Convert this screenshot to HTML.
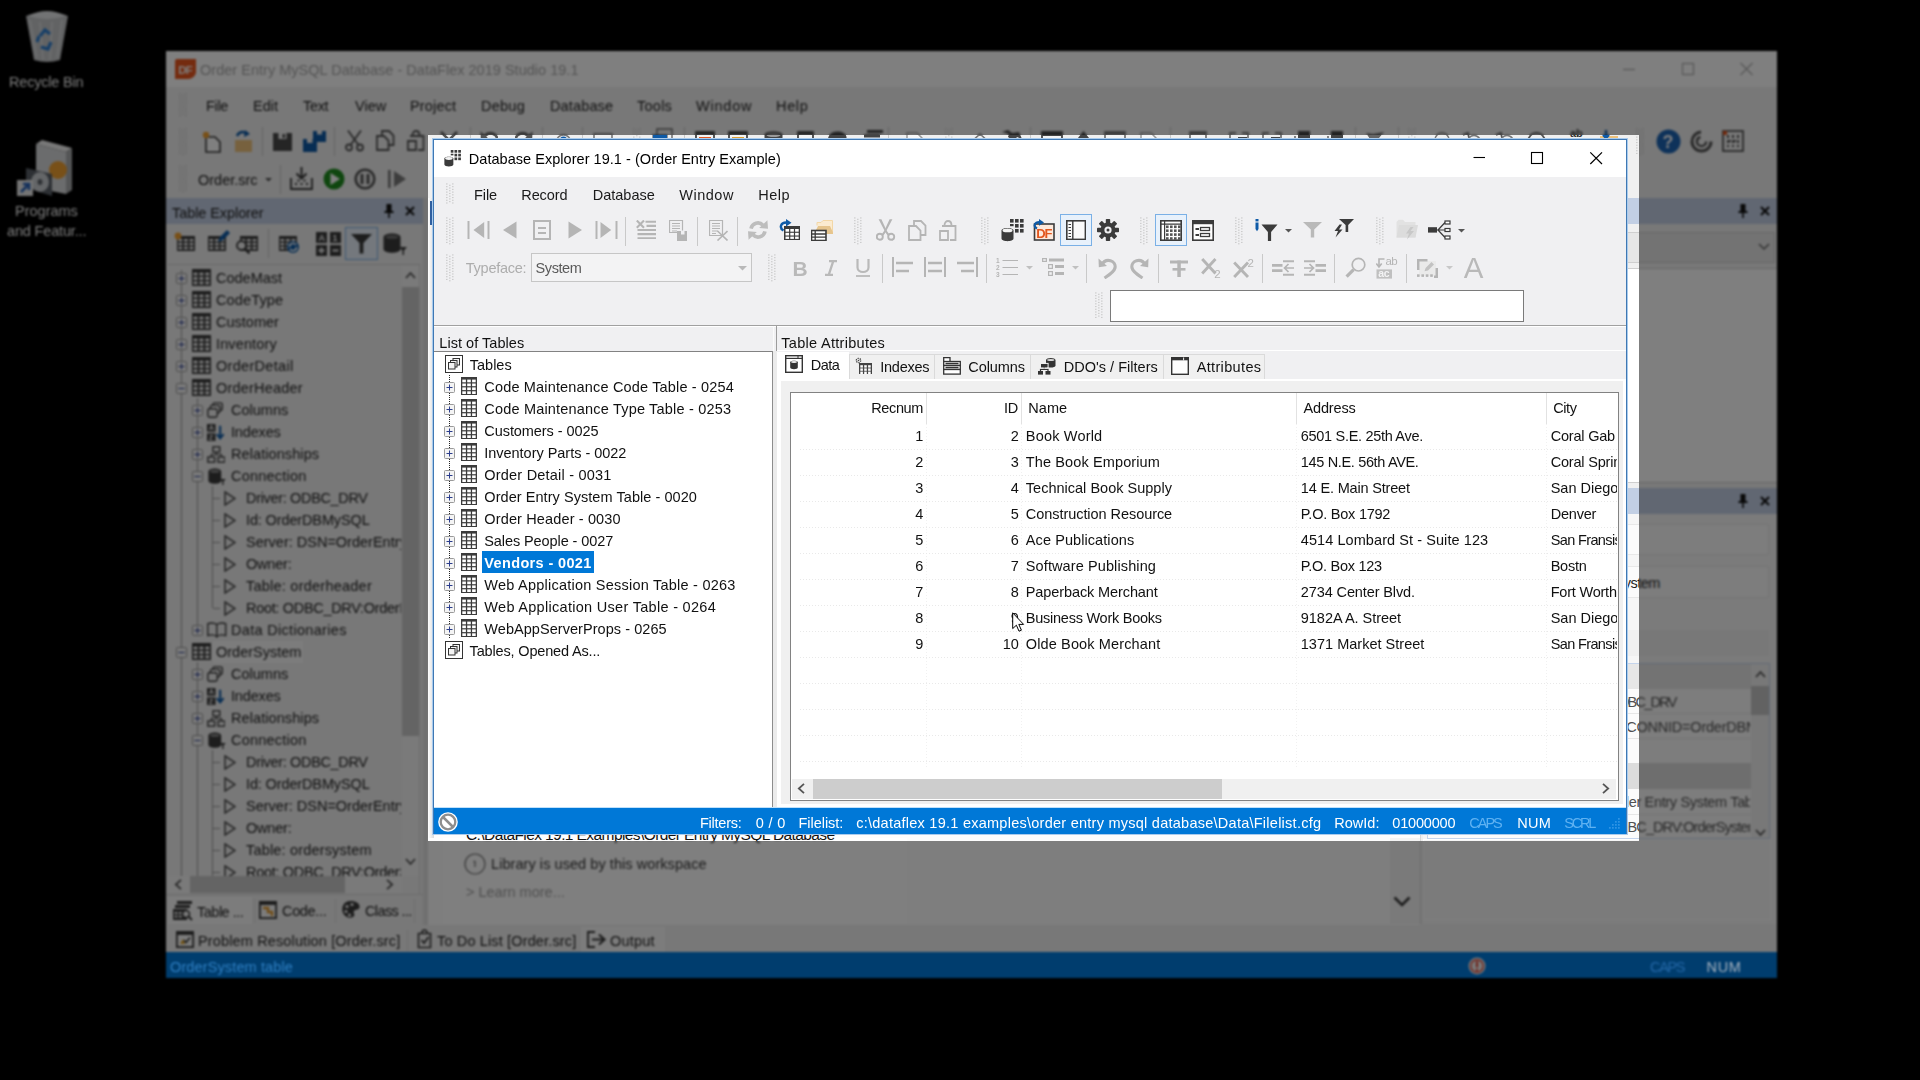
<!DOCTYPE html><html><head><meta charset="utf-8"><title>Database Explorer</title><style>
html,body{margin:0;padding:0;background:#000;}
body{width:1920px;height:1080px;position:relative;overflow:hidden;font-family:"Liberation Sans",sans-serif;}
.r{position:absolute;display:block;}
.t{position:absolute;white-space:pre;line-height:20px;font-size:14.5px;}
#blur{position:absolute;left:0;top:0;width:1920px;height:1080px;filter:blur(0.9px);}
#spot{position:absolute;left:428px;top:135px;width:1211px;height:706px;overflow:hidden;}
#spotin{position:absolute;left:-428px;top:-135px;width:1920px;height:1080px;}
#dbx{position:absolute;left:0;top:0;width:1920px;height:1080px;will-change:transform;}
</style></head><body>
<div id="blur"><svg class="r" style="left:20px;top:6px;" width="54" height="58" viewBox="0 0 54 58"><path d="M6 10L14 54Q27 58 40 54L48 10Q27 2 6 10Z" fill="#626364"/><path d="M8 10Q27 0 46 10Q27 16 8 10Z" fill="#727374"/><path d="M10 14L17 52M20 16L23 54M32 16L30 54M42 14L37 52" stroke="#6c6d6e" stroke-width="2" fill="none"/><g fill="none" stroke="#173f68" stroke-width="3.2"><path d="M20 30L25 24L30 28"/><path d="M31 36L28 43L21 41"/><path d="M17 36L19 30"/></g></svg>
<span class="t" style="left:9.00px;top:71.78px;font-size:14.5px;color:#7f7f7f;letter-spacing:-0.200px;">Recycle Bin</span>
<svg class="r" style="left:16px;top:138px;" width="58" height="60" viewBox="0 0 58 60"><path d="M20 6L50 14V56L20 50Z" fill="#6b6c6d"/><path d="M20 6L26 2L56 10L50 14Z" fill="#787878"/><path d="M50 14L56 10V52L50 56Z" fill="#545556"/><circle cx="42" cy="32" r="9" fill="#785018"/><path d="M10 30L36 36V58L10 50Z" fill="#2d3034"/><ellipse cx="24" cy="44" rx="9" ry="10" fill="#646668"/><ellipse cx="24" cy="44" rx="2.5" ry="3" fill="#303336"/><rect x="1" y="42" width="16" height="16" fill="#747474"/><path d="M5 54L12 47M7 46H13V52" stroke="#15315c" stroke-width="2.6" fill="none"/></svg>
<span class="t" style="left:15.00px;top:201.28px;font-size:14.5px;color:#7f7f7f;">Programs</span>
<span class="t" style="left:7.00px;top:221.28px;font-size:14.5px;color:#7f7f7f;letter-spacing:-0.167px;">and Featur...</span><div class="r " style="left:166px;top:51px;width:1611px;height:927px;background:#787878;"></div>
<div class="r " style="left:166px;top:51px;width:1611px;height:36px;background:#7f7f7f;"></div>
<svg class="r" style="left:175px;top:59px;" width="21" height="20" viewBox="0 0 21 20"><path d="M2 0H21V14Q19 20 12 20H0V2Q0 0 2 0Z" fill="#742b0f"/><text x="3.2" y="14.5" font-family="Liberation Sans,sans-serif" font-weight="bold" font-size="11.5" letter-spacing="-0.8" fill="#7f7f7f">DF</text></svg>
<span class="t" style="left:200.00px;top:60.28px;font-size:14.5px;color:#545454;letter-spacing:0.019px;">Order Entry MySQL Database - DataFlex 2019 Studio 19.1</span>
<svg class="r" style="left:1620px;top:60px;" width="140" height="18" viewBox="0 0 140 18"><g stroke="#585858" stroke-width="1.2" fill="none"><path d="M3 9.5H15"/><rect x="62.5" y="3.5" width="11" height="11"/><path d="M120.5 3L132.5 15M132.5 3L120.5 15"/></g></svg>
<svg class="r" style="left:179px;top:93px;" width="8" height="24" viewBox="0 0 8 24"><g fill="#5e5e5e"><rect x="0.3" y="0.40" width="1.1" height="1.1"/><rect x="6.3" y="0.40" width="1.1" height="1.1"/><rect x="3.3" y="1.76" width="1.1" height="1.1"/><rect x="0.3" y="3.12" width="1.1" height="1.1"/><rect x="6.3" y="3.12" width="1.1" height="1.1"/><rect x="3.3" y="4.48" width="1.1" height="1.1"/><rect x="0.3" y="5.84" width="1.1" height="1.1"/><rect x="6.3" y="5.84" width="1.1" height="1.1"/><rect x="3.3" y="7.20" width="1.1" height="1.1"/><rect x="0.3" y="8.56" width="1.1" height="1.1"/><rect x="6.3" y="8.56" width="1.1" height="1.1"/><rect x="3.3" y="9.92" width="1.1" height="1.1"/><rect x="0.3" y="11.28" width="1.1" height="1.1"/><rect x="6.3" y="11.28" width="1.1" height="1.1"/><rect x="3.3" y="12.64" width="1.1" height="1.1"/><rect x="0.3" y="14.00" width="1.1" height="1.1"/><rect x="6.3" y="14.00" width="1.1" height="1.1"/><rect x="3.3" y="15.36" width="1.1" height="1.1"/><rect x="0.3" y="16.72" width="1.1" height="1.1"/><rect x="6.3" y="16.72" width="1.1" height="1.1"/><rect x="3.3" y="18.08" width="1.1" height="1.1"/><rect x="0.3" y="19.44" width="1.1" height="1.1"/><rect x="6.3" y="19.44" width="1.1" height="1.1"/><rect x="3.3" y="20.80" width="1.1" height="1.1"/><rect x="0.3" y="22.16" width="1.1" height="1.1"/><rect x="6.3" y="22.16" width="1.1" height="1.1"/></g></svg>
<span class="t" style="left:206.00px;top:96.28px;font-size:14.5px;color:#0f0f0f;letter-spacing:-0.333px;">File</span>
<span class="t" style="left:253.00px;top:96.28px;font-size:14.5px;color:#0f0f0f;">Edit</span>
<span class="t" style="left:303.00px;top:96.28px;font-size:14.5px;color:#0f0f0f;letter-spacing:-0.333px;">Text</span>
<span class="t" style="left:355.00px;top:96.28px;font-size:14.5px;color:#0f0f0f;">View</span>
<span class="t" style="left:410.00px;top:96.28px;font-size:14.5px;color:#0f0f0f;letter-spacing:0.167px;">Project</span>
<span class="t" style="left:481.00px;top:96.28px;font-size:14.5px;color:#0f0f0f;letter-spacing:0.250px;">Debug</span>
<span class="t" style="left:550.00px;top:96.28px;font-size:14.5px;color:#0f0f0f;letter-spacing:0.143px;">Database</span>
<span class="t" style="left:637.00px;top:96.28px;font-size:14.5px;color:#0f0f0f;letter-spacing:0.250px;">Tools</span>
<span class="t" style="left:696.00px;top:96.28px;font-size:14.5px;color:#0f0f0f;letter-spacing:0.800px;">Window</span>
<span class="t" style="left:776.00px;top:96.28px;font-size:14.5px;color:#0f0f0f;letter-spacing:0.667px;">Help</span>
<svg class="r" style="left:179px;top:128px;" width="8" height="28" viewBox="0 0 8 28"><g fill="#5e5e5e"><rect x="0.3" y="0.40" width="1.1" height="1.1"/><rect x="6.3" y="0.40" width="1.1" height="1.1"/><rect x="3.3" y="1.76" width="1.1" height="1.1"/><rect x="0.3" y="3.12" width="1.1" height="1.1"/><rect x="6.3" y="3.12" width="1.1" height="1.1"/><rect x="3.3" y="4.48" width="1.1" height="1.1"/><rect x="0.3" y="5.84" width="1.1" height="1.1"/><rect x="6.3" y="5.84" width="1.1" height="1.1"/><rect x="3.3" y="7.20" width="1.1" height="1.1"/><rect x="0.3" y="8.56" width="1.1" height="1.1"/><rect x="6.3" y="8.56" width="1.1" height="1.1"/><rect x="3.3" y="9.92" width="1.1" height="1.1"/><rect x="0.3" y="11.28" width="1.1" height="1.1"/><rect x="6.3" y="11.28" width="1.1" height="1.1"/><rect x="3.3" y="12.64" width="1.1" height="1.1"/><rect x="0.3" y="14.00" width="1.1" height="1.1"/><rect x="6.3" y="14.00" width="1.1" height="1.1"/><rect x="3.3" y="15.36" width="1.1" height="1.1"/><rect x="0.3" y="16.72" width="1.1" height="1.1"/><rect x="6.3" y="16.72" width="1.1" height="1.1"/><rect x="3.3" y="18.08" width="1.1" height="1.1"/><rect x="0.3" y="19.44" width="1.1" height="1.1"/><rect x="6.3" y="19.44" width="1.1" height="1.1"/><rect x="3.3" y="20.80" width="1.1" height="1.1"/><rect x="0.3" y="22.16" width="1.1" height="1.1"/><rect x="6.3" y="22.16" width="1.1" height="1.1"/><rect x="3.3" y="23.52" width="1.1" height="1.1"/><rect x="0.3" y="24.88" width="1.1" height="1.1"/><rect x="6.3" y="24.88" width="1.1" height="1.1"/><rect x="3.3" y="26.24" width="1.1" height="1.1"/></g></svg>
<svg class="r" style="left:202px;top:130px;" width="22" height="24" viewBox="0 0 22 24"><path d="M4 7H13L18 12V22H4Z" fill="#7f7f7f" stroke="#1d1d1d" stroke-width="1.6"/><circle cx="4" cy="5" r="3.2" fill="#785018"/></svg>
<svg class="r" style="left:232px;top:130px;" width="23" height="24" viewBox="0 0 23 24"><path d="M3 10H20V22H3Z" fill="#77613e"/><path d="M5 6C7 1 13 1 15 4" stroke="#072d53" stroke-width="2.4" fill="none"/><path d="M13 0L18 4L12 7Z" fill="#072d53"/></svg>
<div class="r " style="left:262px;top:127px;width:1px;height:29px;background:#646464;"></div>
<svg class="r" style="left:273px;top:133px;" width="19" height="18" viewBox="0 0 19 18"><path d="M0 0H19V18H0Z" fill="#252525"/><rect x="5.5" y="0" width="8" height="6" fill="#787878"/><rect x="9.5" y="1" width="2.5" height="4" fill="#252525"/></svg>
<svg class="r" style="left:303px;top:131px;" width="23" height="21" viewBox="0 0 23 21"><path d="M10 0H23V11H10Z" fill="#072d53"/><path d="M0 8H14V21H0Z" fill="#072d53"/><rect x="14" y="0" width="5" height="3.5" fill="#787878"/><rect x="4" y="8" width="5.5" height="4" fill="#787878"/></svg>
<div class="r " style="left:334px;top:127px;width:1px;height:29px;background:#646464;"></div>
<svg class="r" style="left:345px;top:130px;" width="20" height="22" viewBox="0 0 20 22"><g fill="none" stroke="#2a2a2a" stroke-width="1.8"><circle cx="4" cy="17.5" r="3"/><circle cx="15" cy="17.5" r="3"/><path d="M3 0.5L13.5 15M16 0.5L5.5 15"/></g></svg>
<svg class="r" style="left:376px;top:130px;" width="19" height="21" viewBox="0 0 19 21"><g fill="none" stroke="#2a2a2a" stroke-width="1.8"><path d="M6 5V1H13L17.5 5.5V15H13"/><path d="M1 6H8L12.5 10.5V20H1Z"/></g></svg>
<svg class="r" style="left:407px;top:130px;" width="18" height="21" viewBox="0 0 18 21"><g fill="none" stroke="#2a2a2a" stroke-width="1.8"><path d="M5.5 5.5C5.5 -0.5 12.5 -0.5 12.5 5.5"/><path d="M3 6H16.5V20H11"/><path d="M1 11H9V20H1Z"/></g></svg>
<svg class="r" style="left:440px;top:131px;" width="18" height="18" viewBox="0 0 18 18"><path d="M1 1L17 17M17 1L1 17" stroke="#2a2a2a" stroke-width="2.6"/></svg>
<svg class="r" style="left:480px;top:131px;" width="18" height="20" viewBox="0 0 18 20"><path d="M0.5 0.5L0.8 9.2L9 8Z" fill="#2a2a2a"/><path d="M3.5 7C8 -1 18.5 2.5 17 10" fill="none" stroke="#2a2a2a" stroke-width="2.8"/></svg>
<svg class="r" style="left:515px;top:131px;" width="18" height="20" viewBox="0 0 18 20"><g transform="translate(18,0) scale(-1,1)"><path d="M0.5 0.5L0.8 9.2L9 8Z" fill="#2a2a2a"/><path d="M3.5 7C8 -1 18.5 2.5 17 10" fill="none" stroke="#2a2a2a" stroke-width="2.8"/></g></svg>
<svg class="r" style="left:555px;top:134px;" width="17" height="17" viewBox="0 0 17 17"><circle cx="8.5" cy="8.5" r="7.5" fill="none" stroke="#3b3b3b" stroke-width="1.6"/><circle cx="8.5" cy="6" r="3.6" fill="#072d53"/></svg>
<svg class="r" style="left:593px;top:133px;" width="20" height="18" viewBox="0 0 20 18"><rect x="1" y="1" width="18" height="16" fill="none" stroke="#3b3b3b" stroke-width="1.6"/></svg>
<svg class="r" style="left:633px;top:128px;" width="8" height="28" viewBox="0 0 8 28"><g fill="#5e5e5e"><rect x="0.3" y="0.40" width="1.1" height="1.1"/><rect x="6.3" y="0.40" width="1.1" height="1.1"/><rect x="3.3" y="1.76" width="1.1" height="1.1"/><rect x="0.3" y="3.12" width="1.1" height="1.1"/><rect x="6.3" y="3.12" width="1.1" height="1.1"/><rect x="3.3" y="4.48" width="1.1" height="1.1"/><rect x="0.3" y="5.84" width="1.1" height="1.1"/><rect x="6.3" y="5.84" width="1.1" height="1.1"/><rect x="3.3" y="7.20" width="1.1" height="1.1"/><rect x="0.3" y="8.56" width="1.1" height="1.1"/><rect x="6.3" y="8.56" width="1.1" height="1.1"/><rect x="3.3" y="9.92" width="1.1" height="1.1"/><rect x="0.3" y="11.28" width="1.1" height="1.1"/><rect x="6.3" y="11.28" width="1.1" height="1.1"/><rect x="3.3" y="12.64" width="1.1" height="1.1"/><rect x="0.3" y="14.00" width="1.1" height="1.1"/><rect x="6.3" y="14.00" width="1.1" height="1.1"/><rect x="3.3" y="15.36" width="1.1" height="1.1"/><rect x="0.3" y="16.72" width="1.1" height="1.1"/><rect x="6.3" y="16.72" width="1.1" height="1.1"/><rect x="3.3" y="18.08" width="1.1" height="1.1"/><rect x="0.3" y="19.44" width="1.1" height="1.1"/><rect x="6.3" y="19.44" width="1.1" height="1.1"/><rect x="3.3" y="20.80" width="1.1" height="1.1"/><rect x="0.3" y="22.16" width="1.1" height="1.1"/><rect x="6.3" y="22.16" width="1.1" height="1.1"/><rect x="3.3" y="23.52" width="1.1" height="1.1"/><rect x="0.3" y="24.88" width="1.1" height="1.1"/><rect x="6.3" y="24.88" width="1.1" height="1.1"/><rect x="3.3" y="26.24" width="1.1" height="1.1"/></g></svg>
<svg class="r" style="left:652px;top:128px;" width="21" height="24" viewBox="0 0 21 24"><rect x="5" y="1" width="15" height="12" fill="none" stroke="#3b3b3b" stroke-width="1.6"/><rect x="1" y="7" width="14" height="14" fill="#7a7a7a" stroke="#3b3b3b" stroke-width="1.4"/><rect x="1" y="7" width="14" height="3" fill="#072d53"/></svg>
<svg class="r" style="left:695px;top:131px;" width="20" height="21" viewBox="0 0 20 21"><rect x="1" y="1" width="18" height="19" fill="#7a7a7a" stroke="#222222" stroke-width="1.8"/><rect x="1" y="1" width="18" height="3" fill="#222222"/><rect x="4" y="6" width="12" height="10" fill="#712b0f"/></svg>
<svg class="r" style="left:728px;top:131px;" width="20" height="21" viewBox="0 0 20 21"><rect x="1" y="1" width="18" height="19" fill="#7a7a7a" stroke="#222222" stroke-width="1.8"/><rect x="1" y="1" width="18" height="3" fill="#222222"/><rect x="4" y="6" width="12" height="10" fill="#705018"/></svg>
<svg class="r" style="left:764px;top:131px;" width="19" height="21" viewBox="0 0 19 21"><path d="M0.5 4C0.5 -0.6 18.5 -0.6 18.5 4V17C18.5 21.6 0.5 21.6 0.5 17Z" fill="#222222"/><ellipse cx="9.5" cy="4" rx="7" ry="2" fill="#4d4d4d"/></svg>
<svg class="r" style="left:797px;top:131px;" width="17" height="21" viewBox="0 0 17 21"><rect x="1" y="1" width="15" height="19" fill="#7a7a7a" stroke="#222222" stroke-width="1.8"/><rect x="1" y="1" width="15" height="3" fill="#222222"/></svg>
<svg class="r" style="left:827px;top:131px;" width="20" height="20" viewBox="0 0 20 20"><path d="M10 0.5C2 0.5 -1 8 2 13.5C5 19 13 20 14 16C15 13 11.5 12.5 14 10C17 8.5 20 10 19.5 6C19 2.5 15 0.5 10 0.5Z" fill="#222222"/></svg>
<svg class="r" style="left:861px;top:130px;" width="22" height="22" viewBox="0 0 22 22"><g fill="#222222"><rect x="6" y="0" width="16" height="3"/><rect x="3" y="4.5" width="16" height="3"/><rect x="0" y="9" width="16" height="12"/></g></svg>
<svg class="r" style="left:906px;top:132px;" width="18" height="21" viewBox="0 0 18 21"><path d="M1 1H11L17 7V20H1Z" fill="#7c7c7c" stroke="#4d4d4d" stroke-width="1.5"/></svg>
<svg class="r" style="left:945px;top:128px;" width="8" height="28" viewBox="0 0 8 28"><g fill="#5e5e5e"><rect x="0.3" y="0.40" width="1.1" height="1.1"/><rect x="6.3" y="0.40" width="1.1" height="1.1"/><rect x="3.3" y="1.76" width="1.1" height="1.1"/><rect x="0.3" y="3.12" width="1.1" height="1.1"/><rect x="6.3" y="3.12" width="1.1" height="1.1"/><rect x="3.3" y="4.48" width="1.1" height="1.1"/><rect x="0.3" y="5.84" width="1.1" height="1.1"/><rect x="6.3" y="5.84" width="1.1" height="1.1"/><rect x="3.3" y="7.20" width="1.1" height="1.1"/><rect x="0.3" y="8.56" width="1.1" height="1.1"/><rect x="6.3" y="8.56" width="1.1" height="1.1"/><rect x="3.3" y="9.92" width="1.1" height="1.1"/><rect x="0.3" y="11.28" width="1.1" height="1.1"/><rect x="6.3" y="11.28" width="1.1" height="1.1"/><rect x="3.3" y="12.64" width="1.1" height="1.1"/><rect x="0.3" y="14.00" width="1.1" height="1.1"/><rect x="6.3" y="14.00" width="1.1" height="1.1"/><rect x="3.3" y="15.36" width="1.1" height="1.1"/><rect x="0.3" y="16.72" width="1.1" height="1.1"/><rect x="6.3" y="16.72" width="1.1" height="1.1"/><rect x="3.3" y="18.08" width="1.1" height="1.1"/><rect x="0.3" y="19.44" width="1.1" height="1.1"/><rect x="6.3" y="19.44" width="1.1" height="1.1"/><rect x="3.3" y="20.80" width="1.1" height="1.1"/><rect x="0.3" y="22.16" width="1.1" height="1.1"/><rect x="6.3" y="22.16" width="1.1" height="1.1"/><rect x="3.3" y="23.52" width="1.1" height="1.1"/><rect x="0.3" y="24.88" width="1.1" height="1.1"/><rect x="6.3" y="24.88" width="1.1" height="1.1"/><rect x="3.3" y="26.24" width="1.1" height="1.1"/></g></svg>
<svg class="r" style="left:969px;top:133px;" width="22" height="18" viewBox="0 0 22 18"><path d="M1 10L11 1L21 10" fill="none" stroke="#3b3b3b" stroke-width="1.6"/><rect x="4" y="10" width="14" height="8" fill="none" stroke="#3b3b3b" stroke-width="1.4"/></svg>
<svg class="r" style="left:1000px;top:130px;" width="23" height="22" viewBox="0 0 23 22"><path d="M2 2L9 4L8 7L14 11L17 7L22 9L19 2L12 3L8 0ZM3 12L10 9L13 13L5 21L1 17Z" fill="#222222"/></svg>
<svg class="r" style="left:1041px;top:131px;" width="22" height="21" viewBox="0 0 22 21"><rect x="1" y="1" width="20" height="19" fill="#7a7a7a" stroke="#222222" stroke-width="1.8"/><rect x="1" y="1" width="20" height="4" fill="#222222"/></svg>
<svg class="r" style="left:1074px;top:131px;" width="19" height="20" viewBox="0 0 19 20"><path d="M9.5 0L19 12H0Z" fill="#222222"/><rect x="7" y="12" width="5" height="8" fill="#222222"/></svg>
<svg class="r" style="left:1104px;top:131px;" width="22" height="21" viewBox="0 0 22 21"><rect x="1" y="1" width="20" height="19" fill="#7a7a7a" stroke="#3b3b3b" stroke-width="1.8"/><rect x="1" y="1" width="20" height="3" fill="#3b3b3b"/></svg>
<svg class="r" style="left:1140px;top:132px;" width="18" height="21" viewBox="0 0 18 21"><path d="M1 1H11L17 7V20H1Z" fill="#7c7c7c" stroke="#4d4d4d" stroke-width="1.5"/></svg>
<svg class="r" style="left:1189px;top:131px;" width="18" height="21" viewBox="0 0 18 21"><rect x="1" y="1" width="16" height="19" fill="#7a7a7a" stroke="#3b3b3b" stroke-width="1.8"/><rect x="1" y="1" width="16" height="3" fill="#3b3b3b"/></svg>
<svg class="r" style="left:1229px;top:132px;" width="20" height="20" viewBox="0 0 20 20"><path d="M7 1H1V19H7M13 1H19V10" fill="none" stroke="#3b3b3b" stroke-width="1.8"/><rect x="9" y="5" width="9" height="9" fill="#222222"/></svg>
<svg class="r" style="left:1262px;top:132px;" width="20" height="20" viewBox="0 0 20 20"><path d="M7 1H1V19H7M13 1H19V10" fill="none" stroke="#3b3b3b" stroke-width="1.8"/><rect x="9" y="5" width="9" height="9" fill="#222222"/></svg>
<svg class="r" style="left:1294px;top:131px;" width="20" height="20" viewBox="0 0 20 20"><rect x="4" y="0" width="12" height="9" fill="#222222"/><path d="M1 5V19H19V12" fill="none" stroke="#3b3b3b" stroke-width="1.8"/></svg>
<svg class="r" style="left:1327px;top:131px;" width="20" height="20" viewBox="0 0 20 20"><rect x="4" y="0" width="12" height="9" fill="#222222"/><path d="M1 5V19H19V12" fill="none" stroke="#3b3b3b" stroke-width="1.8"/></svg>
<svg class="r" style="left:1364px;top:131px;" width="22" height="20" viewBox="0 0 22 20"><path d="M2 2L9 3L20 1L15 7L20 12L10 9L3 14L6 8Z" fill="#333333"/></svg>
<svg class="r" style="left:1408px;top:128px;" width="8" height="28" viewBox="0 0 8 28"><g fill="#5e5e5e"><rect x="0.3" y="0.40" width="1.1" height="1.1"/><rect x="6.3" y="0.40" width="1.1" height="1.1"/><rect x="3.3" y="1.76" width="1.1" height="1.1"/><rect x="0.3" y="3.12" width="1.1" height="1.1"/><rect x="6.3" y="3.12" width="1.1" height="1.1"/><rect x="3.3" y="4.48" width="1.1" height="1.1"/><rect x="0.3" y="5.84" width="1.1" height="1.1"/><rect x="6.3" y="5.84" width="1.1" height="1.1"/><rect x="3.3" y="7.20" width="1.1" height="1.1"/><rect x="0.3" y="8.56" width="1.1" height="1.1"/><rect x="6.3" y="8.56" width="1.1" height="1.1"/><rect x="3.3" y="9.92" width="1.1" height="1.1"/><rect x="0.3" y="11.28" width="1.1" height="1.1"/><rect x="6.3" y="11.28" width="1.1" height="1.1"/><rect x="3.3" y="12.64" width="1.1" height="1.1"/><rect x="0.3" y="14.00" width="1.1" height="1.1"/><rect x="6.3" y="14.00" width="1.1" height="1.1"/><rect x="3.3" y="15.36" width="1.1" height="1.1"/><rect x="0.3" y="16.72" width="1.1" height="1.1"/><rect x="6.3" y="16.72" width="1.1" height="1.1"/><rect x="3.3" y="18.08" width="1.1" height="1.1"/><rect x="0.3" y="19.44" width="1.1" height="1.1"/><rect x="6.3" y="19.44" width="1.1" height="1.1"/><rect x="3.3" y="20.80" width="1.1" height="1.1"/><rect x="0.3" y="22.16" width="1.1" height="1.1"/><rect x="6.3" y="22.16" width="1.1" height="1.1"/><rect x="3.3" y="23.52" width="1.1" height="1.1"/><rect x="0.3" y="24.88" width="1.1" height="1.1"/><rect x="6.3" y="24.88" width="1.1" height="1.1"/><rect x="3.3" y="26.24" width="1.1" height="1.1"/></g></svg>
<svg class="r" style="left:1431px;top:132px;" width="20" height="20" viewBox="0 0 20 20"><circle cx="11" cy="8" r="7" fill="none" stroke="#3b3b3b" stroke-width="1.6"/><path d="M6 13L1 19" stroke="#3b3b3b" stroke-width="2.6"/></svg>
<svg class="r" style="left:1462px;top:132px;" width="20" height="18" viewBox="0 0 20 18"><path d="M1 3L6 1L7 6" fill="none" stroke="#2a2a2a" stroke-width="1.8"/><circle cx="12" cy="10" r="6.5" fill="none" stroke="#3b3b3b" stroke-width="1.6"/></svg>
<svg class="r" style="left:1495px;top:132px;" width="20" height="18" viewBox="0 0 20 18"><path d="M1 3L6 1L7 6" fill="none" stroke="#2a2a2a" stroke-width="1.8"/><circle cx="12" cy="10" r="6.5" fill="none" stroke="#3b3b3b" stroke-width="1.6"/></svg>
<svg class="r" style="left:1526px;top:131px;" width="21" height="21" viewBox="0 0 21 21"><circle cx="10.5" cy="10.5" r="8.5" fill="none" stroke="#2a2a2a" stroke-width="1.8"/><circle cx="10.5" cy="10.5" r="3" fill="#3b3b3b"/></svg>
<svg class="r" style="left:1566px;top:128px;" width="22" height="22" viewBox="0 0 22 22"><text x="4" y="9" font-family="Liberation Sans,sans-serif" font-size="11" font-weight="bold" fill="#191919">ab</text><rect x="1" y="12" width="14" height="9" fill="#3b3b3b"/></svg>
<div class="r " style="left:470px;top:127px;width:1px;height:29px;background:#646464;"></div>
<div class="r " style="left:542px;top:127px;width:1px;height:29px;background:#646464;"></div>
<div class="r " style="left:582px;top:127px;width:1px;height:29px;background:#646464;"></div>
<div class="r " style="left:684px;top:127px;width:1px;height:29px;background:#646464;"></div>
<div class="r " style="left:888px;top:127px;width:1px;height:29px;background:#646464;"></div>
<div class="r " style="left:1030px;top:127px;width:1px;height:29px;background:#646464;"></div>
<div class="r " style="left:1170px;top:127px;width:1px;height:29px;background:#646464;"></div>
<div class="r " style="left:1355px;top:127px;width:1px;height:29px;background:#646464;"></div>
<div class="r " style="left:1398px;top:127px;width:1px;height:29px;background:#646464;"></div>
<svg class="r" style="left:1598px;top:130px;" width="22" height="22" viewBox="0 0 22 22"><path d="M2 6H20V20H2Z" fill="#77613e"/><path d="M8 0V8M5 5L8 8L11 5" stroke="#072d53" stroke-width="2.4" fill="none"/></svg>
<svg class="r" style="left:1636px;top:128px;" width="8" height="28" viewBox="0 0 8 28"><g fill="#5e5e5e"><rect x="0.3" y="0.40" width="1.1" height="1.1"/><rect x="6.3" y="0.40" width="1.1" height="1.1"/><rect x="3.3" y="1.76" width="1.1" height="1.1"/><rect x="0.3" y="3.12" width="1.1" height="1.1"/><rect x="6.3" y="3.12" width="1.1" height="1.1"/><rect x="3.3" y="4.48" width="1.1" height="1.1"/><rect x="0.3" y="5.84" width="1.1" height="1.1"/><rect x="6.3" y="5.84" width="1.1" height="1.1"/><rect x="3.3" y="7.20" width="1.1" height="1.1"/><rect x="0.3" y="8.56" width="1.1" height="1.1"/><rect x="6.3" y="8.56" width="1.1" height="1.1"/><rect x="3.3" y="9.92" width="1.1" height="1.1"/><rect x="0.3" y="11.28" width="1.1" height="1.1"/><rect x="6.3" y="11.28" width="1.1" height="1.1"/><rect x="3.3" y="12.64" width="1.1" height="1.1"/><rect x="0.3" y="14.00" width="1.1" height="1.1"/><rect x="6.3" y="14.00" width="1.1" height="1.1"/><rect x="3.3" y="15.36" width="1.1" height="1.1"/><rect x="0.3" y="16.72" width="1.1" height="1.1"/><rect x="6.3" y="16.72" width="1.1" height="1.1"/><rect x="3.3" y="18.08" width="1.1" height="1.1"/><rect x="0.3" y="19.44" width="1.1" height="1.1"/><rect x="6.3" y="19.44" width="1.1" height="1.1"/><rect x="3.3" y="20.80" width="1.1" height="1.1"/><rect x="0.3" y="22.16" width="1.1" height="1.1"/><rect x="6.3" y="22.16" width="1.1" height="1.1"/><rect x="3.3" y="23.52" width="1.1" height="1.1"/><rect x="0.3" y="24.88" width="1.1" height="1.1"/><rect x="6.3" y="24.88" width="1.1" height="1.1"/><rect x="3.3" y="26.24" width="1.1" height="1.1"/></g></svg>
<svg class="r" style="left:1656px;top:129px;" width="25" height="25" viewBox="0 0 25 25"><circle cx="12.5" cy="12.5" r="12" fill="#0e325a"/><text x="6.5" y="19" font-family="Liberation Sans,sans-serif" font-weight="bold" font-size="18" fill="#7f7f7f">?</text></svg>
<svg class="r" style="left:1690px;top:130px;" width="23" height="23" viewBox="0 0 23 23"><g fill="none" stroke="#2a2a2a"><circle cx="11.5" cy="11.5" r="9.5" stroke-width="3" stroke-dasharray="44 16"/><circle cx="11.5" cy="11.5" r="4.6" stroke-width="2.4" stroke-dasharray="20 9"/></g></svg>
<svg class="r" style="left:1722px;top:130px;" width="22" height="22" viewBox="0 0 22 22"><rect x="1" y="1" width="20" height="20" fill="#787878" stroke="#2a2a2a" stroke-width="1.8"/><path d="M6 5V17M11 5V17M16 5V17M6 11H16" stroke="#2a2a2a" stroke-width="2" stroke-dasharray="3 2"/><rect x="1" y="1" width="4" height="4" fill="#712b0f"/></svg>
<svg class="r" style="left:179px;top:165px;" width="8" height="28" viewBox="0 0 8 28"><g fill="#5e5e5e"><rect x="0.3" y="0.40" width="1.1" height="1.1"/><rect x="6.3" y="0.40" width="1.1" height="1.1"/><rect x="3.3" y="1.76" width="1.1" height="1.1"/><rect x="0.3" y="3.12" width="1.1" height="1.1"/><rect x="6.3" y="3.12" width="1.1" height="1.1"/><rect x="3.3" y="4.48" width="1.1" height="1.1"/><rect x="0.3" y="5.84" width="1.1" height="1.1"/><rect x="6.3" y="5.84" width="1.1" height="1.1"/><rect x="3.3" y="7.20" width="1.1" height="1.1"/><rect x="0.3" y="8.56" width="1.1" height="1.1"/><rect x="6.3" y="8.56" width="1.1" height="1.1"/><rect x="3.3" y="9.92" width="1.1" height="1.1"/><rect x="0.3" y="11.28" width="1.1" height="1.1"/><rect x="6.3" y="11.28" width="1.1" height="1.1"/><rect x="3.3" y="12.64" width="1.1" height="1.1"/><rect x="0.3" y="14.00" width="1.1" height="1.1"/><rect x="6.3" y="14.00" width="1.1" height="1.1"/><rect x="3.3" y="15.36" width="1.1" height="1.1"/><rect x="0.3" y="16.72" width="1.1" height="1.1"/><rect x="6.3" y="16.72" width="1.1" height="1.1"/><rect x="3.3" y="18.08" width="1.1" height="1.1"/><rect x="0.3" y="19.44" width="1.1" height="1.1"/><rect x="6.3" y="19.44" width="1.1" height="1.1"/><rect x="3.3" y="20.80" width="1.1" height="1.1"/><rect x="0.3" y="22.16" width="1.1" height="1.1"/><rect x="6.3" y="22.16" width="1.1" height="1.1"/><rect x="3.3" y="23.52" width="1.1" height="1.1"/><rect x="0.3" y="24.88" width="1.1" height="1.1"/><rect x="6.3" y="24.88" width="1.1" height="1.1"/><rect x="3.3" y="26.24" width="1.1" height="1.1"/></g></svg>
<span class="t" style="left:198.00px;top:170.28px;font-size:14.5px;color:#0f0f0f;">Order.src</span>
<svg class="r" style="left:265px;top:178px;" width="7" height="4" viewBox="0 0 7 4"><path fill="#2a2a2a" d="M0 0H7L3.5 3.6Z"/></svg>
<div class="r " style="left:280px;top:165px;width:1px;height:29px;background:#646464;"></div>
<svg class="r" style="left:290px;top:167px;" width="23" height="23" viewBox="0 0 23 23"><path d="M1 11V22H22V11" fill="none" stroke="#1d1d1d" stroke-width="1.8"/><path d="M11.5 0V11M6.5 6.5L11.5 11.5L16.5 6.5" stroke="#1d1d1d" stroke-width="2" fill="none"/><path d="M5 17H7M10.5 17H12.5M16 17H18M7.5 13.5H9.5M13.5 13.5H15.5" stroke="#1d1d1d" stroke-width="2"/></svg>
<svg class="r" style="left:323px;top:168px;" width="22" height="22" viewBox="0 0 22 22"><circle cx="11" cy="11" r="10.5" fill="#0f460f"/><path d="M7.5 5L17 11L7.5 17Z" fill="#7f7f7f"/></svg>
<svg class="r" style="left:354px;top:168px;" width="22" height="22" viewBox="0 0 22 22"><circle cx="11" cy="11" r="9.3" fill="none" stroke="#2a2a2a" stroke-width="2.6"/><path d="M8 6V16M14 6V16" stroke="#2a2a2a" stroke-width="3"/></svg>
<svg class="r" style="left:388px;top:170px;" width="19" height="18" viewBox="0 0 19 18"><rect x="0" y="0" width="2.6" height="18" fill="#3d3d3d"/><path d="M6 1L18 9L6 17Z" fill="#3d3d3d"/></svg><div class="r " style="left:166px;top:198px;width:257px;height:26px;background:#616772;"></div>
<span class="t" style="left:172.00px;top:202.98px;font-size:14.5px;color:#0f0f0f;letter-spacing:-0.077px;">Table Explorer</span>
<svg class="r" style="left:384px;top:204px;" width="10" height="14" viewBox="0 0 10 14"><path d="M2.5 0H7.5V7H9.5V9H0.5V7H2.5Z" fill="#080808"/><path d="M5 9V14" stroke="#080808" stroke-width="1.6"/></svg>
<svg class="r" style="left:405px;top:206px;" width="10" height="10" viewBox="0 0 10 10"><path d="M1 1L9 9M9 1L1 9" stroke="#080808" stroke-width="2"/></svg>
<svg class="r" style="left:177px;top:236px;" width="18" height="15" viewBox="0 0 18 15"><rect width="18" height="15" fill="#1d1d1d"/><g fill="#787878"><rect x="1.3" y="3" width="3.9" height="2.4"/><rect x="1.3" y="6.9" width="3.9" height="2.4"/><rect x="1.3" y="10.8" width="3.9" height="2.4"/><rect x="6.9" y="3" width="3.9" height="2.4"/><rect x="6.9" y="6.9" width="3.9" height="2.4"/><rect x="6.9" y="10.8" width="3.9" height="2.4"/><rect x="12.5" y="3" width="3.9" height="2.4"/><rect x="12.5" y="6.9" width="3.9" height="2.4"/><rect x="12.5" y="10.8" width="3.9" height="2.4"/></g></svg>
<svg class="r" style="left:208px;top:236px;" width="18" height="15" viewBox="0 0 18 15"><rect width="18" height="15" fill="#1d1d1d"/><g fill="#787878"><rect x="1.3" y="3" width="3.9" height="2.4"/><rect x="1.3" y="6.9" width="3.9" height="2.4"/><rect x="1.3" y="10.8" width="3.9" height="2.4"/><rect x="6.9" y="3" width="3.9" height="2.4"/><rect x="6.9" y="6.9" width="3.9" height="2.4"/><rect x="6.9" y="10.8" width="3.9" height="2.4"/><rect x="12.5" y="3" width="3.9" height="2.4"/><rect x="12.5" y="6.9" width="3.9" height="2.4"/><rect x="12.5" y="10.8" width="3.9" height="2.4"/></g></svg>
<svg class="r" style="left:240px;top:236px;" width="18" height="15" viewBox="0 0 18 15"><rect width="18" height="15" fill="#1d1d1d"/><g fill="#787878"><rect x="1.3" y="3" width="3.9" height="2.4"/><rect x="1.3" y="6.9" width="3.9" height="2.4"/><rect x="1.3" y="10.8" width="3.9" height="2.4"/><rect x="6.9" y="3" width="3.9" height="2.4"/><rect x="6.9" y="6.9" width="3.9" height="2.4"/><rect x="6.9" y="10.8" width="3.9" height="2.4"/><rect x="12.5" y="3" width="3.9" height="2.4"/><rect x="12.5" y="6.9" width="3.9" height="2.4"/><rect x="12.5" y="10.8" width="3.9" height="2.4"/></g></svg>
<svg class="r" style="left:279px;top:236px;" width="18" height="15" viewBox="0 0 18 15"><rect width="18" height="15" fill="#1d1d1d"/><g fill="#787878"><rect x="1.3" y="3" width="3.9" height="2.4"/><rect x="1.3" y="6.9" width="3.9" height="2.4"/><rect x="1.3" y="10.8" width="3.9" height="2.4"/><rect x="6.9" y="3" width="3.9" height="2.4"/><rect x="6.9" y="6.9" width="3.9" height="2.4"/><rect x="6.9" y="10.8" width="3.9" height="2.4"/><rect x="12.5" y="3" width="3.9" height="2.4"/><rect x="12.5" y="6.9" width="3.9" height="2.4"/><rect x="12.5" y="10.8" width="3.9" height="2.4"/></g></svg>
<svg class="r" style="left:174px;top:232px;" width="8" height="8" viewBox="0 0 8 8"><circle cx="4" cy="4" r="3.4" fill="#785018"/></svg>
<svg class="r" style="left:218px;top:230px;" width="12" height="12" viewBox="0 0 12 12"><path d="M0 12L2 7L9 0L12 3L5 10Z" fill="#072d53"/></svg>
<svg class="r" style="left:236px;top:240px;" width="14" height="14" viewBox="0 0 14 14"><circle cx="5.5" cy="5.5" r="4.5" fill="#787878" stroke="#1d1d1d" stroke-width="1.8"/><path d="M9 9L13.5 13.5" stroke="#1d1d1d" stroke-width="2.4"/></svg>
<div class="r " style="left:268px;top:229px;width:1px;height:29px;background:#646464;"></div>
<svg class="r" style="left:286px;top:240px;" width="14" height="14" viewBox="0 0 14 14"><circle cx="7" cy="7" r="6" fill="#072d53"/><path d="M3.5 7A3.5 3.5 0 0 1 10 5M10.5 7A3.5 3.5 0 0 1 4 9" stroke="#7f7f7f" stroke-width="1.6" fill="none"/></svg>
<svg class="r" style="left:316px;top:232px;" width="25" height="24" viewBox="0 0 25 24"><g fill="#1d1d1d"><rect x="0" y="0" width="11" height="11"/><rect x="14" y="0" width="11" height="11"/><rect x="0" y="13" width="11" height="11"/><rect x="14" y="13" width="11" height="11"/></g><g fill="#787878" font-family="Liberation Sans,sans-serif" font-weight="bold" font-size="9"><text x="2.4" y="8.7">A</text><text x="16.6" y="8.7">1</text></g><path d="M2.5 18.5H8.5M5.5 15.5V21.5M16.5 18.5H22.5" stroke="#787878" stroke-width="1.8"/></svg>
<div class="r " style="left:345px;top:227px;width:33px;height:33px;background:#74787d;border:1px solid #3d5873;box-sizing:border-box;"></div>
<svg class="r" style="left:351px;top:234px;" width="21" height="20" viewBox="0 0 21 20"><path fill="#1d1d1d" d="M0 0H21L12.4 9V19.5H8.6V9Z"/></svg>
<svg class="r" style="left:383px;top:233px;" width="24" height="22" viewBox="0 0 24 22"><path d="M0.5 4C0.5 -0.8 17.5 -0.8 17.5 4V16C17.5 21 0.5 21 0.5 16Z" fill="#1d1d1d"/><ellipse cx="9" cy="4" rx="6.5" ry="1.8" fill="#3b3b3b"/><path d="M16 14H24L21 17.5V22H19.5V17.5Z" fill="#1d1d1d"/></svg>
<div class="r " style="left:168px;top:264px;width:252px;height:1px;background:#686868;"></div>
<div class="r" style="left:168px;top:265px;width:232.5px;height:611px;overflow:hidden">
<div class="r " style="left:13px;top:5px;width:1px;height:620px;background:#4d4d4d;"></div>
<div class="r " style="left:29px;top:133px;width:1px;height:236px;background:#4d4d4d;"></div>
<div class="r " style="left:29px;top:397px;width:1px;height:240px;background:#4d4d4d;"></div>
<div class="r " style="left:44px;top:221px;width:1px;height:122px;background:#4d4d4d;"></div>
<div class="r " style="left:44px;top:485px;width:1px;height:140px;background:#4d4d4d;"></div>
<div class="r " style="left:45px;top:376px;width:90px;height:22px;background:#7c7c7c;"></div>
<span class="t" style="left:48.00px;top:3.28px;font-size:14.5px;color:#0f0f0f;">CodeMast</span>
<svg class="r" style="left:8px;top:7.5px;" width="11" height="11" viewBox="0 0 11 11"><rect x="0.5" y="0.5" width="10" height="10" rx="1" fill="#7a7a7a" stroke="#4d4d4d"/><path d="M2.5 5.5H8.5M5.5 2.5V8.5" stroke="#151e46" stroke-width="1" fill="none"/></svg>
<svg class="r" style="left:24px;top:4px;" width="19" height="17" viewBox="0 0 19 17"><rect width="19" height="17" fill="#1d1d1d"/><g fill="#787878"><rect x="1.5" y="3.6" width="4" height="2.9"/><rect x="1.5" y="8" width="4" height="2.9"/><rect x="1.5" y="12.4" width="4" height="2.9"/><rect x="7.4" y="3.6" width="4" height="2.9"/><rect x="7.4" y="8" width="4" height="2.9"/><rect x="7.4" y="12.4" width="4" height="2.9"/><rect x="13.3" y="3.6" width="4" height="2.9"/><rect x="13.3" y="8" width="4" height="2.9"/><rect x="13.3" y="12.4" width="4" height="2.9"/></g></svg>
<span class="t" style="left:48.00px;top:25.28px;font-size:14.5px;color:#0f0f0f;letter-spacing:0.143px;">CodeType</span>
<svg class="r" style="left:8px;top:29.5px;" width="11" height="11" viewBox="0 0 11 11"><rect x="0.5" y="0.5" width="10" height="10" rx="1" fill="#7a7a7a" stroke="#4d4d4d"/><path d="M2.5 5.5H8.5M5.5 2.5V8.5" stroke="#151e46" stroke-width="1" fill="none"/></svg>
<svg class="r" style="left:24px;top:26px;" width="19" height="17" viewBox="0 0 19 17"><rect width="19" height="17" fill="#1d1d1d"/><g fill="#787878"><rect x="1.5" y="3.6" width="4" height="2.9"/><rect x="1.5" y="8" width="4" height="2.9"/><rect x="1.5" y="12.4" width="4" height="2.9"/><rect x="7.4" y="3.6" width="4" height="2.9"/><rect x="7.4" y="8" width="4" height="2.9"/><rect x="7.4" y="12.4" width="4" height="2.9"/><rect x="13.3" y="3.6" width="4" height="2.9"/><rect x="13.3" y="8" width="4" height="2.9"/><rect x="13.3" y="12.4" width="4" height="2.9"/></g></svg>
<span class="t" style="left:48.00px;top:47.28px;font-size:14.5px;color:#0f0f0f;">Customer</span>
<svg class="r" style="left:8px;top:51.5px;" width="11" height="11" viewBox="0 0 11 11"><rect x="0.5" y="0.5" width="10" height="10" rx="1" fill="#7a7a7a" stroke="#4d4d4d"/><path d="M2.5 5.5H8.5M5.5 2.5V8.5" stroke="#151e46" stroke-width="1" fill="none"/></svg>
<svg class="r" style="left:24px;top:48px;" width="19" height="17" viewBox="0 0 19 17"><rect width="19" height="17" fill="#1d1d1d"/><g fill="#787878"><rect x="1.5" y="3.6" width="4" height="2.9"/><rect x="1.5" y="8" width="4" height="2.9"/><rect x="1.5" y="12.4" width="4" height="2.9"/><rect x="7.4" y="3.6" width="4" height="2.9"/><rect x="7.4" y="8" width="4" height="2.9"/><rect x="7.4" y="12.4" width="4" height="2.9"/><rect x="13.3" y="3.6" width="4" height="2.9"/><rect x="13.3" y="8" width="4" height="2.9"/><rect x="13.3" y="12.4" width="4" height="2.9"/></g></svg>
<span class="t" style="left:48.00px;top:69.28px;font-size:14.5px;color:#0f0f0f;letter-spacing:0.125px;">Inventory</span>
<svg class="r" style="left:8px;top:73.5px;" width="11" height="11" viewBox="0 0 11 11"><rect x="0.5" y="0.5" width="10" height="10" rx="1" fill="#7a7a7a" stroke="#4d4d4d"/><path d="M2.5 5.5H8.5M5.5 2.5V8.5" stroke="#151e46" stroke-width="1" fill="none"/></svg>
<svg class="r" style="left:24px;top:70px;" width="19" height="17" viewBox="0 0 19 17"><rect width="19" height="17" fill="#1d1d1d"/><g fill="#787878"><rect x="1.5" y="3.6" width="4" height="2.9"/><rect x="1.5" y="8" width="4" height="2.9"/><rect x="1.5" y="12.4" width="4" height="2.9"/><rect x="7.4" y="3.6" width="4" height="2.9"/><rect x="7.4" y="8" width="4" height="2.9"/><rect x="7.4" y="12.4" width="4" height="2.9"/><rect x="13.3" y="3.6" width="4" height="2.9"/><rect x="13.3" y="8" width="4" height="2.9"/><rect x="13.3" y="12.4" width="4" height="2.9"/></g></svg>
<span class="t" style="left:48.00px;top:91.28px;font-size:14.5px;color:#0f0f0f;letter-spacing:0.300px;">OrderDetail</span>
<svg class="r" style="left:8px;top:95.5px;" width="11" height="11" viewBox="0 0 11 11"><rect x="0.5" y="0.5" width="10" height="10" rx="1" fill="#7a7a7a" stroke="#4d4d4d"/><path d="M2.5 5.5H8.5M5.5 2.5V8.5" stroke="#151e46" stroke-width="1" fill="none"/></svg>
<svg class="r" style="left:24px;top:92px;" width="19" height="17" viewBox="0 0 19 17"><rect width="19" height="17" fill="#1d1d1d"/><g fill="#787878"><rect x="1.5" y="3.6" width="4" height="2.9"/><rect x="1.5" y="8" width="4" height="2.9"/><rect x="1.5" y="12.4" width="4" height="2.9"/><rect x="7.4" y="3.6" width="4" height="2.9"/><rect x="7.4" y="8" width="4" height="2.9"/><rect x="7.4" y="12.4" width="4" height="2.9"/><rect x="13.3" y="3.6" width="4" height="2.9"/><rect x="13.3" y="8" width="4" height="2.9"/><rect x="13.3" y="12.4" width="4" height="2.9"/></g></svg>
<span class="t" style="left:48.00px;top:113.28px;font-size:14.5px;color:#0f0f0f;letter-spacing:0.200px;">OrderHeader</span>
<svg class="r" style="left:8px;top:117.5px;" width="11" height="11" viewBox="0 0 11 11"><rect x="0.5" y="0.5" width="10" height="10" rx="1" fill="#7a7a7a" stroke="#4d4d4d"/><path d="M2.5 5.5H8.5" stroke="#151e46" stroke-width="1" fill="none"/></svg>
<svg class="r" style="left:24px;top:114px;" width="19" height="17" viewBox="0 0 19 17"><rect width="19" height="17" fill="#1d1d1d"/><g fill="#787878"><rect x="1.5" y="3.6" width="4" height="2.9"/><rect x="1.5" y="8" width="4" height="2.9"/><rect x="1.5" y="12.4" width="4" height="2.9"/><rect x="7.4" y="3.6" width="4" height="2.9"/><rect x="7.4" y="8" width="4" height="2.9"/><rect x="7.4" y="12.4" width="4" height="2.9"/><rect x="13.3" y="3.6" width="4" height="2.9"/><rect x="13.3" y="8" width="4" height="2.9"/><rect x="13.3" y="12.4" width="4" height="2.9"/></g></svg>
<span class="t" style="left:63.00px;top:135.28px;font-size:14.5px;color:#0f0f0f;">Columns</span>
<svg class="r" style="left:24px;top:139.5px;" width="11" height="11" viewBox="0 0 11 11"><rect x="0.5" y="0.5" width="10" height="10" rx="1" fill="#7a7a7a" stroke="#4d4d4d"/><path d="M2.5 5.5H8.5M5.5 2.5V8.5" stroke="#151e46" stroke-width="1" fill="none"/></svg>
<svg class="r" style="left:38.5px;top:136.5px;" width="17" height="17" viewBox="0 0 20 20"><g fill="#787878" stroke="#1d1d1d" stroke-width="1.6"><rect x="7" y="1" width="11" height="9" rx="2"/><rect x="4" y="4" width="11" height="9" rx="2"/><rect x="1" y="8" width="11" height="10" rx="2"/></g></svg>
<span class="t" style="left:63.00px;top:157.28px;font-size:14.5px;color:#0f0f0f;letter-spacing:-0.167px;">Indexes</span>
<svg class="r" style="left:24px;top:161.5px;" width="11" height="11" viewBox="0 0 11 11"><rect x="0.5" y="0.5" width="10" height="10" rx="1" fill="#7a7a7a" stroke="#4d4d4d"/><path d="M2.5 5.5H8.5M5.5 2.5V8.5" stroke="#151e46" stroke-width="1" fill="none"/></svg>
<svg class="r" style="left:38.65px;top:158.5px;" width="18.7" height="17" viewBox="0 0 22 20"><g fill="#1d1d1d"><rect x="0" y="0" width="10" height="9"/><rect x="0" y="11" width="10" height="9"/></g><g fill="#787878" font-family="Liberation Sans,sans-serif" font-weight="bold" font-size="8.5"><text x="2" y="7.6">A</text><text x="2.2" y="18.6">Z</text></g><path d="M15.5 2V16M11.5 12L15.5 17L19.5 12" stroke="#072d53" stroke-width="2.4" fill="none"/></svg>
<span class="t" style="left:63.00px;top:179.28px;font-size:14.5px;color:#0f0f0f;letter-spacing:0.083px;">Relationships</span>
<svg class="r" style="left:24px;top:183.5px;" width="11" height="11" viewBox="0 0 11 11"><rect x="0.5" y="0.5" width="10" height="10" rx="1" fill="#7a7a7a" stroke="#4d4d4d"/><path d="M2.5 5.5H8.5M5.5 2.5V8.5" stroke="#151e46" stroke-width="1" fill="none"/></svg>
<svg class="r" style="left:38.65px;top:180.5px;" width="18.7" height="17" viewBox="0 0 22 20"><g fill="#787878" stroke="#1d1d1d" stroke-width="1.6"><rect x="7" y="1" width="8" height="6"/><rect x="1" y="13" width="8" height="6"/><rect x="13" y="13" width="8" height="6"/></g><path d="M11 7V10M5 13V10H17V13" stroke="#1d1d1d" stroke-width="1.4" fill="none"/></svg>
<span class="t" style="left:63.00px;top:201.28px;font-size:14.5px;color:#0f0f0f;letter-spacing:0.222px;">Connection</span>
<svg class="r" style="left:24px;top:205.5px;" width="11" height="11" viewBox="0 0 11 11"><rect x="0.5" y="0.5" width="10" height="10" rx="1" fill="#7a7a7a" stroke="#4d4d4d"/><path d="M2.5 5.5H8.5" stroke="#151e46" stroke-width="1" fill="none"/></svg>
<svg class="r" style="left:39.65px;top:202.5px;" width="18.7" height="17" viewBox="0 0 22 20"><path d="M0.5 4C0.5 -0.6 15.5 -0.6 15.5 4V15C15.5 19.8 0.5 19.8 0.5 15Z" fill="#1d1d1d"/><ellipse cx="8" cy="4" rx="5.6" ry="1.6" fill="#454545"/><path d="M14 13H21L18.3 16V20H16.7V16Z" fill="#1d1d1d"/></svg>
<span class="t" style="left:78.00px;top:223.28px;font-size:14.5px;color:#0f0f0f;letter-spacing:-0.333px;">Driver: ODBC_DRV</span>
<svg class="r" style="left:56px;top:225.5px;" width="12" height="15" viewBox="0 0 12 15"><path d="M1 1L11 7.5L1 14Z" fill="none" stroke="#2a2a2a" stroke-width="1.6"/></svg>
<div class="r " style="left:45px;top:233px;width:7px;height:1px;background:#4d4d4d;"></div>
<span class="t" style="left:78.00px;top:245.28px;font-size:14.5px;color:#0f0f0f;letter-spacing:-0.133px;">Id: OrderDBMySQL</span>
<svg class="r" style="left:56px;top:247.5px;" width="12" height="15" viewBox="0 0 12 15"><path d="M1 1L11 7.5L1 14Z" fill="none" stroke="#2a2a2a" stroke-width="1.6"/></svg>
<div class="r " style="left:45px;top:255px;width:7px;height:1px;background:#4d4d4d;"></div>
<span class="t" style="left:78.00px;top:267.28px;font-size:14.5px;color:#0f0f0f;letter-spacing:0.000px">Server: DSN=OrderEntry</span>
<svg class="r" style="left:56px;top:269.5px;" width="12" height="15" viewBox="0 0 12 15"><path d="M1 1L11 7.5L1 14Z" fill="none" stroke="#2a2a2a" stroke-width="1.6"/></svg>
<div class="r " style="left:45px;top:277px;width:7px;height:1px;background:#4d4d4d;"></div>
<span class="t" style="left:78.00px;top:289.28px;font-size:14.5px;color:#0f0f0f;letter-spacing:-0.200px;">Owner:</span>
<svg class="r" style="left:56px;top:291.5px;" width="12" height="15" viewBox="0 0 12 15"><path d="M1 1L11 7.5L1 14Z" fill="none" stroke="#2a2a2a" stroke-width="1.6"/></svg>
<div class="r " style="left:45px;top:299px;width:7px;height:1px;background:#4d4d4d;"></div>
<span class="t" style="left:78.00px;top:311.28px;font-size:14.5px;color:#0f0f0f;letter-spacing:0.235px;">Table: orderheader</span>
<svg class="r" style="left:56px;top:313.5px;" width="12" height="15" viewBox="0 0 12 15"><path d="M1 1L11 7.5L1 14Z" fill="none" stroke="#2a2a2a" stroke-width="1.6"/></svg>
<div class="r " style="left:45px;top:321px;width:7px;height:1px;background:#4d4d4d;"></div>
<span class="t" style="left:78.00px;top:333.28px;font-size:14.5px;color:#0f0f0f;letter-spacing:-0.316px">Root: ODBC_DRV:OrderHeader</span>
<svg class="r" style="left:56px;top:335.5px;" width="12" height="15" viewBox="0 0 12 15"><path d="M1 1L11 7.5L1 14Z" fill="none" stroke="#2a2a2a" stroke-width="1.6"/></svg>
<div class="r " style="left:45px;top:343px;width:7px;height:1px;background:#4d4d4d;"></div>
<span class="t" style="left:63.00px;top:355.28px;font-size:14.5px;color:#0f0f0f;letter-spacing:0.312px;">Data Dictionaries</span>
<svg class="r" style="left:24px;top:359.5px;" width="11" height="11" viewBox="0 0 11 11"><rect x="0.5" y="0.5" width="10" height="10" rx="1" fill="#7a7a7a" stroke="#4d4d4d"/><path d="M2.5 5.5H8.5M5.5 2.5V8.5" stroke="#151e46" stroke-width="1" fill="none"/></svg>
<svg class="r" style="left:38.8px;top:357.35px;" width="20.4" height="15.3" viewBox="0 0 24 18"><path d="M1 2Q7 0 11.5 3V17Q7 14 1 16ZM22 2Q16 0 11.5 3V17Q16 14 22 16Z" fill="#787878" stroke="#1d1d1d" stroke-width="1.6"/></svg>
<span class="t" style="left:48.00px;top:377.28px;font-size:14.5px;color:#0f0f0f;">OrderSystem</span>
<svg class="r" style="left:8px;top:381.5px;" width="11" height="11" viewBox="0 0 11 11"><rect x="0.5" y="0.5" width="10" height="10" rx="1" fill="#7a7a7a" stroke="#4d4d4d"/><path d="M2.5 5.5H8.5" stroke="#151e46" stroke-width="1" fill="none"/></svg>
<svg class="r" style="left:24px;top:378px;" width="19" height="17" viewBox="0 0 19 17"><rect width="19" height="17" fill="#1d1d1d"/><g fill="#787878"><rect x="1.5" y="3.6" width="4" height="2.9"/><rect x="1.5" y="8" width="4" height="2.9"/><rect x="1.5" y="12.4" width="4" height="2.9"/><rect x="7.4" y="3.6" width="4" height="2.9"/><rect x="7.4" y="8" width="4" height="2.9"/><rect x="7.4" y="12.4" width="4" height="2.9"/><rect x="13.3" y="3.6" width="4" height="2.9"/><rect x="13.3" y="8" width="4" height="2.9"/><rect x="13.3" y="12.4" width="4" height="2.9"/></g></svg>
<span class="t" style="left:63.00px;top:399.28px;font-size:14.5px;color:#0f0f0f;">Columns</span>
<svg class="r" style="left:24px;top:403.5px;" width="11" height="11" viewBox="0 0 11 11"><rect x="0.5" y="0.5" width="10" height="10" rx="1" fill="#7a7a7a" stroke="#4d4d4d"/><path d="M2.5 5.5H8.5M5.5 2.5V8.5" stroke="#151e46" stroke-width="1" fill="none"/></svg>
<svg class="r" style="left:38.5px;top:400.5px;" width="17" height="17" viewBox="0 0 20 20"><g fill="#787878" stroke="#1d1d1d" stroke-width="1.6"><rect x="7" y="1" width="11" height="9" rx="2"/><rect x="4" y="4" width="11" height="9" rx="2"/><rect x="1" y="8" width="11" height="10" rx="2"/></g></svg>
<span class="t" style="left:63.00px;top:421.28px;font-size:14.5px;color:#0f0f0f;letter-spacing:-0.167px;">Indexes</span>
<svg class="r" style="left:24px;top:425.5px;" width="11" height="11" viewBox="0 0 11 11"><rect x="0.5" y="0.5" width="10" height="10" rx="1" fill="#7a7a7a" stroke="#4d4d4d"/><path d="M2.5 5.5H8.5M5.5 2.5V8.5" stroke="#151e46" stroke-width="1" fill="none"/></svg>
<svg class="r" style="left:38.65px;top:422.5px;" width="18.7" height="17" viewBox="0 0 22 20"><g fill="#1d1d1d"><rect x="0" y="0" width="10" height="9"/><rect x="0" y="11" width="10" height="9"/></g><g fill="#787878" font-family="Liberation Sans,sans-serif" font-weight="bold" font-size="8.5"><text x="2" y="7.6">A</text><text x="2.2" y="18.6">Z</text></g><path d="M15.5 2V16M11.5 12L15.5 17L19.5 12" stroke="#072d53" stroke-width="2.4" fill="none"/></svg>
<span class="t" style="left:63.00px;top:443.28px;font-size:14.5px;color:#0f0f0f;letter-spacing:0.083px;">Relationships</span>
<svg class="r" style="left:24px;top:447.5px;" width="11" height="11" viewBox="0 0 11 11"><rect x="0.5" y="0.5" width="10" height="10" rx="1" fill="#7a7a7a" stroke="#4d4d4d"/><path d="M2.5 5.5H8.5M5.5 2.5V8.5" stroke="#151e46" stroke-width="1" fill="none"/></svg>
<svg class="r" style="left:38.65px;top:444.5px;" width="18.7" height="17" viewBox="0 0 22 20"><g fill="#787878" stroke="#1d1d1d" stroke-width="1.6"><rect x="7" y="1" width="8" height="6"/><rect x="1" y="13" width="8" height="6"/><rect x="13" y="13" width="8" height="6"/></g><path d="M11 7V10M5 13V10H17V13" stroke="#1d1d1d" stroke-width="1.4" fill="none"/></svg>
<span class="t" style="left:63.00px;top:465.28px;font-size:14.5px;color:#0f0f0f;letter-spacing:0.222px;">Connection</span>
<svg class="r" style="left:24px;top:469.5px;" width="11" height="11" viewBox="0 0 11 11"><rect x="0.5" y="0.5" width="10" height="10" rx="1" fill="#7a7a7a" stroke="#4d4d4d"/><path d="M2.5 5.5H8.5" stroke="#151e46" stroke-width="1" fill="none"/></svg>
<svg class="r" style="left:39.65px;top:466.5px;" width="18.7" height="17" viewBox="0 0 22 20"><path d="M0.5 4C0.5 -0.6 15.5 -0.6 15.5 4V15C15.5 19.8 0.5 19.8 0.5 15Z" fill="#1d1d1d"/><ellipse cx="8" cy="4" rx="5.6" ry="1.6" fill="#454545"/><path d="M14 13H21L18.3 16V20H16.7V16Z" fill="#1d1d1d"/></svg>
<span class="t" style="left:78.00px;top:487.28px;font-size:14.5px;color:#0f0f0f;letter-spacing:-0.333px;">Driver: ODBC_DRV</span>
<svg class="r" style="left:56px;top:489.5px;" width="12" height="15" viewBox="0 0 12 15"><path d="M1 1L11 7.5L1 14Z" fill="none" stroke="#2a2a2a" stroke-width="1.6"/></svg>
<div class="r " style="left:45px;top:497px;width:7px;height:1px;background:#4d4d4d;"></div>
<span class="t" style="left:78.00px;top:509.28px;font-size:14.5px;color:#0f0f0f;letter-spacing:-0.133px;">Id: OrderDBMySQL</span>
<svg class="r" style="left:56px;top:511.5px;" width="12" height="15" viewBox="0 0 12 15"><path d="M1 1L11 7.5L1 14Z" fill="none" stroke="#2a2a2a" stroke-width="1.6"/></svg>
<div class="r " style="left:45px;top:519px;width:7px;height:1px;background:#4d4d4d;"></div>
<span class="t" style="left:78.00px;top:531.28px;font-size:14.5px;color:#0f0f0f;letter-spacing:0.000px">Server: DSN=OrderEntry</span>
<svg class="r" style="left:56px;top:533.5px;" width="12" height="15" viewBox="0 0 12 15"><path d="M1 1L11 7.5L1 14Z" fill="none" stroke="#2a2a2a" stroke-width="1.6"/></svg>
<div class="r " style="left:45px;top:541px;width:7px;height:1px;background:#4d4d4d;"></div>
<span class="t" style="left:78.00px;top:553.28px;font-size:14.5px;color:#0f0f0f;letter-spacing:-0.200px;">Owner:</span>
<svg class="r" style="left:56px;top:555.5px;" width="12" height="15" viewBox="0 0 12 15"><path d="M1 1L11 7.5L1 14Z" fill="none" stroke="#2a2a2a" stroke-width="1.6"/></svg>
<div class="r " style="left:45px;top:563px;width:7px;height:1px;background:#4d4d4d;"></div>
<span class="t" style="left:78.00px;top:575.28px;font-size:14.5px;color:#0f0f0f;letter-spacing:0.176px;">Table: ordersystem</span>
<svg class="r" style="left:56px;top:577.5px;" width="12" height="15" viewBox="0 0 12 15"><path d="M1 1L11 7.5L1 14Z" fill="none" stroke="#2a2a2a" stroke-width="1.6"/></svg>
<div class="r " style="left:45px;top:585px;width:7px;height:1px;background:#4d4d4d;"></div>
<span class="t" style="left:78.00px;top:597.28px;font-size:14.5px;color:#0f0f0f;letter-spacing:-0.316px">Root: ODBC_DRV:OrderSystem</span>
<svg class="r" style="left:56px;top:599.5px;" width="12" height="15" viewBox="0 0 12 15"><path d="M1 1L11 7.5L1 14Z" fill="none" stroke="#2a2a2a" stroke-width="1.6"/></svg>
<div class="r " style="left:45px;top:607px;width:7px;height:1px;background:#4d4d4d;"></div>
</div>
<div class="r " style="left:402px;top:265px;width:17px;height:611px;background:#7a7a7a;"></div>
<div class="r " style="left:402px;top:287px;width:17px;height:449px;background:#646464;"></div>
<svg class="r" style="left:405px;top:271px;" width="11" height="8" viewBox="0 0 11 8"><path d="M1 7L5.5 2L10 7" fill="none" stroke="#2a2a2a" stroke-width="1.8"/></svg>
<svg class="r" style="left:405px;top:858px;" width="11" height="8" viewBox="0 0 11 8"><path d="M1 1L5.5 6L10 1" fill="none" stroke="#2a2a2a" stroke-width="1.8"/></svg>
<div class="r " style="left:168px;top:876px;width:234px;height:17px;background:#7a7a7a;"></div>
<div class="r " style="left:190px;top:876px;width:155px;height:17px;background:#646464;"></div>
<svg class="r" style="left:174px;top:879px;" width="8" height="11" viewBox="0 0 8 11"><path d="M7 0.8L1.8 5.5L7 10.2" fill="none" stroke="#2a2a2a" stroke-width="1.8"/></svg>
<svg class="r" style="left:386px;top:879px;" width="8" height="11" viewBox="0 0 8 11"><path d="M1 0.8L6.2 5.5L1 10.2" fill="none" stroke="#2a2a2a" stroke-width="1.8"/></svg>
<div class="r " style="left:166px;top:894px;width:257px;height:1px;background:#6c6c6c;"></div>
<div class="r " style="left:419px;top:265px;width:1px;height:630px;background:#6c6c6c;"></div>
<div class="r " style="left:168px;top:897px;width:84px;height:27px;background:#7c7c7c;"></div>
<div class="r " style="left:254px;top:899px;width:1px;height:24px;background:#6e6e6e;"></div>
<div class="r " style="left:335px;top:899px;width:1px;height:24px;background:#6e6e6e;"></div>
<div class="r " style="left:414px;top:899px;width:1px;height:24px;background:#6e6e6e;"></div>
<svg class="r" style="left:173px;top:901px;" width="20" height="20" viewBox="0 0 20 20"><g fill="#1d1d1d"><rect x="4" y="0" width="15" height="3"/><rect x="2" y="4" width="15" height="3"/><rect x="0" y="8" width="14" height="11"/></g><g fill="#787878"><rect x="1.5" y="11" width="3" height="2"/><rect x="5.8" y="11" width="3" height="2"/><rect x="1.5" y="14.5" width="3" height="2"/><rect x="5.8" y="14.5" width="3" height="2"/></g><circle cx="13" cy="13" r="3.5" fill="#787878" stroke="#1d1d1d" stroke-width="1.6"/><path d="M15.5 15.5L19 19" stroke="#1d1d1d" stroke-width="2"/></svg>
<span class="t" style="left:197.00px;top:902.28px;font-size:14.5px;color:#0f0f0f;letter-spacing:-0.500px;">Table ...</span>
<svg class="r" style="left:259px;top:901px;" width="18" height="18" viewBox="0 0 18 18"><rect x="0.9" y="0.9" width="16.2" height="16.2" fill="#7c7c7c" stroke="#1d1d1d" stroke-width="1.8"/><rect x="0.9" y="0.9" width="16.2" height="3" fill="#1d1d1d"/><path d="M4 7H9V11H13V15" stroke="#704d18" stroke-width="2.4" fill="none"/></svg>
<span class="t" style="left:282.00px;top:901.28px;font-size:14.5px;color:#0f0f0f;letter-spacing:-0.333px;">Code...</span>
<svg class="r" style="left:341px;top:900px;" width="19" height="19" viewBox="0 0 19 19"><path d="M9.5 1C2 1 0 8 2 13C4 18 11 19 13 16C14.5 13.5 11 12.5 13.5 10.5C16 9 19 10 18.5 6C18 2.5 14 1 9.5 1Z" fill="#1d1d1d"/><g fill="#787878"><circle cx="6" cy="6.5" r="1.6"/><circle cx="11" cy="4.5" r="1.6"/><circle cx="5" cy="11.5" r="1.6"/><circle cx="8.5" cy="15" r="1.6"/></g></svg>
<span class="t" style="left:365.00px;top:901.28px;font-size:14.5px;color:#0f0f0f;letter-spacing:-0.625px;">Class ...</span>
<svg class="r" style="left:176px;top:931px;" width="18" height="17" viewBox="0 0 18 17"><rect x="0.9" y="0.9" width="16.2" height="15.2" fill="#7c7c7c" stroke="#1d1d1d" stroke-width="1.8"/><rect x="0.9" y="0.9" width="16.2" height="3" fill="#1d1d1d"/><path d="M4 13L7 8L9 13Z" fill="#705010"/><path d="M8 9L10 11.5L14 6.5" stroke="#1d1d1d" stroke-width="1.6" fill="none"/></svg>
<span class="t" style="left:198.00px;top:931.08px;font-size:14.5px;color:#0f0f0f;letter-spacing:0.138px;">Problem Resolution [Order.src]</span>
<div class="r " style="left:407px;top:930px;width:1px;height:21px;background:#6e6e6e;"></div>
<svg class="r" style="left:417px;top:929px;" width="15" height="20" viewBox="0 0 15 20"><path d="M1.5 4.5H13.5V18.5H1.5Z" fill="none" stroke="#1d1d1d" stroke-width="1.6"/><path d="M5 4C5 0 10 0 10 4" fill="none" stroke="#1d1d1d" stroke-width="1.6"/><path d="M4.5 11L7 14L11.5 8" stroke="#1d1d1d" stroke-width="1.8" fill="none"/></svg>
<span class="t" style="left:437.00px;top:931.08px;font-size:14.5px;color:#0f0f0f;letter-spacing:0.143px;">To Do List [Order.src]</span>
<div class="r " style="left:581px;top:927px;width:84px;height:25px;background:#7c7c7c;"></div>
<svg class="r" style="left:587px;top:931px;" width="20" height="17" viewBox="0 0 20 17"><path d="M8 1H1V16H8" fill="none" stroke="#1d1d1d" stroke-width="1.8"/><path d="M5 8.5H17M12 3.5L17.5 8.5L12 13.5" stroke="#1d1d1d" stroke-width="2.2" fill="none"/></svg>
<span class="t" style="left:610.00px;top:931.08px;font-size:14.5px;color:#0f0f0f;letter-spacing:0.200px;">Output</span>
<div class="r " style="left:166px;top:952px;width:1611px;height:26px;background:#003d6e;"></div>
<span class="t" style="left:170.00px;top:957.28px;font-size:14.5px;color:#2f80c4;letter-spacing:0.125px;">OrderSystem table</span>
<svg class="r" style="left:1468px;top:957px;" width="18" height="18" viewBox="0 0 18 18"><circle cx="9" cy="9" r="8.5" fill="#797979"/><circle cx="9" cy="9" r="6.2" fill="none" stroke="#70251d" stroke-width="1.4"/><path d="M9 4.2V10.5M9 12V14" stroke="#70251d" stroke-width="2.2"/></svg>
<span class="t" style="left:1650.00px;top:957.28px;font-size:14.5px;color:#2468a8;letter-spacing:-1.333px;">CAPS</span>
<span class="t" style="left:1706.60px;top:957.28px;font-size:14.5px;color:#a8b4c0;letter-spacing:0.600px;">NUM</span><div class="r " style="left:1420px;top:198px;width:1px;height:726px;background:#6c6c6c;"></div>
<div class="r " style="left:1423px;top:198px;width:354px;height:26px;background:#616772;"></div>
<svg class="r" style="left:1738px;top:204px;" width="10" height="14" viewBox="0 0 10 14"><path d="M2.5 0H7.5V7H9.5V9H0.5V7H2.5Z" fill="#080808"/><path d="M5 9V14" stroke="#080808" stroke-width="1.6"/></svg>
<svg class="r" style="left:1760px;top:206px;" width="10" height="10" viewBox="0 0 10 10"><path d="M1 1L9 9M9 1L1 9" stroke="#080808" stroke-width="2"/></svg>
<div class="r " style="left:1425px;top:232px;width:350px;height:31px;background:#737373;border:1px solid #676767;box-sizing:border-box;"></div>
<svg class="r" style="left:1758px;top:243px;" width="12" height="8" viewBox="0 0 12 8"><path d="M1 1L6 6L11 1" fill="none" stroke="#333333" stroke-width="1.5"/></svg>
<div class="r " style="left:1423px;top:268px;width:354px;height:1px;background:#676767;"></div>
<div class="r " style="left:1423px;top:269px;width:354px;height:213px;background:#7f7f7f;"></div>
<div class="r " style="left:1423px;top:482px;width:354px;height:1px;background:#676767;"></div>
<div class="r " style="left:1423px;top:488px;width:354px;height:26px;background:#616772;"></div>
<svg class="r" style="left:1738px;top:494px;" width="10" height="14" viewBox="0 0 10 14"><path d="M2.5 0H7.5V7H9.5V9H0.5V7H2.5Z" fill="#080808"/><path d="M5 9V14" stroke="#080808" stroke-width="1.6"/></svg>
<svg class="r" style="left:1760px;top:496px;" width="10" height="10" viewBox="0 0 10 10"><path d="M1 1L9 9M9 1L1 9" stroke="#080808" stroke-width="2"/></svg>
<div class="r " style="left:1423px;top:514px;width:354px;height:410px;background:#7b7b7b;"></div>
<div class="r " style="left:1427px;top:524px;width:342px;height:31px;background:#7d7d7d;border:1px solid #747474;box-sizing:border-box;"></div>
<div class="r " style="left:1427px;top:566px;width:342px;height:32px;background:#7d7d7d;border:1px solid #747474;box-sizing:border-box;"></div>
<span class="t" style="left:1580.00px;top:573.28px;font-size:14.5px;color:#0f0f0f;letter-spacing:-0.500px;">OrderSystem</span>
<div class="r " style="left:1427px;top:630px;width:342px;height:26px;background:#787878;"></div>
<div class="r " style="left:1427px;top:663px;width:343px;height:176px;background:#7d7d7d;border:1px solid #626a76;box-sizing:border-box;"></div>
<div class="r " style="left:1428px;top:664px;width:324px;height:24px;background:#737373;"></div>
<div class="r " style="left:1428px;top:763px;width:324px;height:26px;background:#6e6e6e;"></div>
<div class="r " style="left:1751px;top:664px;width:18px;height:174px;background:#787878;"></div>
<div class="r " style="left:1751px;top:686px;width:18px;height:29px;background:#626262;"></div>
<svg class="r" style="left:1755px;top:670px;" width="11" height="8" viewBox="0 0 11 8"><path d="M1 7L5.5 2L10 7" fill="none" stroke="#2a2a2a" stroke-width="1.8"/></svg>
<svg class="r" style="left:1755px;top:829px;" width="11" height="8" viewBox="0 0 11 8"><path d="M1 1L5.5 6L10 1" fill="none" stroke="#2a2a2a" stroke-width="1.8"/></svg>
<div class="r" style="left:1428px;top:664px;width:322px;height:174px;overflow:hidden">
<span class="t" style="left:181.37px;top:27.68px;font-size:14.5px;color:#282828;letter-spacing:-1.760px">ODBC_DRV</span>
<span class="t" style="left:179.43px;top:52.98px;font-size:14.5px;color:#282828;letter-spacing:-0.231px">DFCONNID=OrderDBMySQL</span>
<span class="t" style="left:177.53px;top:127.98px;font-size:14.5px;color:#282828;letter-spacing:-0.335px">Order Entry System Table</span>
<span class="t" style="left:179.67px;top:152.98px;font-size:14.5px;color:#282828;letter-spacing:-0.912px">ODBC_DRV:OrderSystem</span>
</div>
<div class="r " style="left:1428px;top:688px;width:323px;height:1px;background:#737373;"></div>
<div class="r " style="left:1428px;top:713px;width:323px;height:1px;background:#737373;"></div>
<div class="r " style="left:1428px;top:738px;width:323px;height:1px;background:#737373;"></div>
<div class="r " style="left:1428px;top:814px;width:323px;height:1px;background:#737373;"></div>
<div class="r " style="left:1423px;top:839px;width:348px;height:81px;background:#7b7b7b;border:1px solid #7f7f7f;box-sizing:border-box;"></div><div class="r " style="left:423px;top:198px;width:997px;height:727px;background:#7e7e7e;"></div>
<div class="r " style="left:423px;top:198px;width:5px;height:727px;background:#707070;"></div>
<div class="r " style="left:428px;top:198px;width:6px;height:640px;background:linear-gradient(to right,#7f7f7f,#6e6e6e);"></div>
<div class="r " style="left:430px;top:201px;width:1.6px;height:24px;background:#172f4f;"></div>
<div class="r " style="left:443px;top:838px;width:464px;height:85px;background:#7f7f7f;"></div>
<div class="r " style="left:1390px;top:838px;width:30px;height:86px;background:#7a7a7a;"></div>
<span class="t" style="left:466.00px;top:824.93px;font-size:15.5px;color:#080808;letter-spacing:-0.588px;">C:\DataFlex 19.1 Examples\Order Entry MySQL Database</span>
<svg class="r" style="left:464px;top:853px;" width="22" height="22" viewBox="0 0 22 22"><circle cx="11" cy="11" r="10" fill="none" stroke="#383838" stroke-width="1.2"/><path d="M11 8V14M9.6 9L11 8" stroke="#383838" stroke-width="1.2" fill="none"/></svg>
<span class="t" style="left:491.00px;top:854.08px;font-size:14.5px;color:#181818;letter-spacing:0.062px;">Library is used by this workspace</span>
<span class="t" style="left:466.00px;top:882.28px;font-size:14.5px;color:#505050;">&gt; Learn more...</span>
<svg class="r" style="left:1393px;top:896px;" width="18" height="11" viewBox="0 0 18 11"><path d="M1.5 1.5L9 9L16.5 1.5" fill="none" stroke="#1d1d1d" stroke-width="2.6"/></svg></div>
<div id="spot"><div id="spotin"><div class="r " style="left:166px;top:51px;width:1611px;height:927px;background:#f0f0f0;"></div>
<div class="r " style="left:166px;top:51px;width:1611px;height:36px;background:#ffffff;"></div>
<svg class="r" style="left:175px;top:59px;" width="21" height="20" viewBox="0 0 21 20"><path d="M2 0H21V14Q19 20 12 20H0V2Q0 0 2 0Z" fill="#e8571f"/><text x="3.2" y="14.5" font-family="Liberation Sans,sans-serif" font-weight="bold" font-size="11.5" letter-spacing="-0.8" fill="#ffffff">DF</text></svg>
<span class="t" style="left:200.00px;top:60.28px;font-size:14.5px;color:#a8a8a8;letter-spacing:0.019px;">Order Entry MySQL Database - DataFlex 2019 Studio 19.1</span>
<svg class="r" style="left:1620px;top:60px;" width="140" height="18" viewBox="0 0 140 18"><g stroke="#b0b0b0" stroke-width="1.2" fill="none"><path d="M3 9.5H15"/><rect x="62.5" y="3.5" width="11" height="11"/><path d="M120.5 3L132.5 15M132.5 3L120.5 15"/></g></svg>
<svg class="r" style="left:179px;top:93px;" width="8" height="24" viewBox="0 0 8 24"><g fill="#bcbcbc"><rect x="0.3" y="0.40" width="1.1" height="1.1"/><rect x="6.3" y="0.40" width="1.1" height="1.1"/><rect x="3.3" y="1.76" width="1.1" height="1.1"/><rect x="0.3" y="3.12" width="1.1" height="1.1"/><rect x="6.3" y="3.12" width="1.1" height="1.1"/><rect x="3.3" y="4.48" width="1.1" height="1.1"/><rect x="0.3" y="5.84" width="1.1" height="1.1"/><rect x="6.3" y="5.84" width="1.1" height="1.1"/><rect x="3.3" y="7.20" width="1.1" height="1.1"/><rect x="0.3" y="8.56" width="1.1" height="1.1"/><rect x="6.3" y="8.56" width="1.1" height="1.1"/><rect x="3.3" y="9.92" width="1.1" height="1.1"/><rect x="0.3" y="11.28" width="1.1" height="1.1"/><rect x="6.3" y="11.28" width="1.1" height="1.1"/><rect x="3.3" y="12.64" width="1.1" height="1.1"/><rect x="0.3" y="14.00" width="1.1" height="1.1"/><rect x="6.3" y="14.00" width="1.1" height="1.1"/><rect x="3.3" y="15.36" width="1.1" height="1.1"/><rect x="0.3" y="16.72" width="1.1" height="1.1"/><rect x="6.3" y="16.72" width="1.1" height="1.1"/><rect x="3.3" y="18.08" width="1.1" height="1.1"/><rect x="0.3" y="19.44" width="1.1" height="1.1"/><rect x="6.3" y="19.44" width="1.1" height="1.1"/><rect x="3.3" y="20.80" width="1.1" height="1.1"/><rect x="0.3" y="22.16" width="1.1" height="1.1"/><rect x="6.3" y="22.16" width="1.1" height="1.1"/></g></svg>
<span class="t" style="left:206.00px;top:96.28px;font-size:14.5px;color:#1e1e1e;letter-spacing:-0.333px;">File</span>
<span class="t" style="left:253.00px;top:96.28px;font-size:14.5px;color:#1e1e1e;">Edit</span>
<span class="t" style="left:303.00px;top:96.28px;font-size:14.5px;color:#1e1e1e;letter-spacing:-0.333px;">Text</span>
<span class="t" style="left:355.00px;top:96.28px;font-size:14.5px;color:#1e1e1e;">View</span>
<span class="t" style="left:410.00px;top:96.28px;font-size:14.5px;color:#1e1e1e;letter-spacing:0.167px;">Project</span>
<span class="t" style="left:481.00px;top:96.28px;font-size:14.5px;color:#1e1e1e;letter-spacing:0.250px;">Debug</span>
<span class="t" style="left:550.00px;top:96.28px;font-size:14.5px;color:#1e1e1e;letter-spacing:0.143px;">Database</span>
<span class="t" style="left:637.00px;top:96.28px;font-size:14.5px;color:#1e1e1e;letter-spacing:0.250px;">Tools</span>
<span class="t" style="left:696.00px;top:96.28px;font-size:14.5px;color:#1e1e1e;letter-spacing:0.800px;">Window</span>
<span class="t" style="left:776.00px;top:96.28px;font-size:14.5px;color:#1e1e1e;letter-spacing:0.667px;">Help</span>
<svg class="r" style="left:179px;top:128px;" width="8" height="28" viewBox="0 0 8 28"><g fill="#bcbcbc"><rect x="0.3" y="0.40" width="1.1" height="1.1"/><rect x="6.3" y="0.40" width="1.1" height="1.1"/><rect x="3.3" y="1.76" width="1.1" height="1.1"/><rect x="0.3" y="3.12" width="1.1" height="1.1"/><rect x="6.3" y="3.12" width="1.1" height="1.1"/><rect x="3.3" y="4.48" width="1.1" height="1.1"/><rect x="0.3" y="5.84" width="1.1" height="1.1"/><rect x="6.3" y="5.84" width="1.1" height="1.1"/><rect x="3.3" y="7.20" width="1.1" height="1.1"/><rect x="0.3" y="8.56" width="1.1" height="1.1"/><rect x="6.3" y="8.56" width="1.1" height="1.1"/><rect x="3.3" y="9.92" width="1.1" height="1.1"/><rect x="0.3" y="11.28" width="1.1" height="1.1"/><rect x="6.3" y="11.28" width="1.1" height="1.1"/><rect x="3.3" y="12.64" width="1.1" height="1.1"/><rect x="0.3" y="14.00" width="1.1" height="1.1"/><rect x="6.3" y="14.00" width="1.1" height="1.1"/><rect x="3.3" y="15.36" width="1.1" height="1.1"/><rect x="0.3" y="16.72" width="1.1" height="1.1"/><rect x="6.3" y="16.72" width="1.1" height="1.1"/><rect x="3.3" y="18.08" width="1.1" height="1.1"/><rect x="0.3" y="19.44" width="1.1" height="1.1"/><rect x="6.3" y="19.44" width="1.1" height="1.1"/><rect x="3.3" y="20.80" width="1.1" height="1.1"/><rect x="0.3" y="22.16" width="1.1" height="1.1"/><rect x="6.3" y="22.16" width="1.1" height="1.1"/><rect x="3.3" y="23.52" width="1.1" height="1.1"/><rect x="0.3" y="24.88" width="1.1" height="1.1"/><rect x="6.3" y="24.88" width="1.1" height="1.1"/><rect x="3.3" y="26.24" width="1.1" height="1.1"/></g></svg>
<svg class="r" style="left:202px;top:130px;" width="22" height="24" viewBox="0 0 22 24"><path d="M4 7H13L18 12V22H4Z" fill="#ffffff" stroke="#3b3b3b" stroke-width="1.6"/><circle cx="4" cy="5" r="3.2" fill="#f0a030"/></svg>
<svg class="r" style="left:232px;top:130px;" width="23" height="24" viewBox="0 0 23 24"><path d="M3 10H20V22H3Z" fill="#eec27c"/><path d="M5 6C7 1 13 1 15 4" stroke="#0e5aa7" stroke-width="2.4" fill="none"/><path d="M13 0L18 4L12 7Z" fill="#0e5aa7"/></svg>
<div class="r " style="left:262px;top:127px;width:1px;height:29px;background:#c9c9c9;"></div>
<svg class="r" style="left:273px;top:133px;" width="19" height="18" viewBox="0 0 19 18"><path d="M0 0H19V18H0Z" fill="#4a4a4a"/><rect x="5.5" y="0" width="8" height="6" fill="#f0f0f0"/><rect x="9.5" y="1" width="2.5" height="4" fill="#4a4a4a"/></svg>
<svg class="r" style="left:303px;top:131px;" width="23" height="21" viewBox="0 0 23 21"><path d="M10 0H23V11H10Z" fill="#0e5aa7"/><path d="M0 8H14V21H0Z" fill="#0e5aa7"/><rect x="14" y="0" width="5" height="3.5" fill="#f0f0f0"/><rect x="4" y="8" width="5.5" height="4" fill="#f0f0f0"/></svg>
<div class="r " style="left:334px;top:127px;width:1px;height:29px;background:#c9c9c9;"></div>
<svg class="r" style="left:345px;top:130px;" width="20" height="22" viewBox="0 0 20 22"><g fill="none" stroke="#555555" stroke-width="1.8"><circle cx="4" cy="17.5" r="3"/><circle cx="15" cy="17.5" r="3"/><path d="M3 0.5L13.5 15M16 0.5L5.5 15"/></g></svg>
<svg class="r" style="left:376px;top:130px;" width="19" height="21" viewBox="0 0 19 21"><g fill="none" stroke="#555555" stroke-width="1.8"><path d="M6 5V1H13L17.5 5.5V15H13"/><path d="M1 6H8L12.5 10.5V20H1Z"/></g></svg>
<svg class="r" style="left:407px;top:130px;" width="18" height="21" viewBox="0 0 18 21"><g fill="none" stroke="#555555" stroke-width="1.8"><path d="M5.5 5.5C5.5 -0.5 12.5 -0.5 12.5 5.5"/><path d="M3 6H16.5V20H11"/><path d="M1 11H9V20H1Z"/></g></svg>
<svg class="r" style="left:440px;top:131px;" width="18" height="18" viewBox="0 0 18 18"><path d="M1 1L17 17M17 1L1 17" stroke="#555555" stroke-width="2.6"/></svg>
<svg class="r" style="left:480px;top:131px;" width="18" height="20" viewBox="0 0 18 20"><path d="M0.5 0.5L0.8 9.2L9 8Z" fill="#555555"/><path d="M3.5 7C8 -1 18.5 2.5 17 10" fill="none" stroke="#555555" stroke-width="2.8"/></svg>
<svg class="r" style="left:515px;top:131px;" width="18" height="20" viewBox="0 0 18 20"><g transform="translate(18,0) scale(-1,1)"><path d="M0.5 0.5L0.8 9.2L9 8Z" fill="#555555"/><path d="M3.5 7C8 -1 18.5 2.5 17 10" fill="none" stroke="#555555" stroke-width="2.8"/></g></svg>
<svg class="r" style="left:555px;top:134px;" width="17" height="17" viewBox="0 0 17 17"><circle cx="8.5" cy="8.5" r="7.5" fill="none" stroke="#777777" stroke-width="1.6"/><circle cx="8.5" cy="6" r="3.6" fill="#0e5aa7"/></svg>
<svg class="r" style="left:593px;top:133px;" width="20" height="18" viewBox="0 0 20 18"><rect x="1" y="1" width="18" height="16" fill="none" stroke="#777777" stroke-width="1.6"/></svg>
<svg class="r" style="left:633px;top:128px;" width="8" height="28" viewBox="0 0 8 28"><g fill="#bcbcbc"><rect x="0.3" y="0.40" width="1.1" height="1.1"/><rect x="6.3" y="0.40" width="1.1" height="1.1"/><rect x="3.3" y="1.76" width="1.1" height="1.1"/><rect x="0.3" y="3.12" width="1.1" height="1.1"/><rect x="6.3" y="3.12" width="1.1" height="1.1"/><rect x="3.3" y="4.48" width="1.1" height="1.1"/><rect x="0.3" y="5.84" width="1.1" height="1.1"/><rect x="6.3" y="5.84" width="1.1" height="1.1"/><rect x="3.3" y="7.20" width="1.1" height="1.1"/><rect x="0.3" y="8.56" width="1.1" height="1.1"/><rect x="6.3" y="8.56" width="1.1" height="1.1"/><rect x="3.3" y="9.92" width="1.1" height="1.1"/><rect x="0.3" y="11.28" width="1.1" height="1.1"/><rect x="6.3" y="11.28" width="1.1" height="1.1"/><rect x="3.3" y="12.64" width="1.1" height="1.1"/><rect x="0.3" y="14.00" width="1.1" height="1.1"/><rect x="6.3" y="14.00" width="1.1" height="1.1"/><rect x="3.3" y="15.36" width="1.1" height="1.1"/><rect x="0.3" y="16.72" width="1.1" height="1.1"/><rect x="6.3" y="16.72" width="1.1" height="1.1"/><rect x="3.3" y="18.08" width="1.1" height="1.1"/><rect x="0.3" y="19.44" width="1.1" height="1.1"/><rect x="6.3" y="19.44" width="1.1" height="1.1"/><rect x="3.3" y="20.80" width="1.1" height="1.1"/><rect x="0.3" y="22.16" width="1.1" height="1.1"/><rect x="6.3" y="22.16" width="1.1" height="1.1"/><rect x="3.3" y="23.52" width="1.1" height="1.1"/><rect x="0.3" y="24.88" width="1.1" height="1.1"/><rect x="6.3" y="24.88" width="1.1" height="1.1"/><rect x="3.3" y="26.24" width="1.1" height="1.1"/></g></svg>
<svg class="r" style="left:652px;top:128px;" width="21" height="24" viewBox="0 0 21 24"><rect x="5" y="1" width="15" height="12" fill="none" stroke="#777777" stroke-width="1.6"/><rect x="1" y="7" width="14" height="14" fill="#f4f4f4" stroke="#777777" stroke-width="1.4"/><rect x="1" y="7" width="14" height="3" fill="#0e5aa7"/></svg>
<svg class="r" style="left:695px;top:131px;" width="20" height="21" viewBox="0 0 20 21"><rect x="1" y="1" width="18" height="19" fill="#f4f4f4" stroke="#444444" stroke-width="1.8"/><rect x="1" y="1" width="18" height="3" fill="#444444"/><rect x="4" y="6" width="12" height="10" fill="#e2571e"/></svg>
<svg class="r" style="left:728px;top:131px;" width="20" height="21" viewBox="0 0 20 21"><rect x="1" y="1" width="18" height="19" fill="#f4f4f4" stroke="#444444" stroke-width="1.8"/><rect x="1" y="1" width="18" height="3" fill="#444444"/><rect x="4" y="6" width="12" height="10" fill="#e0a030"/></svg>
<svg class="r" style="left:764px;top:131px;" width="19" height="21" viewBox="0 0 19 21"><path d="M0.5 4C0.5 -0.6 18.5 -0.6 18.5 4V17C18.5 21.6 0.5 21.6 0.5 17Z" fill="#444444"/><ellipse cx="9.5" cy="4" rx="7" ry="2" fill="#9a9a9a"/></svg>
<svg class="r" style="left:797px;top:131px;" width="17" height="21" viewBox="0 0 17 21"><rect x="1" y="1" width="15" height="19" fill="#f4f4f4" stroke="#444444" stroke-width="1.8"/><rect x="1" y="1" width="15" height="3" fill="#444444"/></svg>
<svg class="r" style="left:827px;top:131px;" width="20" height="20" viewBox="0 0 20 20"><path d="M10 0.5C2 0.5 -1 8 2 13.5C5 19 13 20 14 16C15 13 11.5 12.5 14 10C17 8.5 20 10 19.5 6C19 2.5 15 0.5 10 0.5Z" fill="#444444"/></svg>
<svg class="r" style="left:861px;top:130px;" width="22" height="22" viewBox="0 0 22 22"><g fill="#444444"><rect x="6" y="0" width="16" height="3"/><rect x="3" y="4.5" width="16" height="3"/><rect x="0" y="9" width="16" height="12"/></g></svg>
<svg class="r" style="left:906px;top:132px;" width="18" height="21" viewBox="0 0 18 21"><path d="M1 1H11L17 7V20H1Z" fill="#f8f8f8" stroke="#9a9a9a" stroke-width="1.5"/></svg>
<svg class="r" style="left:945px;top:128px;" width="8" height="28" viewBox="0 0 8 28"><g fill="#bcbcbc"><rect x="0.3" y="0.40" width="1.1" height="1.1"/><rect x="6.3" y="0.40" width="1.1" height="1.1"/><rect x="3.3" y="1.76" width="1.1" height="1.1"/><rect x="0.3" y="3.12" width="1.1" height="1.1"/><rect x="6.3" y="3.12" width="1.1" height="1.1"/><rect x="3.3" y="4.48" width="1.1" height="1.1"/><rect x="0.3" y="5.84" width="1.1" height="1.1"/><rect x="6.3" y="5.84" width="1.1" height="1.1"/><rect x="3.3" y="7.20" width="1.1" height="1.1"/><rect x="0.3" y="8.56" width="1.1" height="1.1"/><rect x="6.3" y="8.56" width="1.1" height="1.1"/><rect x="3.3" y="9.92" width="1.1" height="1.1"/><rect x="0.3" y="11.28" width="1.1" height="1.1"/><rect x="6.3" y="11.28" width="1.1" height="1.1"/><rect x="3.3" y="12.64" width="1.1" height="1.1"/><rect x="0.3" y="14.00" width="1.1" height="1.1"/><rect x="6.3" y="14.00" width="1.1" height="1.1"/><rect x="3.3" y="15.36" width="1.1" height="1.1"/><rect x="0.3" y="16.72" width="1.1" height="1.1"/><rect x="6.3" y="16.72" width="1.1" height="1.1"/><rect x="3.3" y="18.08" width="1.1" height="1.1"/><rect x="0.3" y="19.44" width="1.1" height="1.1"/><rect x="6.3" y="19.44" width="1.1" height="1.1"/><rect x="3.3" y="20.80" width="1.1" height="1.1"/><rect x="0.3" y="22.16" width="1.1" height="1.1"/><rect x="6.3" y="22.16" width="1.1" height="1.1"/><rect x="3.3" y="23.52" width="1.1" height="1.1"/><rect x="0.3" y="24.88" width="1.1" height="1.1"/><rect x="6.3" y="24.88" width="1.1" height="1.1"/><rect x="3.3" y="26.24" width="1.1" height="1.1"/></g></svg>
<svg class="r" style="left:969px;top:133px;" width="22" height="18" viewBox="0 0 22 18"><path d="M1 10L11 1L21 10" fill="none" stroke="#777777" stroke-width="1.6"/><rect x="4" y="10" width="14" height="8" fill="none" stroke="#777777" stroke-width="1.4"/></svg>
<svg class="r" style="left:1000px;top:130px;" width="23" height="22" viewBox="0 0 23 22"><path d="M2 2L9 4L8 7L14 11L17 7L22 9L19 2L12 3L8 0ZM3 12L10 9L13 13L5 21L1 17Z" fill="#444444"/></svg>
<svg class="r" style="left:1041px;top:131px;" width="22" height="21" viewBox="0 0 22 21"><rect x="1" y="1" width="20" height="19" fill="#f4f4f4" stroke="#444444" stroke-width="1.8"/><rect x="1" y="1" width="20" height="4" fill="#444444"/></svg>
<svg class="r" style="left:1074px;top:131px;" width="19" height="20" viewBox="0 0 19 20"><path d="M9.5 0L19 12H0Z" fill="#444444"/><rect x="7" y="12" width="5" height="8" fill="#444444"/></svg>
<svg class="r" style="left:1104px;top:131px;" width="22" height="21" viewBox="0 0 22 21"><rect x="1" y="1" width="20" height="19" fill="#f4f4f4" stroke="#777777" stroke-width="1.8"/><rect x="1" y="1" width="20" height="3" fill="#777777"/></svg>
<svg class="r" style="left:1140px;top:132px;" width="18" height="21" viewBox="0 0 18 21"><path d="M1 1H11L17 7V20H1Z" fill="#f8f8f8" stroke="#9a9a9a" stroke-width="1.5"/></svg>
<svg class="r" style="left:1189px;top:131px;" width="18" height="21" viewBox="0 0 18 21"><rect x="1" y="1" width="16" height="19" fill="#f4f4f4" stroke="#777777" stroke-width="1.8"/><rect x="1" y="1" width="16" height="3" fill="#777777"/></svg>
<svg class="r" style="left:1229px;top:132px;" width="20" height="20" viewBox="0 0 20 20"><path d="M7 1H1V19H7M13 1H19V10" fill="none" stroke="#777777" stroke-width="1.8"/><rect x="9" y="5" width="9" height="9" fill="#444444"/></svg>
<svg class="r" style="left:1262px;top:132px;" width="20" height="20" viewBox="0 0 20 20"><path d="M7 1H1V19H7M13 1H19V10" fill="none" stroke="#777777" stroke-width="1.8"/><rect x="9" y="5" width="9" height="9" fill="#444444"/></svg>
<svg class="r" style="left:1294px;top:131px;" width="20" height="20" viewBox="0 0 20 20"><rect x="4" y="0" width="12" height="9" fill="#444444"/><path d="M1 5V19H19V12" fill="none" stroke="#777777" stroke-width="1.8"/></svg>
<svg class="r" style="left:1327px;top:131px;" width="20" height="20" viewBox="0 0 20 20"><rect x="4" y="0" width="12" height="9" fill="#444444"/><path d="M1 5V19H19V12" fill="none" stroke="#777777" stroke-width="1.8"/></svg>
<svg class="r" style="left:1364px;top:131px;" width="22" height="20" viewBox="0 0 22 20"><path d="M2 2L9 3L20 1L15 7L20 12L10 9L3 14L6 8Z" fill="#666666"/></svg>
<svg class="r" style="left:1408px;top:128px;" width="8" height="28" viewBox="0 0 8 28"><g fill="#bcbcbc"><rect x="0.3" y="0.40" width="1.1" height="1.1"/><rect x="6.3" y="0.40" width="1.1" height="1.1"/><rect x="3.3" y="1.76" width="1.1" height="1.1"/><rect x="0.3" y="3.12" width="1.1" height="1.1"/><rect x="6.3" y="3.12" width="1.1" height="1.1"/><rect x="3.3" y="4.48" width="1.1" height="1.1"/><rect x="0.3" y="5.84" width="1.1" height="1.1"/><rect x="6.3" y="5.84" width="1.1" height="1.1"/><rect x="3.3" y="7.20" width="1.1" height="1.1"/><rect x="0.3" y="8.56" width="1.1" height="1.1"/><rect x="6.3" y="8.56" width="1.1" height="1.1"/><rect x="3.3" y="9.92" width="1.1" height="1.1"/><rect x="0.3" y="11.28" width="1.1" height="1.1"/><rect x="6.3" y="11.28" width="1.1" height="1.1"/><rect x="3.3" y="12.64" width="1.1" height="1.1"/><rect x="0.3" y="14.00" width="1.1" height="1.1"/><rect x="6.3" y="14.00" width="1.1" height="1.1"/><rect x="3.3" y="15.36" width="1.1" height="1.1"/><rect x="0.3" y="16.72" width="1.1" height="1.1"/><rect x="6.3" y="16.72" width="1.1" height="1.1"/><rect x="3.3" y="18.08" width="1.1" height="1.1"/><rect x="0.3" y="19.44" width="1.1" height="1.1"/><rect x="6.3" y="19.44" width="1.1" height="1.1"/><rect x="3.3" y="20.80" width="1.1" height="1.1"/><rect x="0.3" y="22.16" width="1.1" height="1.1"/><rect x="6.3" y="22.16" width="1.1" height="1.1"/><rect x="3.3" y="23.52" width="1.1" height="1.1"/><rect x="0.3" y="24.88" width="1.1" height="1.1"/><rect x="6.3" y="24.88" width="1.1" height="1.1"/><rect x="3.3" y="26.24" width="1.1" height="1.1"/></g></svg>
<svg class="r" style="left:1431px;top:132px;" width="20" height="20" viewBox="0 0 20 20"><circle cx="11" cy="8" r="7" fill="none" stroke="#777777" stroke-width="1.6"/><path d="M6 13L1 19" stroke="#777777" stroke-width="2.6"/></svg>
<svg class="r" style="left:1462px;top:132px;" width="20" height="18" viewBox="0 0 20 18"><path d="M1 3L6 1L7 6" fill="none" stroke="#555555" stroke-width="1.8"/><circle cx="12" cy="10" r="6.5" fill="none" stroke="#777777" stroke-width="1.6"/></svg>
<svg class="r" style="left:1495px;top:132px;" width="20" height="18" viewBox="0 0 20 18"><path d="M1 3L6 1L7 6" fill="none" stroke="#555555" stroke-width="1.8"/><circle cx="12" cy="10" r="6.5" fill="none" stroke="#777777" stroke-width="1.6"/></svg>
<svg class="r" style="left:1526px;top:131px;" width="21" height="21" viewBox="0 0 21 21"><circle cx="10.5" cy="10.5" r="8.5" fill="none" stroke="#555555" stroke-width="1.8"/><circle cx="10.5" cy="10.5" r="3" fill="#777777"/></svg>
<svg class="r" style="left:1566px;top:128px;" width="22" height="22" viewBox="0 0 22 22"><text x="4" y="9" font-family="Liberation Sans,sans-serif" font-size="11" font-weight="bold" fill="#333333">ab</text><rect x="1" y="12" width="14" height="9" fill="#777777"/></svg>
<div class="r " style="left:470px;top:127px;width:1px;height:29px;background:#c9c9c9;"></div>
<div class="r " style="left:542px;top:127px;width:1px;height:29px;background:#c9c9c9;"></div>
<div class="r " style="left:582px;top:127px;width:1px;height:29px;background:#c9c9c9;"></div>
<div class="r " style="left:684px;top:127px;width:1px;height:29px;background:#c9c9c9;"></div>
<div class="r " style="left:888px;top:127px;width:1px;height:29px;background:#c9c9c9;"></div>
<div class="r " style="left:1030px;top:127px;width:1px;height:29px;background:#c9c9c9;"></div>
<div class="r " style="left:1170px;top:127px;width:1px;height:29px;background:#c9c9c9;"></div>
<div class="r " style="left:1355px;top:127px;width:1px;height:29px;background:#c9c9c9;"></div>
<div class="r " style="left:1398px;top:127px;width:1px;height:29px;background:#c9c9c9;"></div>
<svg class="r" style="left:1598px;top:130px;" width="22" height="22" viewBox="0 0 22 22"><path d="M2 6H20V20H2Z" fill="#eec27c"/><path d="M8 0V8M5 5L8 8L11 5" stroke="#0e5aa7" stroke-width="2.4" fill="none"/></svg>
<svg class="r" style="left:1636px;top:128px;" width="8" height="28" viewBox="0 0 8 28"><g fill="#bcbcbc"><rect x="0.3" y="0.40" width="1.1" height="1.1"/><rect x="6.3" y="0.40" width="1.1" height="1.1"/><rect x="3.3" y="1.76" width="1.1" height="1.1"/><rect x="0.3" y="3.12" width="1.1" height="1.1"/><rect x="6.3" y="3.12" width="1.1" height="1.1"/><rect x="3.3" y="4.48" width="1.1" height="1.1"/><rect x="0.3" y="5.84" width="1.1" height="1.1"/><rect x="6.3" y="5.84" width="1.1" height="1.1"/><rect x="3.3" y="7.20" width="1.1" height="1.1"/><rect x="0.3" y="8.56" width="1.1" height="1.1"/><rect x="6.3" y="8.56" width="1.1" height="1.1"/><rect x="3.3" y="9.92" width="1.1" height="1.1"/><rect x="0.3" y="11.28" width="1.1" height="1.1"/><rect x="6.3" y="11.28" width="1.1" height="1.1"/><rect x="3.3" y="12.64" width="1.1" height="1.1"/><rect x="0.3" y="14.00" width="1.1" height="1.1"/><rect x="6.3" y="14.00" width="1.1" height="1.1"/><rect x="3.3" y="15.36" width="1.1" height="1.1"/><rect x="0.3" y="16.72" width="1.1" height="1.1"/><rect x="6.3" y="16.72" width="1.1" height="1.1"/><rect x="3.3" y="18.08" width="1.1" height="1.1"/><rect x="0.3" y="19.44" width="1.1" height="1.1"/><rect x="6.3" y="19.44" width="1.1" height="1.1"/><rect x="3.3" y="20.80" width="1.1" height="1.1"/><rect x="0.3" y="22.16" width="1.1" height="1.1"/><rect x="6.3" y="22.16" width="1.1" height="1.1"/><rect x="3.3" y="23.52" width="1.1" height="1.1"/><rect x="0.3" y="24.88" width="1.1" height="1.1"/><rect x="6.3" y="24.88" width="1.1" height="1.1"/><rect x="3.3" y="26.24" width="1.1" height="1.1"/></g></svg>
<svg class="r" style="left:1656px;top:129px;" width="25" height="25" viewBox="0 0 25 25"><circle cx="12.5" cy="12.5" r="12" fill="#1d64b4"/><text x="6.5" y="19" font-family="Liberation Sans,sans-serif" font-weight="bold" font-size="18" fill="#ffffff">?</text></svg>
<svg class="r" style="left:1690px;top:130px;" width="23" height="23" viewBox="0 0 23 23"><g fill="none" stroke="#555555"><circle cx="11.5" cy="11.5" r="9.5" stroke-width="3" stroke-dasharray="44 16"/><circle cx="11.5" cy="11.5" r="4.6" stroke-width="2.4" stroke-dasharray="20 9"/></g></svg>
<svg class="r" style="left:1722px;top:130px;" width="22" height="22" viewBox="0 0 22 22"><rect x="1" y="1" width="20" height="20" fill="#f0f0f0" stroke="#555555" stroke-width="1.8"/><path d="M6 5V17M11 5V17M16 5V17M6 11H16" stroke="#555555" stroke-width="2" stroke-dasharray="3 2"/><rect x="1" y="1" width="4" height="4" fill="#e2571e"/></svg>
<svg class="r" style="left:179px;top:165px;" width="8" height="28" viewBox="0 0 8 28"><g fill="#bcbcbc"><rect x="0.3" y="0.40" width="1.1" height="1.1"/><rect x="6.3" y="0.40" width="1.1" height="1.1"/><rect x="3.3" y="1.76" width="1.1" height="1.1"/><rect x="0.3" y="3.12" width="1.1" height="1.1"/><rect x="6.3" y="3.12" width="1.1" height="1.1"/><rect x="3.3" y="4.48" width="1.1" height="1.1"/><rect x="0.3" y="5.84" width="1.1" height="1.1"/><rect x="6.3" y="5.84" width="1.1" height="1.1"/><rect x="3.3" y="7.20" width="1.1" height="1.1"/><rect x="0.3" y="8.56" width="1.1" height="1.1"/><rect x="6.3" y="8.56" width="1.1" height="1.1"/><rect x="3.3" y="9.92" width="1.1" height="1.1"/><rect x="0.3" y="11.28" width="1.1" height="1.1"/><rect x="6.3" y="11.28" width="1.1" height="1.1"/><rect x="3.3" y="12.64" width="1.1" height="1.1"/><rect x="0.3" y="14.00" width="1.1" height="1.1"/><rect x="6.3" y="14.00" width="1.1" height="1.1"/><rect x="3.3" y="15.36" width="1.1" height="1.1"/><rect x="0.3" y="16.72" width="1.1" height="1.1"/><rect x="6.3" y="16.72" width="1.1" height="1.1"/><rect x="3.3" y="18.08" width="1.1" height="1.1"/><rect x="0.3" y="19.44" width="1.1" height="1.1"/><rect x="6.3" y="19.44" width="1.1" height="1.1"/><rect x="3.3" y="20.80" width="1.1" height="1.1"/><rect x="0.3" y="22.16" width="1.1" height="1.1"/><rect x="6.3" y="22.16" width="1.1" height="1.1"/><rect x="3.3" y="23.52" width="1.1" height="1.1"/><rect x="0.3" y="24.88" width="1.1" height="1.1"/><rect x="6.3" y="24.88" width="1.1" height="1.1"/><rect x="3.3" y="26.24" width="1.1" height="1.1"/></g></svg>
<span class="t" style="left:198.00px;top:170.28px;font-size:14.5px;color:#1e1e1e;">Order.src</span>
<svg class="r" style="left:265px;top:178px;" width="7" height="4" viewBox="0 0 7 4"><path fill="#555555" d="M0 0H7L3.5 3.6Z"/></svg>
<div class="r " style="left:280px;top:165px;width:1px;height:29px;background:#c9c9c9;"></div>
<svg class="r" style="left:290px;top:167px;" width="23" height="23" viewBox="0 0 23 23"><path d="M1 11V22H22V11" fill="none" stroke="#3b3b3b" stroke-width="1.8"/><path d="M11.5 0V11M6.5 6.5L11.5 11.5L16.5 6.5" stroke="#3b3b3b" stroke-width="2" fill="none"/><path d="M5 17H7M10.5 17H12.5M16 17H18M7.5 13.5H9.5M13.5 13.5H15.5" stroke="#3b3b3b" stroke-width="2"/></svg>
<svg class="r" style="left:323px;top:168px;" width="22" height="22" viewBox="0 0 22 22"><circle cx="11" cy="11" r="10.5" fill="#1e8c1e"/><path d="M7.5 5L17 11L7.5 17Z" fill="#ffffff"/></svg>
<svg class="r" style="left:354px;top:168px;" width="22" height="22" viewBox="0 0 22 22"><circle cx="11" cy="11" r="9.3" fill="none" stroke="#555555" stroke-width="2.6"/><path d="M8 6V16M14 6V16" stroke="#555555" stroke-width="3"/></svg>
<svg class="r" style="left:388px;top:170px;" width="19" height="18" viewBox="0 0 19 18"><rect x="0" y="0" width="2.6" height="18" fill="#7a7a7a"/><path d="M6 1L18 9L6 17Z" fill="#7a7a7a"/></svg><div class="r " style="left:166px;top:198px;width:257px;height:26px;background:#c2cfe4;"></div>
<span class="t" style="left:172.00px;top:202.98px;font-size:14.5px;color:#1e1e1e;letter-spacing:-0.077px;">Table Explorer</span>
<svg class="r" style="left:384px;top:204px;" width="10" height="14" viewBox="0 0 10 14"><path d="M2.5 0H7.5V7H9.5V9H0.5V7H2.5Z" fill="#111111"/><path d="M5 9V14" stroke="#111111" stroke-width="1.6"/></svg>
<svg class="r" style="left:405px;top:206px;" width="10" height="10" viewBox="0 0 10 10"><path d="M1 1L9 9M9 1L1 9" stroke="#111111" stroke-width="2"/></svg>
<svg class="r" style="left:177px;top:236px;" width="18" height="15" viewBox="0 0 18 15"><rect width="18" height="15" fill="#3b3b3b"/><g fill="#f0f0f0"><rect x="1.3" y="3" width="3.9" height="2.4"/><rect x="1.3" y="6.9" width="3.9" height="2.4"/><rect x="1.3" y="10.8" width="3.9" height="2.4"/><rect x="6.9" y="3" width="3.9" height="2.4"/><rect x="6.9" y="6.9" width="3.9" height="2.4"/><rect x="6.9" y="10.8" width="3.9" height="2.4"/><rect x="12.5" y="3" width="3.9" height="2.4"/><rect x="12.5" y="6.9" width="3.9" height="2.4"/><rect x="12.5" y="10.8" width="3.9" height="2.4"/></g></svg>
<svg class="r" style="left:208px;top:236px;" width="18" height="15" viewBox="0 0 18 15"><rect width="18" height="15" fill="#3b3b3b"/><g fill="#f0f0f0"><rect x="1.3" y="3" width="3.9" height="2.4"/><rect x="1.3" y="6.9" width="3.9" height="2.4"/><rect x="1.3" y="10.8" width="3.9" height="2.4"/><rect x="6.9" y="3" width="3.9" height="2.4"/><rect x="6.9" y="6.9" width="3.9" height="2.4"/><rect x="6.9" y="10.8" width="3.9" height="2.4"/><rect x="12.5" y="3" width="3.9" height="2.4"/><rect x="12.5" y="6.9" width="3.9" height="2.4"/><rect x="12.5" y="10.8" width="3.9" height="2.4"/></g></svg>
<svg class="r" style="left:240px;top:236px;" width="18" height="15" viewBox="0 0 18 15"><rect width="18" height="15" fill="#3b3b3b"/><g fill="#f0f0f0"><rect x="1.3" y="3" width="3.9" height="2.4"/><rect x="1.3" y="6.9" width="3.9" height="2.4"/><rect x="1.3" y="10.8" width="3.9" height="2.4"/><rect x="6.9" y="3" width="3.9" height="2.4"/><rect x="6.9" y="6.9" width="3.9" height="2.4"/><rect x="6.9" y="10.8" width="3.9" height="2.4"/><rect x="12.5" y="3" width="3.9" height="2.4"/><rect x="12.5" y="6.9" width="3.9" height="2.4"/><rect x="12.5" y="10.8" width="3.9" height="2.4"/></g></svg>
<svg class="r" style="left:279px;top:236px;" width="18" height="15" viewBox="0 0 18 15"><rect width="18" height="15" fill="#3b3b3b"/><g fill="#f0f0f0"><rect x="1.3" y="3" width="3.9" height="2.4"/><rect x="1.3" y="6.9" width="3.9" height="2.4"/><rect x="1.3" y="10.8" width="3.9" height="2.4"/><rect x="6.9" y="3" width="3.9" height="2.4"/><rect x="6.9" y="6.9" width="3.9" height="2.4"/><rect x="6.9" y="10.8" width="3.9" height="2.4"/><rect x="12.5" y="3" width="3.9" height="2.4"/><rect x="12.5" y="6.9" width="3.9" height="2.4"/><rect x="12.5" y="10.8" width="3.9" height="2.4"/></g></svg>
<svg class="r" style="left:174px;top:232px;" width="8" height="8" viewBox="0 0 8 8"><circle cx="4" cy="4" r="3.4" fill="#f0a030"/></svg>
<svg class="r" style="left:218px;top:230px;" width="12" height="12" viewBox="0 0 12 12"><path d="M0 12L2 7L9 0L12 3L5 10Z" fill="#0e5aa7"/></svg>
<svg class="r" style="left:236px;top:240px;" width="14" height="14" viewBox="0 0 14 14"><circle cx="5.5" cy="5.5" r="4.5" fill="#f0f0f0" stroke="#3b3b3b" stroke-width="1.8"/><path d="M9 9L13.5 13.5" stroke="#3b3b3b" stroke-width="2.4"/></svg>
<div class="r " style="left:268px;top:229px;width:1px;height:29px;background:#c9c9c9;"></div>
<svg class="r" style="left:286px;top:240px;" width="14" height="14" viewBox="0 0 14 14"><circle cx="7" cy="7" r="6" fill="#0e5aa7"/><path d="M3.5 7A3.5 3.5 0 0 1 10 5M10.5 7A3.5 3.5 0 0 1 4 9" stroke="#ffffff" stroke-width="1.6" fill="none"/></svg>
<svg class="r" style="left:316px;top:232px;" width="25" height="24" viewBox="0 0 25 24"><g fill="#3b3b3b"><rect x="0" y="0" width="11" height="11"/><rect x="14" y="0" width="11" height="11"/><rect x="0" y="13" width="11" height="11"/><rect x="14" y="13" width="11" height="11"/></g><g fill="#f0f0f0" font-family="Liberation Sans,sans-serif" font-weight="bold" font-size="9"><text x="2.4" y="8.7">A</text><text x="16.6" y="8.7">1</text></g><path d="M2.5 18.5H8.5M5.5 15.5V21.5M16.5 18.5H22.5" stroke="#f0f0f0" stroke-width="1.8"/></svg>
<div class="r " style="left:345px;top:227px;width:33px;height:33px;background:#e8f1fb;border:1px solid #7ab0e6;box-sizing:border-box;"></div>
<svg class="r" style="left:351px;top:234px;" width="21" height="20" viewBox="0 0 21 20"><path fill="#3b3b3b" d="M0 0H21L12.4 9V19.5H8.6V9Z"/></svg>
<svg class="r" style="left:383px;top:233px;" width="24" height="22" viewBox="0 0 24 22"><path d="M0.5 4C0.5 -0.8 17.5 -0.8 17.5 4V16C17.5 21 0.5 21 0.5 16Z" fill="#3b3b3b"/><ellipse cx="9" cy="4" rx="6.5" ry="1.8" fill="#777777"/><path d="M16 14H24L21 17.5V22H19.5V17.5Z" fill="#3b3b3b"/></svg>
<div class="r " style="left:168px;top:264px;width:252px;height:1px;background:#d0d0d0;"></div>
<div class="r" style="left:168px;top:265px;width:232.5px;height:611px;overflow:hidden">
<div class="r " style="left:13px;top:5px;width:1px;height:620px;background:#9a9a9a;"></div>
<div class="r " style="left:29px;top:133px;width:1px;height:236px;background:#9a9a9a;"></div>
<div class="r " style="left:29px;top:397px;width:1px;height:240px;background:#9a9a9a;"></div>
<div class="r " style="left:44px;top:221px;width:1px;height:122px;background:#9a9a9a;"></div>
<div class="r " style="left:44px;top:485px;width:1px;height:140px;background:#9a9a9a;"></div>
<div class="r " style="left:45px;top:376px;width:90px;height:22px;background:#f8f8f8;"></div>
<span class="t" style="left:48.00px;top:3.28px;font-size:14.5px;color:#1e1e1e;">CodeMast</span>
<svg class="r" style="left:8px;top:7.5px;" width="11" height="11" viewBox="0 0 11 11"><rect x="0.5" y="0.5" width="10" height="10" rx="1" fill="#f4f4f4" stroke="#9a9a9a"/><path d="M2.5 5.5H8.5M5.5 2.5V8.5" stroke="#2b3d8c" stroke-width="1" fill="none"/></svg>
<svg class="r" style="left:24px;top:4px;" width="19" height="17" viewBox="0 0 19 17"><rect width="19" height="17" fill="#3b3b3b"/><g fill="#f0f0f0"><rect x="1.5" y="3.6" width="4" height="2.9"/><rect x="1.5" y="8" width="4" height="2.9"/><rect x="1.5" y="12.4" width="4" height="2.9"/><rect x="7.4" y="3.6" width="4" height="2.9"/><rect x="7.4" y="8" width="4" height="2.9"/><rect x="7.4" y="12.4" width="4" height="2.9"/><rect x="13.3" y="3.6" width="4" height="2.9"/><rect x="13.3" y="8" width="4" height="2.9"/><rect x="13.3" y="12.4" width="4" height="2.9"/></g></svg>
<span class="t" style="left:48.00px;top:25.28px;font-size:14.5px;color:#1e1e1e;letter-spacing:0.143px;">CodeType</span>
<svg class="r" style="left:8px;top:29.5px;" width="11" height="11" viewBox="0 0 11 11"><rect x="0.5" y="0.5" width="10" height="10" rx="1" fill="#f4f4f4" stroke="#9a9a9a"/><path d="M2.5 5.5H8.5M5.5 2.5V8.5" stroke="#2b3d8c" stroke-width="1" fill="none"/></svg>
<svg class="r" style="left:24px;top:26px;" width="19" height="17" viewBox="0 0 19 17"><rect width="19" height="17" fill="#3b3b3b"/><g fill="#f0f0f0"><rect x="1.5" y="3.6" width="4" height="2.9"/><rect x="1.5" y="8" width="4" height="2.9"/><rect x="1.5" y="12.4" width="4" height="2.9"/><rect x="7.4" y="3.6" width="4" height="2.9"/><rect x="7.4" y="8" width="4" height="2.9"/><rect x="7.4" y="12.4" width="4" height="2.9"/><rect x="13.3" y="3.6" width="4" height="2.9"/><rect x="13.3" y="8" width="4" height="2.9"/><rect x="13.3" y="12.4" width="4" height="2.9"/></g></svg>
<span class="t" style="left:48.00px;top:47.28px;font-size:14.5px;color:#1e1e1e;">Customer</span>
<svg class="r" style="left:8px;top:51.5px;" width="11" height="11" viewBox="0 0 11 11"><rect x="0.5" y="0.5" width="10" height="10" rx="1" fill="#f4f4f4" stroke="#9a9a9a"/><path d="M2.5 5.5H8.5M5.5 2.5V8.5" stroke="#2b3d8c" stroke-width="1" fill="none"/></svg>
<svg class="r" style="left:24px;top:48px;" width="19" height="17" viewBox="0 0 19 17"><rect width="19" height="17" fill="#3b3b3b"/><g fill="#f0f0f0"><rect x="1.5" y="3.6" width="4" height="2.9"/><rect x="1.5" y="8" width="4" height="2.9"/><rect x="1.5" y="12.4" width="4" height="2.9"/><rect x="7.4" y="3.6" width="4" height="2.9"/><rect x="7.4" y="8" width="4" height="2.9"/><rect x="7.4" y="12.4" width="4" height="2.9"/><rect x="13.3" y="3.6" width="4" height="2.9"/><rect x="13.3" y="8" width="4" height="2.9"/><rect x="13.3" y="12.4" width="4" height="2.9"/></g></svg>
<span class="t" style="left:48.00px;top:69.28px;font-size:14.5px;color:#1e1e1e;letter-spacing:0.125px;">Inventory</span>
<svg class="r" style="left:8px;top:73.5px;" width="11" height="11" viewBox="0 0 11 11"><rect x="0.5" y="0.5" width="10" height="10" rx="1" fill="#f4f4f4" stroke="#9a9a9a"/><path d="M2.5 5.5H8.5M5.5 2.5V8.5" stroke="#2b3d8c" stroke-width="1" fill="none"/></svg>
<svg class="r" style="left:24px;top:70px;" width="19" height="17" viewBox="0 0 19 17"><rect width="19" height="17" fill="#3b3b3b"/><g fill="#f0f0f0"><rect x="1.5" y="3.6" width="4" height="2.9"/><rect x="1.5" y="8" width="4" height="2.9"/><rect x="1.5" y="12.4" width="4" height="2.9"/><rect x="7.4" y="3.6" width="4" height="2.9"/><rect x="7.4" y="8" width="4" height="2.9"/><rect x="7.4" y="12.4" width="4" height="2.9"/><rect x="13.3" y="3.6" width="4" height="2.9"/><rect x="13.3" y="8" width="4" height="2.9"/><rect x="13.3" y="12.4" width="4" height="2.9"/></g></svg>
<span class="t" style="left:48.00px;top:91.28px;font-size:14.5px;color:#1e1e1e;letter-spacing:0.300px;">OrderDetail</span>
<svg class="r" style="left:8px;top:95.5px;" width="11" height="11" viewBox="0 0 11 11"><rect x="0.5" y="0.5" width="10" height="10" rx="1" fill="#f4f4f4" stroke="#9a9a9a"/><path d="M2.5 5.5H8.5M5.5 2.5V8.5" stroke="#2b3d8c" stroke-width="1" fill="none"/></svg>
<svg class="r" style="left:24px;top:92px;" width="19" height="17" viewBox="0 0 19 17"><rect width="19" height="17" fill="#3b3b3b"/><g fill="#f0f0f0"><rect x="1.5" y="3.6" width="4" height="2.9"/><rect x="1.5" y="8" width="4" height="2.9"/><rect x="1.5" y="12.4" width="4" height="2.9"/><rect x="7.4" y="3.6" width="4" height="2.9"/><rect x="7.4" y="8" width="4" height="2.9"/><rect x="7.4" y="12.4" width="4" height="2.9"/><rect x="13.3" y="3.6" width="4" height="2.9"/><rect x="13.3" y="8" width="4" height="2.9"/><rect x="13.3" y="12.4" width="4" height="2.9"/></g></svg>
<span class="t" style="left:48.00px;top:113.28px;font-size:14.5px;color:#1e1e1e;letter-spacing:0.200px;">OrderHeader</span>
<svg class="r" style="left:8px;top:117.5px;" width="11" height="11" viewBox="0 0 11 11"><rect x="0.5" y="0.5" width="10" height="10" rx="1" fill="#f4f4f4" stroke="#9a9a9a"/><path d="M2.5 5.5H8.5" stroke="#2b3d8c" stroke-width="1" fill="none"/></svg>
<svg class="r" style="left:24px;top:114px;" width="19" height="17" viewBox="0 0 19 17"><rect width="19" height="17" fill="#3b3b3b"/><g fill="#f0f0f0"><rect x="1.5" y="3.6" width="4" height="2.9"/><rect x="1.5" y="8" width="4" height="2.9"/><rect x="1.5" y="12.4" width="4" height="2.9"/><rect x="7.4" y="3.6" width="4" height="2.9"/><rect x="7.4" y="8" width="4" height="2.9"/><rect x="7.4" y="12.4" width="4" height="2.9"/><rect x="13.3" y="3.6" width="4" height="2.9"/><rect x="13.3" y="8" width="4" height="2.9"/><rect x="13.3" y="12.4" width="4" height="2.9"/></g></svg>
<span class="t" style="left:63.00px;top:135.28px;font-size:14.5px;color:#1e1e1e;">Columns</span>
<svg class="r" style="left:24px;top:139.5px;" width="11" height="11" viewBox="0 0 11 11"><rect x="0.5" y="0.5" width="10" height="10" rx="1" fill="#f4f4f4" stroke="#9a9a9a"/><path d="M2.5 5.5H8.5M5.5 2.5V8.5" stroke="#2b3d8c" stroke-width="1" fill="none"/></svg>
<svg class="r" style="left:38.5px;top:136.5px;" width="17" height="17" viewBox="0 0 20 20"><g fill="#f0f0f0" stroke="#3b3b3b" stroke-width="1.6"><rect x="7" y="1" width="11" height="9" rx="2"/><rect x="4" y="4" width="11" height="9" rx="2"/><rect x="1" y="8" width="11" height="10" rx="2"/></g></svg>
<span class="t" style="left:63.00px;top:157.28px;font-size:14.5px;color:#1e1e1e;letter-spacing:-0.167px;">Indexes</span>
<svg class="r" style="left:24px;top:161.5px;" width="11" height="11" viewBox="0 0 11 11"><rect x="0.5" y="0.5" width="10" height="10" rx="1" fill="#f4f4f4" stroke="#9a9a9a"/><path d="M2.5 5.5H8.5M5.5 2.5V8.5" stroke="#2b3d8c" stroke-width="1" fill="none"/></svg>
<svg class="r" style="left:38.65px;top:158.5px;" width="18.7" height="17" viewBox="0 0 22 20"><g fill="#3b3b3b"><rect x="0" y="0" width="10" height="9"/><rect x="0" y="11" width="10" height="9"/></g><g fill="#f0f0f0" font-family="Liberation Sans,sans-serif" font-weight="bold" font-size="8.5"><text x="2" y="7.6">A</text><text x="2.2" y="18.6">Z</text></g><path d="M15.5 2V16M11.5 12L15.5 17L19.5 12" stroke="#0e5aa7" stroke-width="2.4" fill="none"/></svg>
<span class="t" style="left:63.00px;top:179.28px;font-size:14.5px;color:#1e1e1e;letter-spacing:0.083px;">Relationships</span>
<svg class="r" style="left:24px;top:183.5px;" width="11" height="11" viewBox="0 0 11 11"><rect x="0.5" y="0.5" width="10" height="10" rx="1" fill="#f4f4f4" stroke="#9a9a9a"/><path d="M2.5 5.5H8.5M5.5 2.5V8.5" stroke="#2b3d8c" stroke-width="1" fill="none"/></svg>
<svg class="r" style="left:38.65px;top:180.5px;" width="18.7" height="17" viewBox="0 0 22 20"><g fill="#f0f0f0" stroke="#3b3b3b" stroke-width="1.6"><rect x="7" y="1" width="8" height="6"/><rect x="1" y="13" width="8" height="6"/><rect x="13" y="13" width="8" height="6"/></g><path d="M11 7V10M5 13V10H17V13" stroke="#3b3b3b" stroke-width="1.4" fill="none"/></svg>
<span class="t" style="left:63.00px;top:201.28px;font-size:14.5px;color:#1e1e1e;letter-spacing:0.222px;">Connection</span>
<svg class="r" style="left:24px;top:205.5px;" width="11" height="11" viewBox="0 0 11 11"><rect x="0.5" y="0.5" width="10" height="10" rx="1" fill="#f4f4f4" stroke="#9a9a9a"/><path d="M2.5 5.5H8.5" stroke="#2b3d8c" stroke-width="1" fill="none"/></svg>
<svg class="r" style="left:39.65px;top:202.5px;" width="18.7" height="17" viewBox="0 0 22 20"><path d="M0.5 4C0.5 -0.6 15.5 -0.6 15.5 4V15C15.5 19.8 0.5 19.8 0.5 15Z" fill="#3b3b3b"/><ellipse cx="8" cy="4" rx="5.6" ry="1.6" fill="#8a8a8a"/><path d="M14 13H21L18.3 16V20H16.7V16Z" fill="#3b3b3b"/></svg>
<span class="t" style="left:78.00px;top:223.28px;font-size:14.5px;color:#1e1e1e;letter-spacing:-0.333px;">Driver: ODBC_DRV</span>
<svg class="r" style="left:56px;top:225.5px;" width="12" height="15" viewBox="0 0 12 15"><path d="M1 1L11 7.5L1 14Z" fill="none" stroke="#555555" stroke-width="1.6"/></svg>
<div class="r " style="left:45px;top:233px;width:7px;height:1px;background:#9a9a9a;"></div>
<span class="t" style="left:78.00px;top:245.28px;font-size:14.5px;color:#1e1e1e;letter-spacing:-0.133px;">Id: OrderDBMySQL</span>
<svg class="r" style="left:56px;top:247.5px;" width="12" height="15" viewBox="0 0 12 15"><path d="M1 1L11 7.5L1 14Z" fill="none" stroke="#555555" stroke-width="1.6"/></svg>
<div class="r " style="left:45px;top:255px;width:7px;height:1px;background:#9a9a9a;"></div>
<span class="t" style="left:78.00px;top:267.28px;font-size:14.5px;color:#1e1e1e;letter-spacing:0.000px">Server: DSN=OrderEntry</span>
<svg class="r" style="left:56px;top:269.5px;" width="12" height="15" viewBox="0 0 12 15"><path d="M1 1L11 7.5L1 14Z" fill="none" stroke="#555555" stroke-width="1.6"/></svg>
<div class="r " style="left:45px;top:277px;width:7px;height:1px;background:#9a9a9a;"></div>
<span class="t" style="left:78.00px;top:289.28px;font-size:14.5px;color:#1e1e1e;letter-spacing:-0.200px;">Owner:</span>
<svg class="r" style="left:56px;top:291.5px;" width="12" height="15" viewBox="0 0 12 15"><path d="M1 1L11 7.5L1 14Z" fill="none" stroke="#555555" stroke-width="1.6"/></svg>
<div class="r " style="left:45px;top:299px;width:7px;height:1px;background:#9a9a9a;"></div>
<span class="t" style="left:78.00px;top:311.28px;font-size:14.5px;color:#1e1e1e;letter-spacing:0.235px;">Table: orderheader</span>
<svg class="r" style="left:56px;top:313.5px;" width="12" height="15" viewBox="0 0 12 15"><path d="M1 1L11 7.5L1 14Z" fill="none" stroke="#555555" stroke-width="1.6"/></svg>
<div class="r " style="left:45px;top:321px;width:7px;height:1px;background:#9a9a9a;"></div>
<span class="t" style="left:78.00px;top:333.28px;font-size:14.5px;color:#1e1e1e;letter-spacing:-0.316px">Root: ODBC_DRV:OrderHeader</span>
<svg class="r" style="left:56px;top:335.5px;" width="12" height="15" viewBox="0 0 12 15"><path d="M1 1L11 7.5L1 14Z" fill="none" stroke="#555555" stroke-width="1.6"/></svg>
<div class="r " style="left:45px;top:343px;width:7px;height:1px;background:#9a9a9a;"></div>
<span class="t" style="left:63.00px;top:355.28px;font-size:14.5px;color:#1e1e1e;letter-spacing:0.312px;">Data Dictionaries</span>
<svg class="r" style="left:24px;top:359.5px;" width="11" height="11" viewBox="0 0 11 11"><rect x="0.5" y="0.5" width="10" height="10" rx="1" fill="#f4f4f4" stroke="#9a9a9a"/><path d="M2.5 5.5H8.5M5.5 2.5V8.5" stroke="#2b3d8c" stroke-width="1" fill="none"/></svg>
<svg class="r" style="left:38.8px;top:357.35px;" width="20.4" height="15.3" viewBox="0 0 24 18"><path d="M1 2Q7 0 11.5 3V17Q7 14 1 16ZM22 2Q16 0 11.5 3V17Q16 14 22 16Z" fill="#f0f0f0" stroke="#3b3b3b" stroke-width="1.6"/></svg>
<span class="t" style="left:48.00px;top:377.28px;font-size:14.5px;color:#1e1e1e;">OrderSystem</span>
<svg class="r" style="left:8px;top:381.5px;" width="11" height="11" viewBox="0 0 11 11"><rect x="0.5" y="0.5" width="10" height="10" rx="1" fill="#f4f4f4" stroke="#9a9a9a"/><path d="M2.5 5.5H8.5" stroke="#2b3d8c" stroke-width="1" fill="none"/></svg>
<svg class="r" style="left:24px;top:378px;" width="19" height="17" viewBox="0 0 19 17"><rect width="19" height="17" fill="#3b3b3b"/><g fill="#f0f0f0"><rect x="1.5" y="3.6" width="4" height="2.9"/><rect x="1.5" y="8" width="4" height="2.9"/><rect x="1.5" y="12.4" width="4" height="2.9"/><rect x="7.4" y="3.6" width="4" height="2.9"/><rect x="7.4" y="8" width="4" height="2.9"/><rect x="7.4" y="12.4" width="4" height="2.9"/><rect x="13.3" y="3.6" width="4" height="2.9"/><rect x="13.3" y="8" width="4" height="2.9"/><rect x="13.3" y="12.4" width="4" height="2.9"/></g></svg>
<span class="t" style="left:63.00px;top:399.28px;font-size:14.5px;color:#1e1e1e;">Columns</span>
<svg class="r" style="left:24px;top:403.5px;" width="11" height="11" viewBox="0 0 11 11"><rect x="0.5" y="0.5" width="10" height="10" rx="1" fill="#f4f4f4" stroke="#9a9a9a"/><path d="M2.5 5.5H8.5M5.5 2.5V8.5" stroke="#2b3d8c" stroke-width="1" fill="none"/></svg>
<svg class="r" style="left:38.5px;top:400.5px;" width="17" height="17" viewBox="0 0 20 20"><g fill="#f0f0f0" stroke="#3b3b3b" stroke-width="1.6"><rect x="7" y="1" width="11" height="9" rx="2"/><rect x="4" y="4" width="11" height="9" rx="2"/><rect x="1" y="8" width="11" height="10" rx="2"/></g></svg>
<span class="t" style="left:63.00px;top:421.28px;font-size:14.5px;color:#1e1e1e;letter-spacing:-0.167px;">Indexes</span>
<svg class="r" style="left:24px;top:425.5px;" width="11" height="11" viewBox="0 0 11 11"><rect x="0.5" y="0.5" width="10" height="10" rx="1" fill="#f4f4f4" stroke="#9a9a9a"/><path d="M2.5 5.5H8.5M5.5 2.5V8.5" stroke="#2b3d8c" stroke-width="1" fill="none"/></svg>
<svg class="r" style="left:38.65px;top:422.5px;" width="18.7" height="17" viewBox="0 0 22 20"><g fill="#3b3b3b"><rect x="0" y="0" width="10" height="9"/><rect x="0" y="11" width="10" height="9"/></g><g fill="#f0f0f0" font-family="Liberation Sans,sans-serif" font-weight="bold" font-size="8.5"><text x="2" y="7.6">A</text><text x="2.2" y="18.6">Z</text></g><path d="M15.5 2V16M11.5 12L15.5 17L19.5 12" stroke="#0e5aa7" stroke-width="2.4" fill="none"/></svg>
<span class="t" style="left:63.00px;top:443.28px;font-size:14.5px;color:#1e1e1e;letter-spacing:0.083px;">Relationships</span>
<svg class="r" style="left:24px;top:447.5px;" width="11" height="11" viewBox="0 0 11 11"><rect x="0.5" y="0.5" width="10" height="10" rx="1" fill="#f4f4f4" stroke="#9a9a9a"/><path d="M2.5 5.5H8.5M5.5 2.5V8.5" stroke="#2b3d8c" stroke-width="1" fill="none"/></svg>
<svg class="r" style="left:38.65px;top:444.5px;" width="18.7" height="17" viewBox="0 0 22 20"><g fill="#f0f0f0" stroke="#3b3b3b" stroke-width="1.6"><rect x="7" y="1" width="8" height="6"/><rect x="1" y="13" width="8" height="6"/><rect x="13" y="13" width="8" height="6"/></g><path d="M11 7V10M5 13V10H17V13" stroke="#3b3b3b" stroke-width="1.4" fill="none"/></svg>
<span class="t" style="left:63.00px;top:465.28px;font-size:14.5px;color:#1e1e1e;letter-spacing:0.222px;">Connection</span>
<svg class="r" style="left:24px;top:469.5px;" width="11" height="11" viewBox="0 0 11 11"><rect x="0.5" y="0.5" width="10" height="10" rx="1" fill="#f4f4f4" stroke="#9a9a9a"/><path d="M2.5 5.5H8.5" stroke="#2b3d8c" stroke-width="1" fill="none"/></svg>
<svg class="r" style="left:39.65px;top:466.5px;" width="18.7" height="17" viewBox="0 0 22 20"><path d="M0.5 4C0.5 -0.6 15.5 -0.6 15.5 4V15C15.5 19.8 0.5 19.8 0.5 15Z" fill="#3b3b3b"/><ellipse cx="8" cy="4" rx="5.6" ry="1.6" fill="#8a8a8a"/><path d="M14 13H21L18.3 16V20H16.7V16Z" fill="#3b3b3b"/></svg>
<span class="t" style="left:78.00px;top:487.28px;font-size:14.5px;color:#1e1e1e;letter-spacing:-0.333px;">Driver: ODBC_DRV</span>
<svg class="r" style="left:56px;top:489.5px;" width="12" height="15" viewBox="0 0 12 15"><path d="M1 1L11 7.5L1 14Z" fill="none" stroke="#555555" stroke-width="1.6"/></svg>
<div class="r " style="left:45px;top:497px;width:7px;height:1px;background:#9a9a9a;"></div>
<span class="t" style="left:78.00px;top:509.28px;font-size:14.5px;color:#1e1e1e;letter-spacing:-0.133px;">Id: OrderDBMySQL</span>
<svg class="r" style="left:56px;top:511.5px;" width="12" height="15" viewBox="0 0 12 15"><path d="M1 1L11 7.5L1 14Z" fill="none" stroke="#555555" stroke-width="1.6"/></svg>
<div class="r " style="left:45px;top:519px;width:7px;height:1px;background:#9a9a9a;"></div>
<span class="t" style="left:78.00px;top:531.28px;font-size:14.5px;color:#1e1e1e;letter-spacing:0.000px">Server: DSN=OrderEntry</span>
<svg class="r" style="left:56px;top:533.5px;" width="12" height="15" viewBox="0 0 12 15"><path d="M1 1L11 7.5L1 14Z" fill="none" stroke="#555555" stroke-width="1.6"/></svg>
<div class="r " style="left:45px;top:541px;width:7px;height:1px;background:#9a9a9a;"></div>
<span class="t" style="left:78.00px;top:553.28px;font-size:14.5px;color:#1e1e1e;letter-spacing:-0.200px;">Owner:</span>
<svg class="r" style="left:56px;top:555.5px;" width="12" height="15" viewBox="0 0 12 15"><path d="M1 1L11 7.5L1 14Z" fill="none" stroke="#555555" stroke-width="1.6"/></svg>
<div class="r " style="left:45px;top:563px;width:7px;height:1px;background:#9a9a9a;"></div>
<span class="t" style="left:78.00px;top:575.28px;font-size:14.5px;color:#1e1e1e;letter-spacing:0.176px;">Table: ordersystem</span>
<svg class="r" style="left:56px;top:577.5px;" width="12" height="15" viewBox="0 0 12 15"><path d="M1 1L11 7.5L1 14Z" fill="none" stroke="#555555" stroke-width="1.6"/></svg>
<div class="r " style="left:45px;top:585px;width:7px;height:1px;background:#9a9a9a;"></div>
<span class="t" style="left:78.00px;top:597.28px;font-size:14.5px;color:#1e1e1e;letter-spacing:-0.316px">Root: ODBC_DRV:OrderSystem</span>
<svg class="r" style="left:56px;top:599.5px;" width="12" height="15" viewBox="0 0 12 15"><path d="M1 1L11 7.5L1 14Z" fill="none" stroke="#555555" stroke-width="1.6"/></svg>
<div class="r " style="left:45px;top:607px;width:7px;height:1px;background:#9a9a9a;"></div>
</div>
<div class="r " style="left:402px;top:265px;width:17px;height:611px;background:#f4f4f4;"></div>
<div class="r " style="left:402px;top:287px;width:17px;height:449px;background:#c8c8c8;"></div>
<svg class="r" style="left:405px;top:271px;" width="11" height="8" viewBox="0 0 11 8"><path d="M1 7L5.5 2L10 7" fill="none" stroke="#555555" stroke-width="1.8"/></svg>
<svg class="r" style="left:405px;top:858px;" width="11" height="8" viewBox="0 0 11 8"><path d="M1 1L5.5 6L10 1" fill="none" stroke="#555555" stroke-width="1.8"/></svg>
<div class="r " style="left:168px;top:876px;width:234px;height:17px;background:#f4f4f4;"></div>
<div class="r " style="left:190px;top:876px;width:155px;height:17px;background:#c8c8c8;"></div>
<svg class="r" style="left:174px;top:879px;" width="8" height="11" viewBox="0 0 8 11"><path d="M7 0.8L1.8 5.5L7 10.2" fill="none" stroke="#555555" stroke-width="1.8"/></svg>
<svg class="r" style="left:386px;top:879px;" width="8" height="11" viewBox="0 0 8 11"><path d="M1 0.8L6.2 5.5L1 10.2" fill="none" stroke="#555555" stroke-width="1.8"/></svg>
<div class="r " style="left:166px;top:894px;width:257px;height:1px;background:#d8d8d8;"></div>
<div class="r " style="left:419px;top:265px;width:1px;height:630px;background:#d8d8d8;"></div>
<div class="r " style="left:168px;top:897px;width:84px;height:27px;background:#f8f8f8;"></div>
<div class="r " style="left:254px;top:899px;width:1px;height:24px;background:#dcdcdc;"></div>
<div class="r " style="left:335px;top:899px;width:1px;height:24px;background:#dcdcdc;"></div>
<div class="r " style="left:414px;top:899px;width:1px;height:24px;background:#dcdcdc;"></div>
<svg class="r" style="left:173px;top:901px;" width="20" height="20" viewBox="0 0 20 20"><g fill="#3b3b3b"><rect x="4" y="0" width="15" height="3"/><rect x="2" y="4" width="15" height="3"/><rect x="0" y="8" width="14" height="11"/></g><g fill="#f0f0f0"><rect x="1.5" y="11" width="3" height="2"/><rect x="5.8" y="11" width="3" height="2"/><rect x="1.5" y="14.5" width="3" height="2"/><rect x="5.8" y="14.5" width="3" height="2"/></g><circle cx="13" cy="13" r="3.5" fill="#f0f0f0" stroke="#3b3b3b" stroke-width="1.6"/><path d="M15.5 15.5L19 19" stroke="#3b3b3b" stroke-width="2"/></svg>
<span class="t" style="left:197.00px;top:902.28px;font-size:14.5px;color:#1e1e1e;letter-spacing:-0.500px;">Table ...</span>
<svg class="r" style="left:259px;top:901px;" width="18" height="18" viewBox="0 0 18 18"><rect x="0.9" y="0.9" width="16.2" height="16.2" fill="#f8f8f8" stroke="#3b3b3b" stroke-width="1.8"/><rect x="0.9" y="0.9" width="16.2" height="3" fill="#3b3b3b"/><path d="M4 7H9V11H13V15" stroke="#e09a30" stroke-width="2.4" fill="none"/></svg>
<span class="t" style="left:282.00px;top:901.28px;font-size:14.5px;color:#1e1e1e;letter-spacing:-0.333px;">Code...</span>
<svg class="r" style="left:341px;top:900px;" width="19" height="19" viewBox="0 0 19 19"><path d="M9.5 1C2 1 0 8 2 13C4 18 11 19 13 16C14.5 13.5 11 12.5 13.5 10.5C16 9 19 10 18.5 6C18 2.5 14 1 9.5 1Z" fill="#3b3b3b"/><g fill="#f0f0f0"><circle cx="6" cy="6.5" r="1.6"/><circle cx="11" cy="4.5" r="1.6"/><circle cx="5" cy="11.5" r="1.6"/><circle cx="8.5" cy="15" r="1.6"/></g></svg>
<span class="t" style="left:365.00px;top:901.28px;font-size:14.5px;color:#1e1e1e;letter-spacing:-0.625px;">Class ...</span>
<svg class="r" style="left:176px;top:931px;" width="18" height="17" viewBox="0 0 18 17"><rect x="0.9" y="0.9" width="16.2" height="15.2" fill="#f8f8f8" stroke="#3b3b3b" stroke-width="1.8"/><rect x="0.9" y="0.9" width="16.2" height="3" fill="#3b3b3b"/><path d="M4 13L7 8L9 13Z" fill="#e0a020"/><path d="M8 9L10 11.5L14 6.5" stroke="#3b3b3b" stroke-width="1.6" fill="none"/></svg>
<span class="t" style="left:198.00px;top:931.08px;font-size:14.5px;color:#1e1e1e;letter-spacing:0.138px;">Problem Resolution [Order.src]</span>
<div class="r " style="left:407px;top:930px;width:1px;height:21px;background:#dcdcdc;"></div>
<svg class="r" style="left:417px;top:929px;" width="15" height="20" viewBox="0 0 15 20"><path d="M1.5 4.5H13.5V18.5H1.5Z" fill="none" stroke="#3b3b3b" stroke-width="1.6"/><path d="M5 4C5 0 10 0 10 4" fill="none" stroke="#3b3b3b" stroke-width="1.6"/><path d="M4.5 11L7 14L11.5 8" stroke="#3b3b3b" stroke-width="1.8" fill="none"/></svg>
<span class="t" style="left:437.00px;top:931.08px;font-size:14.5px;color:#1e1e1e;letter-spacing:0.143px;">To Do List [Order.src]</span>
<div class="r " style="left:581px;top:927px;width:84px;height:25px;background:#f8f8f8;"></div>
<svg class="r" style="left:587px;top:931px;" width="20" height="17" viewBox="0 0 20 17"><path d="M8 1H1V16H8" fill="none" stroke="#3b3b3b" stroke-width="1.8"/><path d="M5 8.5H17M12 3.5L17.5 8.5L12 13.5" stroke="#3b3b3b" stroke-width="2.2" fill="none"/></svg>
<span class="t" style="left:610.00px;top:931.08px;font-size:14.5px;color:#1e1e1e;letter-spacing:0.200px;">Output</span>
<div class="r " style="left:166px;top:952px;width:1611px;height:26px;background:#007adc;"></div>
<span class="t" style="left:170.00px;top:957.28px;font-size:14.5px;color:#ffffff;letter-spacing:0.125px;">OrderSystem table</span>
<svg class="r" style="left:1468px;top:957px;" width="18" height="18" viewBox="0 0 18 18"><circle cx="9" cy="9" r="8.5" fill="#f2f2f2"/><circle cx="9" cy="9" r="6.2" fill="none" stroke="#e04a3a" stroke-width="1.4"/><path d="M9 4.2V10.5M9 12V14" stroke="#e04a3a" stroke-width="2.2"/></svg>
<span class="t" style="left:1650.00px;top:957.28px;font-size:14.5px;color:#5fb2f2;letter-spacing:-1.333px;">CAPS</span>
<span class="t" style="left:1706.60px;top:957.28px;font-size:14.5px;color:#ffffff;letter-spacing:0.600px;">NUM</span><div class="r " style="left:1420px;top:198px;width:1px;height:726px;background:#d8d8d8;"></div>
<div class="r " style="left:1423px;top:198px;width:354px;height:26px;background:#c2cfe4;"></div>
<svg class="r" style="left:1738px;top:204px;" width="10" height="14" viewBox="0 0 10 14"><path d="M2.5 0H7.5V7H9.5V9H0.5V7H2.5Z" fill="#111111"/><path d="M5 9V14" stroke="#111111" stroke-width="1.6"/></svg>
<svg class="r" style="left:1760px;top:206px;" width="10" height="10" viewBox="0 0 10 10"><path d="M1 1L9 9M9 1L1 9" stroke="#111111" stroke-width="2"/></svg>
<div class="r " style="left:1425px;top:232px;width:350px;height:31px;background:#e6e6e6;border:1px solid #cfcfcf;box-sizing:border-box;"></div>
<svg class="r" style="left:1758px;top:243px;" width="12" height="8" viewBox="0 0 12 8"><path d="M1 1L6 6L11 1" fill="none" stroke="#666666" stroke-width="1.5"/></svg>
<div class="r " style="left:1423px;top:268px;width:354px;height:1px;background:#cfcfcf;"></div>
<div class="r " style="left:1423px;top:269px;width:354px;height:213px;background:#ffffff;"></div>
<div class="r " style="left:1423px;top:482px;width:354px;height:1px;background:#cfcfcf;"></div>
<div class="r " style="left:1423px;top:488px;width:354px;height:26px;background:#c2cfe4;"></div>
<svg class="r" style="left:1738px;top:494px;" width="10" height="14" viewBox="0 0 10 14"><path d="M2.5 0H7.5V7H9.5V9H0.5V7H2.5Z" fill="#111111"/><path d="M5 9V14" stroke="#111111" stroke-width="1.6"/></svg>
<svg class="r" style="left:1760px;top:496px;" width="10" height="10" viewBox="0 0 10 10"><path d="M1 1L9 9M9 1L1 9" stroke="#111111" stroke-width="2"/></svg>
<div class="r " style="left:1423px;top:514px;width:354px;height:410px;background:#f6f6f6;"></div>
<div class="r " style="left:1427px;top:524px;width:342px;height:31px;background:#fbfbfb;border:1px solid #e8e8e8;box-sizing:border-box;"></div>
<div class="r " style="left:1427px;top:566px;width:342px;height:32px;background:#fbfbfb;border:1px solid #e8e8e8;box-sizing:border-box;"></div>
<span class="t" style="left:1580.00px;top:573.28px;font-size:14.5px;color:#1e1e1e;letter-spacing:-0.500px;">OrderSystem</span>
<div class="r " style="left:1427px;top:630px;width:342px;height:26px;background:#f0f0f0;"></div>
<div class="r " style="left:1427px;top:663px;width:343px;height:176px;background:#fbfbfb;border:1px solid #c4d4ec;box-sizing:border-box;"></div>
<div class="r " style="left:1428px;top:664px;width:324px;height:24px;background:#e6e6e6;"></div>
<div class="r " style="left:1428px;top:763px;width:324px;height:26px;background:#dcdcdc;"></div>
<div class="r " style="left:1751px;top:664px;width:18px;height:174px;background:#f0f0f0;"></div>
<div class="r " style="left:1751px;top:686px;width:18px;height:29px;background:#c4c4c4;"></div>
<svg class="r" style="left:1755px;top:670px;" width="11" height="8" viewBox="0 0 11 8"><path d="M1 7L5.5 2L10 7" fill="none" stroke="#555555" stroke-width="1.8"/></svg>
<svg class="r" style="left:1755px;top:829px;" width="11" height="8" viewBox="0 0 11 8"><path d="M1 1L5.5 6L10 1" fill="none" stroke="#555555" stroke-width="1.8"/></svg>
<div class="r" style="left:1428px;top:664px;width:322px;height:174px;overflow:hidden">
<span class="t" style="left:181.37px;top:27.68px;font-size:14.5px;color:#505050;letter-spacing:-1.760px">ODBC_DRV</span>
<span class="t" style="left:179.43px;top:52.98px;font-size:14.5px;color:#505050;letter-spacing:-0.231px">DFCONNID=OrderDBMySQL</span>
<span class="t" style="left:177.53px;top:127.98px;font-size:14.5px;color:#505050;letter-spacing:-0.335px">Order Entry System Table</span>
<span class="t" style="left:179.67px;top:152.98px;font-size:14.5px;color:#505050;letter-spacing:-0.912px">ODBC_DRV:OrderSystem</span>
</div>
<div class="r " style="left:1428px;top:688px;width:323px;height:1px;background:#e6e6e6;"></div>
<div class="r " style="left:1428px;top:713px;width:323px;height:1px;background:#e6e6e6;"></div>
<div class="r " style="left:1428px;top:738px;width:323px;height:1px;background:#e6e6e6;"></div>
<div class="r " style="left:1428px;top:814px;width:323px;height:1px;background:#e6e6e6;"></div>
<div class="r " style="left:1423px;top:839px;width:348px;height:81px;background:#f6f6f6;border:1px solid #ffffff;box-sizing:border-box;"></div><div class="r " style="left:423px;top:198px;width:997px;height:727px;background:#fdfdfd;"></div>
<div class="r " style="left:423px;top:198px;width:5px;height:727px;background:#e0e0e0;"></div>
<div class="r " style="left:428px;top:198px;width:6px;height:640px;background:linear-gradient(to right,#ffffff,#dcdcdc);"></div>
<div class="r " style="left:430px;top:201px;width:1.6px;height:24px;background:#2f5f9f;"></div>
<div class="r " style="left:443px;top:838px;width:464px;height:85px;background:#ffffff;"></div>
<div class="r " style="left:1390px;top:838px;width:30px;height:86px;background:#f4f4f4;"></div>
<span class="t" style="left:466.00px;top:824.93px;font-size:15.5px;color:#111111;letter-spacing:-0.588px;">C:\DataFlex 19.1 Examples\Order Entry MySQL Database</span>
<svg class="r" style="left:464px;top:853px;" width="22" height="22" viewBox="0 0 22 22"><circle cx="11" cy="11" r="10" fill="none" stroke="#707070" stroke-width="1.2"/><path d="M11 8V14M9.6 9L11 8" stroke="#707070" stroke-width="1.2" fill="none"/></svg>
<span class="t" style="left:491.00px;top:854.08px;font-size:14.5px;color:#303030;letter-spacing:0.062px;">Library is used by this workspace</span>
<span class="t" style="left:466.00px;top:882.28px;font-size:14.5px;color:#a0a0a0;">&gt; Learn more...</span>
<svg class="r" style="left:1393px;top:896px;" width="18" height="11" viewBox="0 0 18 11"><path d="M1.5 1.5L9 9L16.5 1.5" fill="none" stroke="#3b3b3b" stroke-width="2.6"/></svg></div></div>
<div id="dbx"><div class="r " style="left:432px;top:138px;width:1196px;height:697px;background:#a9cbed;"></div>
<div class="r " style="left:433px;top:139px;width:1194px;height:695px;background:#3f78b3;"></div>
<div class="r " style="left:434px;top:140px;width:1192px;height:693px;background:#f0f0f2;"></div>
<div class="r " style="left:434px;top:140px;width:1192px;height:37px;background:#ffffff;"></div>
<svg class="r" style="left:444px;top:149.8px;" width="17.6" height="17.6" viewBox="0 0 23.5 23.5"><g fill="#3b3b3b"><rect x="9" y="0" width="3.6" height="3.6"/><rect x="14" y="0" width="3.6" height="3.6"/><rect x="19" y="0" width="3.6" height="3.6"/><rect x="14" y="5" width="3.6" height="3.6"/><rect x="19" y="5" width="3.6" height="3.6"/><rect x="14" y="10" width="3.6" height="3.6"/><rect x="19" y="10" width="3.6" height="3.6"/><path d="M9 5h3.6v2.2h-3.6z"/><path d="M0.5 11.5C0.5 8 12.5 8 12.5 11.5V19.5C12.5 23 0.5 23 0.5 19.5Z"/></g><ellipse cx="6.5" cy="11.4" rx="5" ry="1.9" fill="#f4f4f4"/></svg>
<span class="t" style="left:468.80px;top:149.18px;font-size:14.5px;color:#000000;letter-spacing:0.038px;">Database Explorer 19.1 - (Order Entry Example)</span>
<svg class="r" style="left:1470px;top:150px;" width="140" height="16" viewBox="0 0 140 16"><g stroke="#000000" stroke-width="1.1" fill="none"><path d="M3.5 7.5H15"/><rect x="61.5" y="2.5" width="11" height="11"/><path d="M120.3 2.3L132 14M132 2.3L120.3 14" stroke-width="1.2"/></g></svg>
<span class="t" style="left:474.00px;top:184.68px;font-size:14.5px;color:#1a1a1a;letter-spacing:-0.100px;">File</span>
<span class="t" style="left:521.30px;top:184.68px;font-size:14.5px;color:#1a1a1a;letter-spacing:-0.120px;">Record</span>
<span class="t" style="left:592.70px;top:184.68px;font-size:14.5px;color:#1a1a1a;">Database</span>
<span class="t" style="left:679.30px;top:184.68px;font-size:14.5px;color:#1a1a1a;letter-spacing:0.500px;">Window</span>
<span class="t" style="left:758.30px;top:184.68px;font-size:14.5px;color:#1a1a1a;letter-spacing:0.467px;">Help</span>
<svg class="r" style="left:446px;top:183px;" width="8" height="21" viewBox="0 0 8 21"><g fill="#bcbcbc"><rect x="0.3" y="0.40" width="1.1" height="1.1"/><rect x="6.3" y="0.40" width="1.1" height="1.1"/><rect x="3.3" y="1.76" width="1.1" height="1.1"/><rect x="0.3" y="3.12" width="1.1" height="1.1"/><rect x="6.3" y="3.12" width="1.1" height="1.1"/><rect x="3.3" y="4.48" width="1.1" height="1.1"/><rect x="0.3" y="5.84" width="1.1" height="1.1"/><rect x="6.3" y="5.84" width="1.1" height="1.1"/><rect x="3.3" y="7.20" width="1.1" height="1.1"/><rect x="0.3" y="8.56" width="1.1" height="1.1"/><rect x="6.3" y="8.56" width="1.1" height="1.1"/><rect x="3.3" y="9.92" width="1.1" height="1.1"/><rect x="0.3" y="11.28" width="1.1" height="1.1"/><rect x="6.3" y="11.28" width="1.1" height="1.1"/><rect x="3.3" y="12.64" width="1.1" height="1.1"/><rect x="0.3" y="14.00" width="1.1" height="1.1"/><rect x="6.3" y="14.00" width="1.1" height="1.1"/><rect x="3.3" y="15.36" width="1.1" height="1.1"/><rect x="0.3" y="16.72" width="1.1" height="1.1"/><rect x="6.3" y="16.72" width="1.1" height="1.1"/><rect x="3.3" y="18.08" width="1.1" height="1.1"/><rect x="0.3" y="19.44" width="1.1" height="1.1"/><rect x="6.3" y="19.44" width="1.1" height="1.1"/></g></svg>
<svg class="r" style="left:446px;top:216.5px;" width="8" height="28" viewBox="0 0 8 28"><g fill="#bcbcbc"><rect x="0.3" y="0.40" width="1.1" height="1.1"/><rect x="6.3" y="0.40" width="1.1" height="1.1"/><rect x="3.3" y="1.76" width="1.1" height="1.1"/><rect x="0.3" y="3.12" width="1.1" height="1.1"/><rect x="6.3" y="3.12" width="1.1" height="1.1"/><rect x="3.3" y="4.48" width="1.1" height="1.1"/><rect x="0.3" y="5.84" width="1.1" height="1.1"/><rect x="6.3" y="5.84" width="1.1" height="1.1"/><rect x="3.3" y="7.20" width="1.1" height="1.1"/><rect x="0.3" y="8.56" width="1.1" height="1.1"/><rect x="6.3" y="8.56" width="1.1" height="1.1"/><rect x="3.3" y="9.92" width="1.1" height="1.1"/><rect x="0.3" y="11.28" width="1.1" height="1.1"/><rect x="6.3" y="11.28" width="1.1" height="1.1"/><rect x="3.3" y="12.64" width="1.1" height="1.1"/><rect x="0.3" y="14.00" width="1.1" height="1.1"/><rect x="6.3" y="14.00" width="1.1" height="1.1"/><rect x="3.3" y="15.36" width="1.1" height="1.1"/><rect x="0.3" y="16.72" width="1.1" height="1.1"/><rect x="6.3" y="16.72" width="1.1" height="1.1"/><rect x="3.3" y="18.08" width="1.1" height="1.1"/><rect x="0.3" y="19.44" width="1.1" height="1.1"/><rect x="6.3" y="19.44" width="1.1" height="1.1"/><rect x="3.3" y="20.80" width="1.1" height="1.1"/><rect x="0.3" y="22.16" width="1.1" height="1.1"/><rect x="6.3" y="22.16" width="1.1" height="1.1"/><rect x="3.3" y="23.52" width="1.1" height="1.1"/><rect x="0.3" y="24.88" width="1.1" height="1.1"/><rect x="6.3" y="24.88" width="1.1" height="1.1"/><rect x="3.3" y="26.24" width="1.1" height="1.1"/></g></svg>
<svg class="r" style="left:466.5px;top:220px;" width="23" height="20" viewBox="0 0 23 20"><g fill="#b5b5b5"><rect x="0.5" y="1" width="2" height="18"/><path d="M17.2 2 L17.2 18 L6.5 10Z"/><rect x="20.5" y="1" width="2" height="18"/></g></svg>
<svg class="r" style="left:502.5px;top:220px;" width="14" height="20" viewBox="0 0 14 20"><path fill="#b5b5b5" d="M13.5 1.5 L13.5 18.5 L0 10Z"/></svg>
<svg class="r" style="left:533px;top:220px;" width="18" height="20" viewBox="0 0 18 20"><g fill="none" stroke="#b5b5b5" stroke-width="2"><rect x="1" y="1" width="16" height="18"/><path d="M5 8H13M5 13H13"/></g></svg>
<svg class="r" style="left:567.5px;top:220px;" width="14" height="20" viewBox="0 0 14 20"><path fill="#b5b5b5" d="M0.5 1.5 L0.5 18.5 L14 10Z"/></svg>
<svg class="r" style="left:594.5px;top:220px;" width="23" height="20" viewBox="0 0 23 20"><g fill="#b5b5b5"><rect x="0.5" y="1" width="2" height="18"/><path d="M5.5 2 L5.5 18 L16.2 10Z"/><rect x="20.5" y="1" width="2" height="18"/></g></svg>
<div class="r " style="left:625px;top:217px;width:1px;height:29px;background:#c9c9c9;"></div>
<svg class="r" style="left:635.5px;top:220px;" width="20" height="19" viewBox="0 0 20 19"><g stroke="#b5b5b5" fill="none"><path d="M0.8 0.5L8 7.7M8 0.5L0.8 7.7" stroke-width="2.1"/><path d="M9.5 1.8H20M10.5 5.9H20M1.5 10H20M1.5 14.1H20M1.5 18.2H20" stroke-width="2.1"/></g></svg>
<svg class="r" style="left:669px;top:219.5px;" width="18" height="21" viewBox="0 0 18 21"><g stroke="#b5b5b5" fill="none"><path d="M0.5 0.5H13.5V12.5H0.5Z" stroke-width="1.2"/><path d="M3 3.5H11M3 6H11M3 8.5H11M3 11H8" stroke-width="1"/></g><path fill="#b5b5b5" d="M8 11H18V21H8Z"/><rect x="12" y="10.5" width="3.5" height="4" fill="#f0f0f2"/></svg>
<div class="r " style="left:697px;top:217px;width:1px;height:29px;background:#c9c9c9;"></div>
<svg class="r" style="left:709px;top:219.5px;" width="19" height="21" viewBox="0 0 19 21"><g stroke="#b5b5b5" fill="none"><path d="M0.5 0.5H13.5V15.5H0.5Z" stroke-width="1.2"/><path d="M3 3.5H11M3 6H11M3 8.5H11M3 11H9M3 13.5H7" stroke-width="1"/><path d="M8.5 11L18.5 20.5M18.5 11L8.5 20.5" stroke-width="1.6"/></g></svg>
<div class="r " style="left:737px;top:217px;width:1px;height:29px;background:#c9c9c9;"></div>
<svg class="r" style="left:748px;top:220px;" width="20" height="20" viewBox="0 0 20 20"><g fill="none" stroke="#bdbdbd" stroke-width="3.6"><path d="M3 8.6A7 7 0 0 1 15 5.2"/><path d="M17 11.4A7 7 0 0 1 5 14.8"/></g><path fill="#bdbdbd" d="M11.2 8L20 8.8L19.4 0.2Z"/><path fill="#bdbdbd" d="M8.8 12L0 11.2L0.6 19.8Z"/></svg>
<svg class="r" style="left:778.5px;top:218.5px;" width="22" height="22" viewBox="0 0 22 22"><rect x="5" y="7" width="16" height="14" fill="#3b3b3b"/><g fill="#ffffff"><rect x="6.5" y="10" width="3.6" height="2.7"/><rect x="11.3" y="10" width="3.6" height="2.7"/><rect x="16.1" y="10" width="3.6" height="2.7"/><rect x="6.5" y="13.8" width="3.6" height="2.7"/><rect x="11.3" y="13.8" width="3.6" height="2.7"/><rect x="16.1" y="13.8" width="3.6" height="2.7"/><rect x="6.5" y="17.6" width="3.6" height="2.3"/><rect x="11.3" y="17.6" width="3.6" height="2.3"/><rect x="16.1" y="17.6" width="3.6" height="2.3"/></g><path d="M4.5 11.5C0 9 1.5 3.2 8 3.6" fill="none" stroke="#0e5aa7" stroke-width="2.4"/><path fill="#0e5aa7" d="M7 0L12.5 3.8L7 7.6Z"/></svg>
<svg class="r" style="left:811px;top:219px;" width="23" height="22" viewBox="0 0 23 22"><path d="M6 6.5V3.5H10L12 1.5H21.5V14" fill="#fbebd0" stroke="#f3d7a6" stroke-width="1"/><path d="M4 13L7 7H19L22 13.5V15H4Z" fill="#e6c58e"/><rect x="0.5" y="11.5" width="14.5" height="10" fill="#ffffff" stroke="#3b3b3b" stroke-width="1.6"/><path d="M0.5 15H15M0.5 18.2H15M4.2 12V21" stroke="#3b3b3b" stroke-width="1.3" fill="none"/></svg>
<svg class="r" style="left:854px;top:216.5px;" width="8" height="28" viewBox="0 0 8 28"><g fill="#bcbcbc"><rect x="0.3" y="0.40" width="1.1" height="1.1"/><rect x="6.3" y="0.40" width="1.1" height="1.1"/><rect x="3.3" y="1.76" width="1.1" height="1.1"/><rect x="0.3" y="3.12" width="1.1" height="1.1"/><rect x="6.3" y="3.12" width="1.1" height="1.1"/><rect x="3.3" y="4.48" width="1.1" height="1.1"/><rect x="0.3" y="5.84" width="1.1" height="1.1"/><rect x="6.3" y="5.84" width="1.1" height="1.1"/><rect x="3.3" y="7.20" width="1.1" height="1.1"/><rect x="0.3" y="8.56" width="1.1" height="1.1"/><rect x="6.3" y="8.56" width="1.1" height="1.1"/><rect x="3.3" y="9.92" width="1.1" height="1.1"/><rect x="0.3" y="11.28" width="1.1" height="1.1"/><rect x="6.3" y="11.28" width="1.1" height="1.1"/><rect x="3.3" y="12.64" width="1.1" height="1.1"/><rect x="0.3" y="14.00" width="1.1" height="1.1"/><rect x="6.3" y="14.00" width="1.1" height="1.1"/><rect x="3.3" y="15.36" width="1.1" height="1.1"/><rect x="0.3" y="16.72" width="1.1" height="1.1"/><rect x="6.3" y="16.72" width="1.1" height="1.1"/><rect x="3.3" y="18.08" width="1.1" height="1.1"/><rect x="0.3" y="19.44" width="1.1" height="1.1"/><rect x="6.3" y="19.44" width="1.1" height="1.1"/><rect x="3.3" y="20.80" width="1.1" height="1.1"/><rect x="0.3" y="22.16" width="1.1" height="1.1"/><rect x="6.3" y="22.16" width="1.1" height="1.1"/><rect x="3.3" y="23.52" width="1.1" height="1.1"/><rect x="0.3" y="24.88" width="1.1" height="1.1"/><rect x="6.3" y="24.88" width="1.1" height="1.1"/><rect x="3.3" y="26.24" width="1.1" height="1.1"/></g></svg>
<svg class="r" style="left:876px;top:219px;" width="20" height="22" viewBox="0 0 20 22"><g fill="none" stroke="#b5b5b5" stroke-width="1.9"><circle cx="3.8" cy="17.8" r="3"/><circle cx="15.2" cy="17.8" r="3"/></g><path fill="#b5b5b5" d="M2.6 0.3L5.4 0.3L10.6 11.5L13.4 15.6L11.6 16.4L9.5 13.6Z"/><path fill="#b5b5b5" d="M16.4 0.3L13.6 0.3L8.4 11.5L5.6 15.6L7.4 16.4L9.5 13.6Z"/></svg>
<svg class="r" style="left:908px;top:219.5px;" width="19" height="21" viewBox="0 0 19 21"><g fill="none" stroke="#b5b5b5" stroke-width="1.8"><path d="M6 5V1H13L17.5 5.5V15H13"/><path d="M1 6H8L12.5 10.5V20H1Z"/></g></svg>
<svg class="r" style="left:939px;top:219.5px;" width="18" height="21" viewBox="0 0 18 21"><g fill="none" stroke="#b5b5b5" stroke-width="1.8"><path d="M5.5 5.5C5.5 -0.5 12.5 -0.5 12.5 5.5"/><path d="M3 6H16.5V20H11"/><path d="M1 11H9V20H1Z"/></g></svg>
<svg class="r" style="left:981px;top:216.5px;" width="8" height="28" viewBox="0 0 8 28"><g fill="#bcbcbc"><rect x="0.3" y="0.40" width="1.1" height="1.1"/><rect x="6.3" y="0.40" width="1.1" height="1.1"/><rect x="3.3" y="1.76" width="1.1" height="1.1"/><rect x="0.3" y="3.12" width="1.1" height="1.1"/><rect x="6.3" y="3.12" width="1.1" height="1.1"/><rect x="3.3" y="4.48" width="1.1" height="1.1"/><rect x="0.3" y="5.84" width="1.1" height="1.1"/><rect x="6.3" y="5.84" width="1.1" height="1.1"/><rect x="3.3" y="7.20" width="1.1" height="1.1"/><rect x="0.3" y="8.56" width="1.1" height="1.1"/><rect x="6.3" y="8.56" width="1.1" height="1.1"/><rect x="3.3" y="9.92" width="1.1" height="1.1"/><rect x="0.3" y="11.28" width="1.1" height="1.1"/><rect x="6.3" y="11.28" width="1.1" height="1.1"/><rect x="3.3" y="12.64" width="1.1" height="1.1"/><rect x="0.3" y="14.00" width="1.1" height="1.1"/><rect x="6.3" y="14.00" width="1.1" height="1.1"/><rect x="3.3" y="15.36" width="1.1" height="1.1"/><rect x="0.3" y="16.72" width="1.1" height="1.1"/><rect x="6.3" y="16.72" width="1.1" height="1.1"/><rect x="3.3" y="18.08" width="1.1" height="1.1"/><rect x="0.3" y="19.44" width="1.1" height="1.1"/><rect x="6.3" y="19.44" width="1.1" height="1.1"/><rect x="3.3" y="20.80" width="1.1" height="1.1"/><rect x="0.3" y="22.16" width="1.1" height="1.1"/><rect x="6.3" y="22.16" width="1.1" height="1.1"/><rect x="3.3" y="23.52" width="1.1" height="1.1"/><rect x="0.3" y="24.88" width="1.1" height="1.1"/><rect x="6.3" y="24.88" width="1.1" height="1.1"/><rect x="3.3" y="26.24" width="1.1" height="1.1"/></g></svg>
<svg class="r" style="left:1000.5px;top:218.5px;" width="23.5" height="23.5" viewBox="0 0 23.5 23.5"><g fill="#3b3b3b"><rect x="9" y="0" width="3.6" height="3.6"/><rect x="14" y="0" width="3.6" height="3.6"/><rect x="19" y="0" width="3.6" height="3.6"/><rect x="14" y="5" width="3.6" height="3.6"/><rect x="19" y="5" width="3.6" height="3.6"/><rect x="14" y="10" width="3.6" height="3.6"/><rect x="19" y="10" width="3.6" height="3.6"/><path d="M9 5h3.6v2.2h-3.6z"/><path d="M0.5 11.5C0.5 8 12.5 8 12.5 11.5V19.5C12.5 23 0.5 23 0.5 19.5Z"/></g><ellipse cx="6.5" cy="11.4" rx="5" ry="1.9" fill="#f4f4f4"/></svg>
<svg class="r" style="left:1032.5px;top:218.5px;" width="22" height="22" viewBox="0 0 22 22"><rect x="1.5" y="5" width="19.5" height="16" fill="#fde9dc" stroke="#3b3b3b" stroke-width="1.6"/><text x="3.2" y="18.6" font-family="Liberation Sans,sans-serif" font-weight="bold" font-size="13" letter-spacing="-1.2" fill="#e2571e">DF</text><path d="M4 9.5C0 7.5 1.5 2.8 7 3.2" fill="none" stroke="#0e5aa7" stroke-width="2.2"/><path fill="#0e5aa7" d="M6 0L11 3.4L6 6.8Z"/></svg>
<div class="r " style="left:1060px;top:214px;width:32px;height:32px;background:#e8f1fb;border:1px solid #7ab0e6;box-sizing:border-box;"></div>
<svg class="r" style="left:1066px;top:220px;" width="20" height="20" viewBox="0 0 20 20"><rect x="0.8" y="0.8" width="18.6" height="18.6" fill="#fafafa" stroke="#3b3b3b" stroke-width="1.6"/><path d="M6.8 1V19" stroke="#3b3b3b" stroke-width="1.4"/><path d="M2.5 4.5H5M2.5 7.5H5M2.5 10.5H5M2.5 13.5H5M2.5 16.5H5" stroke="#3b3b3b" stroke-width="1"/></svg>
<svg class="r" style="left:1097px;top:219px;" width="22" height="22" viewBox="0 0 22 22"><g transform="translate(11,11)" fill="#3b3b3b"><rect x="-2.2" y="-11" width="4.4" height="5" rx="0.8" transform="rotate(0)"/><rect x="-2.2" y="-11" width="4.4" height="5" rx="0.8" transform="rotate(45)"/><rect x="-2.2" y="-11" width="4.4" height="5" rx="0.8" transform="rotate(90)"/><rect x="-2.2" y="-11" width="4.4" height="5" rx="0.8" transform="rotate(135)"/><rect x="-2.2" y="-11" width="4.4" height="5" rx="0.8" transform="rotate(180)"/><rect x="-2.2" y="-11" width="4.4" height="5" rx="0.8" transform="rotate(225)"/><rect x="-2.2" y="-11" width="4.4" height="5" rx="0.8" transform="rotate(270)"/><rect x="-2.2" y="-11" width="4.4" height="5" rx="0.8" transform="rotate(315)"/><circle r="7.6"/></g><circle cx="11" cy="11" r="3.6" fill="#f0f0f2"/><circle cx="11" cy="11" r="1.5" fill="#3b3b3b"/></svg>
<svg class="r" style="left:1140px;top:216.5px;" width="8" height="28" viewBox="0 0 8 28"><g fill="#bcbcbc"><rect x="0.3" y="0.40" width="1.1" height="1.1"/><rect x="6.3" y="0.40" width="1.1" height="1.1"/><rect x="3.3" y="1.76" width="1.1" height="1.1"/><rect x="0.3" y="3.12" width="1.1" height="1.1"/><rect x="6.3" y="3.12" width="1.1" height="1.1"/><rect x="3.3" y="4.48" width="1.1" height="1.1"/><rect x="0.3" y="5.84" width="1.1" height="1.1"/><rect x="6.3" y="5.84" width="1.1" height="1.1"/><rect x="3.3" y="7.20" width="1.1" height="1.1"/><rect x="0.3" y="8.56" width="1.1" height="1.1"/><rect x="6.3" y="8.56" width="1.1" height="1.1"/><rect x="3.3" y="9.92" width="1.1" height="1.1"/><rect x="0.3" y="11.28" width="1.1" height="1.1"/><rect x="6.3" y="11.28" width="1.1" height="1.1"/><rect x="3.3" y="12.64" width="1.1" height="1.1"/><rect x="0.3" y="14.00" width="1.1" height="1.1"/><rect x="6.3" y="14.00" width="1.1" height="1.1"/><rect x="3.3" y="15.36" width="1.1" height="1.1"/><rect x="0.3" y="16.72" width="1.1" height="1.1"/><rect x="6.3" y="16.72" width="1.1" height="1.1"/><rect x="3.3" y="18.08" width="1.1" height="1.1"/><rect x="0.3" y="19.44" width="1.1" height="1.1"/><rect x="6.3" y="19.44" width="1.1" height="1.1"/><rect x="3.3" y="20.80" width="1.1" height="1.1"/><rect x="0.3" y="22.16" width="1.1" height="1.1"/><rect x="6.3" y="22.16" width="1.1" height="1.1"/><rect x="3.3" y="23.52" width="1.1" height="1.1"/><rect x="0.3" y="24.88" width="1.1" height="1.1"/><rect x="6.3" y="24.88" width="1.1" height="1.1"/><rect x="3.3" y="26.24" width="1.1" height="1.1"/></g></svg>
<div class="r " style="left:1155px;top:214px;width:32px;height:32px;background:#e8f1fb;border:1px solid #7ab0e6;box-sizing:border-box;"></div>
<svg class="r" style="left:1160px;top:219.5px;" width="22" height="21" viewBox="0 0 22 21"><rect x="0.8" y="0.8" width="20.4" height="19.4" fill="#ffffff" stroke="#3b3b3b" stroke-width="1.6"/><path d="M4.6 1V20M1 4.2H21" stroke="#3b3b3b" stroke-width="1.2"/><g fill="#555555"><rect x="6" y="5.5" width="2.6" height="2.6"/><rect x="6" y="9.4" width="2.6" height="2.6"/><rect x="6" y="13.3" width="2.6" height="2.6"/><rect x="6" y="17.2" width="2.6" height="2.6"/><rect x="10" y="5.5" width="2.6" height="2.6"/><rect x="10" y="9.4" width="2.6" height="2.6"/><rect x="10" y="13.3" width="2.6" height="2.6"/><rect x="10" y="17.2" width="2.6" height="2.6"/><rect x="14" y="5.5" width="2.6" height="2.6"/><rect x="14" y="9.4" width="2.6" height="2.6"/><rect x="14" y="13.3" width="2.6" height="2.6"/><rect x="14" y="17.2" width="2.6" height="2.6"/><rect x="18" y="5.5" width="2.6" height="2.6"/><rect x="18" y="9.4" width="2.6" height="2.6"/><rect x="18" y="13.3" width="2.6" height="2.6"/><rect x="18" y="17.2" width="2.6" height="2.6"/></g></svg>
<svg class="r" style="left:1192px;top:219.5px;" width="22" height="21" viewBox="0 0 22 21"><rect x="0.8" y="0.8" width="20.4" height="19.4" fill="#ffffff" stroke="#3b3b3b" stroke-width="1.6"/><rect x="0.8" y="0.8" width="20.4" height="3.4" fill="#3b3b3b"/><g fill="none" stroke="#3b3b3b" stroke-width="1.3"><rect x="8.5" y="7.5" width="9" height="3"/><rect x="8.5" y="13.5" width="9" height="3"/></g><path d="M3.5 9H7M3.5 15H7" stroke="#3b3b3b" stroke-width="1.8"/></svg>
<svg class="r" style="left:1235px;top:216.5px;" width="8" height="28" viewBox="0 0 8 28"><g fill="#bcbcbc"><rect x="0.3" y="0.40" width="1.1" height="1.1"/><rect x="6.3" y="0.40" width="1.1" height="1.1"/><rect x="3.3" y="1.76" width="1.1" height="1.1"/><rect x="0.3" y="3.12" width="1.1" height="1.1"/><rect x="6.3" y="3.12" width="1.1" height="1.1"/><rect x="3.3" y="4.48" width="1.1" height="1.1"/><rect x="0.3" y="5.84" width="1.1" height="1.1"/><rect x="6.3" y="5.84" width="1.1" height="1.1"/><rect x="3.3" y="7.20" width="1.1" height="1.1"/><rect x="0.3" y="8.56" width="1.1" height="1.1"/><rect x="6.3" y="8.56" width="1.1" height="1.1"/><rect x="3.3" y="9.92" width="1.1" height="1.1"/><rect x="0.3" y="11.28" width="1.1" height="1.1"/><rect x="6.3" y="11.28" width="1.1" height="1.1"/><rect x="3.3" y="12.64" width="1.1" height="1.1"/><rect x="0.3" y="14.00" width="1.1" height="1.1"/><rect x="6.3" y="14.00" width="1.1" height="1.1"/><rect x="3.3" y="15.36" width="1.1" height="1.1"/><rect x="0.3" y="16.72" width="1.1" height="1.1"/><rect x="6.3" y="16.72" width="1.1" height="1.1"/><rect x="3.3" y="18.08" width="1.1" height="1.1"/><rect x="0.3" y="19.44" width="1.1" height="1.1"/><rect x="6.3" y="19.44" width="1.1" height="1.1"/><rect x="3.3" y="20.80" width="1.1" height="1.1"/><rect x="0.3" y="22.16" width="1.1" height="1.1"/><rect x="6.3" y="22.16" width="1.1" height="1.1"/><rect x="3.3" y="23.52" width="1.1" height="1.1"/><rect x="0.3" y="24.88" width="1.1" height="1.1"/><rect x="6.3" y="24.88" width="1.1" height="1.1"/><rect x="3.3" y="26.24" width="1.1" height="1.1"/></g></svg>
<svg class="r" style="left:1254.5px;top:219px;" width="23" height="22" viewBox="0 0 23 22"><g transform="translate(6.5,5.5)"><path fill="#3b3b3b" d="M0 0H16L9.6 7.5V16.5H6.4V7.5Z"/></g><rect x="0.5" y="0" width="3" height="2.4" fill="#0e5aa7"/><path d="M0.5 3.6H3.5V10L2 12.2L0.5 10Z" fill="#0e5aa7"/></svg>
<svg class="r" style="left:1285px;top:228.5px;" width="7" height="4" viewBox="0 0 7 4"><path fill="#555555" d="M0 0H7L3.5 3.6Z"/></svg>
<svg class="r" style="left:1303px;top:222px;" width="19" height="16" viewBox="0 0 19 16"><path fill="#b9b9b9" d="M0 0H19L11.2 7.5V15.5H7.8V7.5Z"/></svg>
<svg class="r" style="left:1333.5px;top:218.8px;" width="20" height="20" viewBox="0 0 20 20"><path fill="#3b3b3b" d="M5 0H20L14.2 6V13H11.6V6Z"/><path fill="#3b3b3b" d="M5.5 5.5L0.5 12H4L1.5 18.5L8.5 10.5H5L8 5.5Z"/></svg>
<svg class="r" style="left:1376px;top:216.5px;" width="8" height="28" viewBox="0 0 8 28"><g fill="#bcbcbc"><rect x="0.3" y="0.40" width="1.1" height="1.1"/><rect x="6.3" y="0.40" width="1.1" height="1.1"/><rect x="3.3" y="1.76" width="1.1" height="1.1"/><rect x="0.3" y="3.12" width="1.1" height="1.1"/><rect x="6.3" y="3.12" width="1.1" height="1.1"/><rect x="3.3" y="4.48" width="1.1" height="1.1"/><rect x="0.3" y="5.84" width="1.1" height="1.1"/><rect x="6.3" y="5.84" width="1.1" height="1.1"/><rect x="3.3" y="7.20" width="1.1" height="1.1"/><rect x="0.3" y="8.56" width="1.1" height="1.1"/><rect x="6.3" y="8.56" width="1.1" height="1.1"/><rect x="3.3" y="9.92" width="1.1" height="1.1"/><rect x="0.3" y="11.28" width="1.1" height="1.1"/><rect x="6.3" y="11.28" width="1.1" height="1.1"/><rect x="3.3" y="12.64" width="1.1" height="1.1"/><rect x="0.3" y="14.00" width="1.1" height="1.1"/><rect x="6.3" y="14.00" width="1.1" height="1.1"/><rect x="3.3" y="15.36" width="1.1" height="1.1"/><rect x="0.3" y="16.72" width="1.1" height="1.1"/><rect x="6.3" y="16.72" width="1.1" height="1.1"/><rect x="3.3" y="18.08" width="1.1" height="1.1"/><rect x="0.3" y="19.44" width="1.1" height="1.1"/><rect x="6.3" y="19.44" width="1.1" height="1.1"/><rect x="3.3" y="20.80" width="1.1" height="1.1"/><rect x="0.3" y="22.16" width="1.1" height="1.1"/><rect x="6.3" y="22.16" width="1.1" height="1.1"/><rect x="3.3" y="23.52" width="1.1" height="1.1"/><rect x="0.3" y="24.88" width="1.1" height="1.1"/><rect x="6.3" y="24.88" width="1.1" height="1.1"/><rect x="3.3" y="26.24" width="1.1" height="1.1"/></g></svg>
<svg class="r" style="left:1396px;top:219px;" width="22" height="21" viewBox="0 0 22 21"><path d="M0.5 4V18.5H19.5V3H9L7 0.8H2.5L0.5 3Z" fill="#e2e2e2"/><path d="M3 6H22L19.5 18.5H0.5Z" fill="#dcdcdc"/><path fill="#c8c8c8" d="M14.5 8L10 14.5H13L11 20.5L18 12H14.5L17.5 8Z"/></svg>
<svg class="r" style="left:1428px;top:220px;" width="23" height="20" viewBox="0 0 23 20"><rect x="0" y="7.2" width="9" height="5.4" fill="#3b3b3b"/><g fill="none" stroke="#3b3b3b" stroke-width="1.2"><path d="M9 10H17M10 10L17 2.5M10 10L17 17.5"/><rect x="17" y="1" width="5" height="3" fill="#ffffff"/><rect x="17" y="8.5" width="5" height="3" fill="#ffffff"/><rect x="17" y="16" width="5" height="3" fill="#ffffff"/></g></svg>
<svg class="r" style="left:1458px;top:228.5px;" width="7" height="4" viewBox="0 0 7 4"><path fill="#555555" d="M0 0H7L3.5 3.6Z"/></svg>
<svg class="r" style="left:446px;top:254px;" width="8" height="28" viewBox="0 0 8 28"><g fill="#bcbcbc"><rect x="0.3" y="0.40" width="1.1" height="1.1"/><rect x="6.3" y="0.40" width="1.1" height="1.1"/><rect x="3.3" y="1.76" width="1.1" height="1.1"/><rect x="0.3" y="3.12" width="1.1" height="1.1"/><rect x="6.3" y="3.12" width="1.1" height="1.1"/><rect x="3.3" y="4.48" width="1.1" height="1.1"/><rect x="0.3" y="5.84" width="1.1" height="1.1"/><rect x="6.3" y="5.84" width="1.1" height="1.1"/><rect x="3.3" y="7.20" width="1.1" height="1.1"/><rect x="0.3" y="8.56" width="1.1" height="1.1"/><rect x="6.3" y="8.56" width="1.1" height="1.1"/><rect x="3.3" y="9.92" width="1.1" height="1.1"/><rect x="0.3" y="11.28" width="1.1" height="1.1"/><rect x="6.3" y="11.28" width="1.1" height="1.1"/><rect x="3.3" y="12.64" width="1.1" height="1.1"/><rect x="0.3" y="14.00" width="1.1" height="1.1"/><rect x="6.3" y="14.00" width="1.1" height="1.1"/><rect x="3.3" y="15.36" width="1.1" height="1.1"/><rect x="0.3" y="16.72" width="1.1" height="1.1"/><rect x="6.3" y="16.72" width="1.1" height="1.1"/><rect x="3.3" y="18.08" width="1.1" height="1.1"/><rect x="0.3" y="19.44" width="1.1" height="1.1"/><rect x="6.3" y="19.44" width="1.1" height="1.1"/><rect x="3.3" y="20.80" width="1.1" height="1.1"/><rect x="0.3" y="22.16" width="1.1" height="1.1"/><rect x="6.3" y="22.16" width="1.1" height="1.1"/><rect x="3.3" y="23.52" width="1.1" height="1.1"/><rect x="0.3" y="24.88" width="1.1" height="1.1"/><rect x="6.3" y="24.88" width="1.1" height="1.1"/><rect x="3.3" y="26.24" width="1.1" height="1.1"/></g></svg>
<span class="t" style="left:465.80px;top:258.28px;font-size:14.5px;color:#adadad;letter-spacing:-0.262px;">Typeface:</span>
<div class="r " style="left:531px;top:253px;width:221px;height:29px;background:#f3f3f4;border:1px solid #c6c6c6;box-sizing:border-box;"></div>
<span class="t" style="left:535.60px;top:258.28px;font-size:14.5px;color:#5a5a5a;letter-spacing:-0.420px;">System</span>
<svg class="r" style="left:737.5px;top:265.5px;" width="9" height="5" viewBox="0 0 9 5"><path fill="#b9b9b9" d="M0 0H9L4.5 4.6Z"/></svg>
<svg class="r" style="left:768px;top:254px;" width="8" height="28" viewBox="0 0 8 28"><g fill="#bcbcbc"><rect x="0.3" y="0.40" width="1.1" height="1.1"/><rect x="6.3" y="0.40" width="1.1" height="1.1"/><rect x="3.3" y="1.76" width="1.1" height="1.1"/><rect x="0.3" y="3.12" width="1.1" height="1.1"/><rect x="6.3" y="3.12" width="1.1" height="1.1"/><rect x="3.3" y="4.48" width="1.1" height="1.1"/><rect x="0.3" y="5.84" width="1.1" height="1.1"/><rect x="6.3" y="5.84" width="1.1" height="1.1"/><rect x="3.3" y="7.20" width="1.1" height="1.1"/><rect x="0.3" y="8.56" width="1.1" height="1.1"/><rect x="6.3" y="8.56" width="1.1" height="1.1"/><rect x="3.3" y="9.92" width="1.1" height="1.1"/><rect x="0.3" y="11.28" width="1.1" height="1.1"/><rect x="6.3" y="11.28" width="1.1" height="1.1"/><rect x="3.3" y="12.64" width="1.1" height="1.1"/><rect x="0.3" y="14.00" width="1.1" height="1.1"/><rect x="6.3" y="14.00" width="1.1" height="1.1"/><rect x="3.3" y="15.36" width="1.1" height="1.1"/><rect x="0.3" y="16.72" width="1.1" height="1.1"/><rect x="6.3" y="16.72" width="1.1" height="1.1"/><rect x="3.3" y="18.08" width="1.1" height="1.1"/><rect x="0.3" y="19.44" width="1.1" height="1.1"/><rect x="6.3" y="19.44" width="1.1" height="1.1"/><rect x="3.3" y="20.80" width="1.1" height="1.1"/><rect x="0.3" y="22.16" width="1.1" height="1.1"/><rect x="6.3" y="22.16" width="1.1" height="1.1"/><rect x="3.3" y="23.52" width="1.1" height="1.1"/><rect x="0.3" y="24.88" width="1.1" height="1.1"/><rect x="6.3" y="24.88" width="1.1" height="1.1"/><rect x="3.3" y="26.24" width="1.1" height="1.1"/></g></svg>
<svg class="r" style="left:792.5px;top:260px;" width="14" height="17" viewBox="0 0 14 17"><text x="-0.6" y="15.6" font-family="Liberation Sans,sans-serif" font-weight="bold" font-size="21" fill="#b9b9b9">B</text></svg>
<svg class="r" style="left:825px;top:260px;" width="13" height="16" viewBox="0 0 13 16"><g stroke="#b9b9b9" stroke-width="2.4" fill="none"><path d="M4 1H12M0 15H8M8.3 1L3.7 15"/></g></svg>
<svg class="r" style="left:856px;top:259px;" width="14" height="19" viewBox="0 0 14 19"><g stroke="#b9b9b9" fill="none"><path d="M1.5 0V8.5C1.5 14.5 12.5 14.5 12.5 8.5V0" stroke-width="2.2"/><path d="M0 17H14" stroke-width="1.8"/></g></svg>
<div class="r " style="left:882px;top:254px;width:1px;height:29px;background:#c9c9c9;"></div>
<svg class="r" style="left:892px;top:257px;" width="21" height="20" viewBox="0 0 21 20"><g stroke="#b5b5b5" fill="none"><path d="M1 0V20" stroke-width="2"/><path d="M4 6H21M4 14H17" stroke-width="2.6"/></g></svg>
<svg class="r" style="left:924px;top:257px;" width="22" height="20" viewBox="0 0 22 20"><g stroke="#b5b5b5" fill="none"><path d="M1 0V20M21 0V20" stroke-width="2"/><path d="M4 6H18M4 14H18" stroke-width="2.6"/></g></svg>
<svg class="r" style="left:957px;top:257px;" width="21" height="20" viewBox="0 0 21 20"><g stroke="#b5b5b5" fill="none"><path d="M20 0V20" stroke-width="2"/><path d="M0 6H17M4 14H17" stroke-width="2.6"/></g></svg>
<div class="r " style="left:986px;top:254px;width:1px;height:29px;background:#c9c9c9;"></div>
<svg class="r" style="left:996px;top:257.5px;" width="22" height="20" viewBox="0 0 22 20"><g fill="#b5b5b5" font-family="Liberation Sans,sans-serif" font-size="6.5" font-weight="bold"><text x="0" y="5">1</text><text x="0" y="12">2</text><text x="0" y="19">3</text></g><path d="M6.5 2.5H22M6.5 9.5H22M6.5 16.5H22" stroke="#b5b5b5" stroke-width="1.1"/></svg>
<svg class="r" style="left:1026px;top:265.5px;" width="7" height="4" viewBox="0 0 7 4"><path fill="#c0c0c0" d="M0 0H7L3.5 3.6Z"/></svg>
<svg class="r" style="left:1042px;top:258px;" width="22" height="18" viewBox="0 0 22 18"><g fill="none" stroke="#b5b5b5"><rect x="0.6" y="0.6" width="3.8" height="2.8" stroke-width="1.2"/><rect x="6.6" y="6.6" width="3.8" height="3.8" stroke-width="1.2"/><rect x="6.6" y="13.6" width="3.8" height="3.8" stroke-width="1.2"/><path d="M7 2H22M13 8.5H22M13 15.5H22" stroke-width="2.8"/></g></svg>
<svg class="r" style="left:1072px;top:265.5px;" width="7" height="4" viewBox="0 0 7 4"><path fill="#c0c0c0" d="M0 0H7L3.5 3.6Z"/></svg>
<div class="r " style="left:1086px;top:254px;width:1px;height:29px;background:#c9c9c9;"></div>
<svg class="r" style="left:1097.5px;top:257.5px;" width="19" height="21" viewBox="0 0 19 21"><path d="M0.5 0.5L0.8 9.2L9 8Z" fill="#b5b5b5"/><path d="M3.5 7C8 -1 18.5 2.5 17 10C16 14 11 17 6.5 20" fill="none" stroke="#b5b5b5" stroke-width="3.1"/></svg>
<svg class="r" style="left:1129.5px;top:257.5px;" width="19" height="21" viewBox="0 0 19 21"><g transform="translate(19,0) scale(-1,1)"><path d="M0.5 0.5L0.8 9.2L9 8Z" fill="#b5b5b5"/><path d="M3.5 7C8 -1 18.5 2.5 17 10C16 14 11 17 6.5 20" fill="none" stroke="#b5b5b5" stroke-width="3.1"/></g></svg>
<div class="r " style="left:1158px;top:254px;width:1px;height:29px;background:#c9c9c9;"></div>
<svg class="r" style="left:1170px;top:259.5px;" width="18" height="17" viewBox="0 0 18 17"><g fill="#b5b5b5"><rect x="0" y="0.5" width="18" height="3"/><rect x="7.3" y="0.5" width="3.5" height="16.5"/><rect x="2.5" y="8" width="13" height="2.6"/></g></svg>
<svg class="r" style="left:1201px;top:258px;" width="21" height="21" viewBox="0 0 21 21"><path d="M1.2 1L14.5 15.5M14.5 1L1.2 15.5" stroke="#b5b5b5" stroke-width="2.9" fill="none"/><text x="13.2" y="20.3" font-family="Liberation Sans,sans-serif" font-size="11.5" fill="#b5b5b5">2</text></svg>
<svg class="r" style="left:1233px;top:256.5px;" width="22" height="22" viewBox="0 0 22 22"><path d="M1.2 5.5L15 20M15 5.5L1.2 20" stroke="#b5b5b5" stroke-width="2.9" fill="none"/><text x="14.5" y="9.6" font-family="Liberation Sans,sans-serif" font-size="11.5" fill="#b5b5b5">2</text></svg>
<div class="r " style="left:1262px;top:254px;width:1px;height:29px;background:#c9c9c9;"></div>
<svg class="r" style="left:1272px;top:259.5px;" width="22" height="16" viewBox="0 0 22 16"><g stroke="#b5b5b5" fill="none"><path d="M11 1.2H22M11 14.8H22" stroke-width="2"/><path d="M0 5.4H10.5M0 10.6H10.5" stroke-width="2.6"/><path d="M12.5 8H22M16.5 4L12.5 8L16.5 12" stroke-width="1.7"/></g></svg>
<svg class="r" style="left:1304px;top:259.5px;" width="22" height="16" viewBox="0 0 22 16"><g stroke="#b5b5b5" fill="none"><path d="M0 1.2H11M0 14.8H11" stroke-width="2"/><path d="M11.5 5.4H22M11.5 10.6H22" stroke-width="2.6"/><path d="M0 8H9.5M5.5 4L9.5 8L5.5 12" stroke-width="1.7"/></g></svg>
<div class="r " style="left:1334px;top:254px;width:1px;height:29px;background:#c9c9c9;"></div>
<svg class="r" style="left:1345px;top:257px;" width="21" height="21" viewBox="0 0 21 21"><g stroke="#b5b5b5" fill="none"><circle cx="13.5" cy="7.7" r="6.3" stroke-width="1.7"/><path d="M8.6 12.6L1.6 19.6" stroke-width="3.2"/></g></svg>
<svg class="r" style="left:1375.5px;top:256px;" width="23" height="23" viewBox="0 0 23 23"><text x="9.4" y="8.6" font-family="Liberation Sans,sans-serif" font-size="11.5" letter-spacing="-0.5" fill="#b5b5b5">ab</text><rect x="0.5" y="13.4" width="15.5" height="9.2" fill="#c0c0c0"/><text x="2.3" y="21.4" font-family="Liberation Sans,sans-serif" font-size="10.5" font-weight="bold" letter-spacing="-0.3" fill="#f3f3f4">ac</text><path d="M8.5 3H3V10.5M0.3 7.6L3 11L5.7 7.6" fill="none" stroke="#b5b5b5" stroke-width="1.6"/></svg>
<div class="r " style="left:1406px;top:254px;width:1px;height:29px;background:#c9c9c9;"></div>
<svg class="r" style="left:1416.5px;top:258.5px;" width="21" height="19" viewBox="0 0 21 19"><rect x="2" y="2" width="17" height="15" fill="#eaeaea"/><g stroke="#b5b5b5" fill="none" stroke-width="2.5"><path d="M1.2 11V1.2H10.5"/><path d="M19.8 9V17.8H17"/></g><g fill="#b5b5b5"><rect x="0" y="15.3" width="2.6" height="2.6"/><rect x="4.4" y="15.3" width="2.6" height="2.6"/><rect x="8.8" y="15.3" width="2.6" height="2.6"/><rect x="13.2" y="15.3" width="2.6" height="2.6"/></g><path d="M7.5 12.2L8.6 9L14.5 3L17 5.5L11 11.4Z" fill="#c2c2c2"/></svg>
<svg class="r" style="left:1446px;top:265.5px;" width="7" height="4" viewBox="0 0 7 4"><path fill="#c8c8c8" d="M0 0H7L3.5 3.6Z"/></svg>
<svg class="r" style="left:1464px;top:257px;" width="20" height="23" viewBox="0 0 20 23"><text x="-0.2" y="21.4" font-family="Liberation Sans,sans-serif" font-size="29.5" fill="#b9b9b9">A</text></svg>
<svg class="r" style="left:1095px;top:292px;" width="8" height="27" viewBox="0 0 8 27"><g fill="#bcbcbc"><rect x="0.3" y="0.40" width="1.1" height="1.1"/><rect x="6.3" y="0.40" width="1.1" height="1.1"/><rect x="3.3" y="1.76" width="1.1" height="1.1"/><rect x="0.3" y="3.12" width="1.1" height="1.1"/><rect x="6.3" y="3.12" width="1.1" height="1.1"/><rect x="3.3" y="4.48" width="1.1" height="1.1"/><rect x="0.3" y="5.84" width="1.1" height="1.1"/><rect x="6.3" y="5.84" width="1.1" height="1.1"/><rect x="3.3" y="7.20" width="1.1" height="1.1"/><rect x="0.3" y="8.56" width="1.1" height="1.1"/><rect x="6.3" y="8.56" width="1.1" height="1.1"/><rect x="3.3" y="9.92" width="1.1" height="1.1"/><rect x="0.3" y="11.28" width="1.1" height="1.1"/><rect x="6.3" y="11.28" width="1.1" height="1.1"/><rect x="3.3" y="12.64" width="1.1" height="1.1"/><rect x="0.3" y="14.00" width="1.1" height="1.1"/><rect x="6.3" y="14.00" width="1.1" height="1.1"/><rect x="3.3" y="15.36" width="1.1" height="1.1"/><rect x="0.3" y="16.72" width="1.1" height="1.1"/><rect x="6.3" y="16.72" width="1.1" height="1.1"/><rect x="3.3" y="18.08" width="1.1" height="1.1"/><rect x="0.3" y="19.44" width="1.1" height="1.1"/><rect x="6.3" y="19.44" width="1.1" height="1.1"/><rect x="3.3" y="20.80" width="1.1" height="1.1"/><rect x="0.3" y="22.16" width="1.1" height="1.1"/><rect x="6.3" y="22.16" width="1.1" height="1.1"/><rect x="3.3" y="23.52" width="1.1" height="1.1"/><rect x="0.3" y="24.88" width="1.1" height="1.1"/><rect x="6.3" y="24.88" width="1.1" height="1.1"/></g></svg>
<div class="r " style="left:1110px;top:290px;width:414px;height:32px;background:#ffffff;border:1px solid #7a7a7a;box-sizing:border-box;"></div>
<div class="r " style="left:434px;top:325px;width:1192px;height:1px;background:#a0a0a0;"></div>
<div class="r " style="left:434px;top:326px;width:1192px;height:1px;background:#ffffff;"></div><span class="t" style="left:439.30px;top:333.18px;font-size:14.5px;color:#111111;letter-spacing:0.038px;">List of Tables</span>
<div class="r " style="left:434px;top:351px;width:339px;height:457px;background:#ffffff;"></div>
<div class="r " style="left:434px;top:351px;width:339px;height:1px;background:#828282;"></div>
<div class="r " style="left:772px;top:351px;width:1px;height:457px;background:#8c8c8c;"></div>
<div class="r " style="left:773px;top:326px;width:1px;height:25px;background:#fbfbfb;"></div>
<div class="r " style="left:773px;top:351px;width:4px;height:457px;background:#ebebeb;"></div>
<div class="r " style="left:776px;top:326px;width:1px;height:25px;background:#9c9c9c;"></div>
<svg class="r" style="left:445px;top:355px;" width="18" height="18" viewBox="0 0 18 18"><rect x="0.5" y="0.5" width="17" height="17" fill="#ffffff" stroke="#333333"/><g fill="#f4f4f4" stroke="#333333" stroke-width="1"><rect x="8" y="3.5" width="6.5" height="6.5"/><rect x="5.5" y="5.5" width="6.5" height="6.5"/><rect x="3.5" y="7.5" width="6.5" height="6.5"/></g></svg>
<span class="t" style="left:469.70px;top:354.68px;font-size:14.5px;color:#111111;letter-spacing:0.020px;">Tables</span>
<div class="r " style="left:449px;top:375px;width:1px;height:264px;background:repeating-linear-gradient(to bottom,#222222 0 1px,transparent 1px 2px);"></div>
<svg class="r" style="left:444px;top:382px;" width="11" height="11" viewBox="0 0 11 11"><rect x="0.5" y="0.5" width="10" height="10" rx="1" fill="#f4f4f4" stroke="#9a9a9a"/><path d="M2.5 5.5H8.5M5.5 2.5V8.5" stroke="#2b3d8c" stroke-width="1" fill="none"/></svg>
<svg class="r" style="left:461px;top:376.7px;" width="16" height="18" viewBox="0 0 16 18"><rect x="0" y="0" width="16" height="18" fill="#3b3b3b"/><g fill="#ffffff"><rect x="1.3" y="2.6" width="3.6" height="2.7"/><rect x="1.3" y="6.5" width="3.6" height="2.7"/><rect x="1.3" y="10.4" width="3.6" height="2.7"/><rect x="1.3" y="14.3" width="3.6" height="2.7"/><rect x="6.2" y="2.6" width="3.6" height="2.7"/><rect x="6.2" y="6.5" width="3.6" height="2.7"/><rect x="6.2" y="10.4" width="3.6" height="2.7"/><rect x="6.2" y="14.3" width="3.6" height="2.7"/><rect x="11.1" y="2.6" width="3.6" height="2.7"/><rect x="11.1" y="6.5" width="3.6" height="2.7"/><rect x="11.1" y="10.4" width="3.6" height="2.7"/><rect x="11.1" y="14.3" width="3.6" height="2.7"/></g></svg>
<span class="t" style="left:484.30px;top:376.68px;font-size:14.5px;color:#111111;letter-spacing:0.167px;">Code Maintenance Code Table - 0254</span>
<svg class="r" style="left:444px;top:404px;" width="11" height="11" viewBox="0 0 11 11"><rect x="0.5" y="0.5" width="10" height="10" rx="1" fill="#f4f4f4" stroke="#9a9a9a"/><path d="M2.5 5.5H8.5M5.5 2.5V8.5" stroke="#2b3d8c" stroke-width="1" fill="none"/></svg>
<svg class="r" style="left:461px;top:398.7px;" width="16" height="18" viewBox="0 0 16 18"><rect x="0" y="0" width="16" height="18" fill="#3b3b3b"/><g fill="#ffffff"><rect x="1.3" y="2.6" width="3.6" height="2.7"/><rect x="1.3" y="6.5" width="3.6" height="2.7"/><rect x="1.3" y="10.4" width="3.6" height="2.7"/><rect x="1.3" y="14.3" width="3.6" height="2.7"/><rect x="6.2" y="2.6" width="3.6" height="2.7"/><rect x="6.2" y="6.5" width="3.6" height="2.7"/><rect x="6.2" y="10.4" width="3.6" height="2.7"/><rect x="6.2" y="14.3" width="3.6" height="2.7"/><rect x="11.1" y="2.6" width="3.6" height="2.7"/><rect x="11.1" y="6.5" width="3.6" height="2.7"/><rect x="11.1" y="10.4" width="3.6" height="2.7"/><rect x="11.1" y="14.3" width="3.6" height="2.7"/></g></svg>
<span class="t" style="left:484.30px;top:398.68px;font-size:14.5px;color:#111111;letter-spacing:0.188px;">Code Maintenance Type Table - 0253</span>
<svg class="r" style="left:444px;top:426px;" width="11" height="11" viewBox="0 0 11 11"><rect x="0.5" y="0.5" width="10" height="10" rx="1" fill="#f4f4f4" stroke="#9a9a9a"/><path d="M2.5 5.5H8.5M5.5 2.5V8.5" stroke="#2b3d8c" stroke-width="1" fill="none"/></svg>
<svg class="r" style="left:461px;top:420.7px;" width="16" height="18" viewBox="0 0 16 18"><rect x="0" y="0" width="16" height="18" fill="#3b3b3b"/><g fill="#ffffff"><rect x="1.3" y="2.6" width="3.6" height="2.7"/><rect x="1.3" y="6.5" width="3.6" height="2.7"/><rect x="1.3" y="10.4" width="3.6" height="2.7"/><rect x="1.3" y="14.3" width="3.6" height="2.7"/><rect x="6.2" y="2.6" width="3.6" height="2.7"/><rect x="6.2" y="6.5" width="3.6" height="2.7"/><rect x="6.2" y="10.4" width="3.6" height="2.7"/><rect x="6.2" y="14.3" width="3.6" height="2.7"/><rect x="11.1" y="2.6" width="3.6" height="2.7"/><rect x="11.1" y="6.5" width="3.6" height="2.7"/><rect x="11.1" y="10.4" width="3.6" height="2.7"/><rect x="11.1" y="14.3" width="3.6" height="2.7"/></g></svg>
<span class="t" style="left:484.30px;top:420.68px;font-size:14.5px;color:#111111;letter-spacing:-0.067px;">Customers - 0025</span>
<svg class="r" style="left:444px;top:448px;" width="11" height="11" viewBox="0 0 11 11"><rect x="0.5" y="0.5" width="10" height="10" rx="1" fill="#f4f4f4" stroke="#9a9a9a"/><path d="M2.5 5.5H8.5M5.5 2.5V8.5" stroke="#2b3d8c" stroke-width="1" fill="none"/></svg>
<svg class="r" style="left:461px;top:442.7px;" width="16" height="18" viewBox="0 0 16 18"><rect x="0" y="0" width="16" height="18" fill="#3b3b3b"/><g fill="#ffffff"><rect x="1.3" y="2.6" width="3.6" height="2.7"/><rect x="1.3" y="6.5" width="3.6" height="2.7"/><rect x="1.3" y="10.4" width="3.6" height="2.7"/><rect x="1.3" y="14.3" width="3.6" height="2.7"/><rect x="6.2" y="2.6" width="3.6" height="2.7"/><rect x="6.2" y="6.5" width="3.6" height="2.7"/><rect x="6.2" y="10.4" width="3.6" height="2.7"/><rect x="6.2" y="14.3" width="3.6" height="2.7"/><rect x="11.1" y="2.6" width="3.6" height="2.7"/><rect x="11.1" y="6.5" width="3.6" height="2.7"/><rect x="11.1" y="10.4" width="3.6" height="2.7"/><rect x="11.1" y="14.3" width="3.6" height="2.7"/></g></svg>
<span class="t" style="left:484.30px;top:442.68px;font-size:14.5px;color:#111111;letter-spacing:-0.029px;">Inventory Parts - 0022</span>
<svg class="r" style="left:444px;top:470px;" width="11" height="11" viewBox="0 0 11 11"><rect x="0.5" y="0.5" width="10" height="10" rx="1" fill="#f4f4f4" stroke="#9a9a9a"/><path d="M2.5 5.5H8.5M5.5 2.5V8.5" stroke="#2b3d8c" stroke-width="1" fill="none"/></svg>
<svg class="r" style="left:461px;top:464.7px;" width="16" height="18" viewBox="0 0 16 18"><rect x="0" y="0" width="16" height="18" fill="#3b3b3b"/><g fill="#ffffff"><rect x="1.3" y="2.6" width="3.6" height="2.7"/><rect x="1.3" y="6.5" width="3.6" height="2.7"/><rect x="1.3" y="10.4" width="3.6" height="2.7"/><rect x="1.3" y="14.3" width="3.6" height="2.7"/><rect x="6.2" y="2.6" width="3.6" height="2.7"/><rect x="6.2" y="6.5" width="3.6" height="2.7"/><rect x="6.2" y="10.4" width="3.6" height="2.7"/><rect x="6.2" y="14.3" width="3.6" height="2.7"/><rect x="11.1" y="2.6" width="3.6" height="2.7"/><rect x="11.1" y="6.5" width="3.6" height="2.7"/><rect x="11.1" y="10.4" width="3.6" height="2.7"/><rect x="11.1" y="14.3" width="3.6" height="2.7"/></g></svg>
<span class="t" style="left:484.30px;top:464.68px;font-size:14.5px;color:#111111;letter-spacing:0.206px;">Order Detail - 0031</span>
<svg class="r" style="left:444px;top:492px;" width="11" height="11" viewBox="0 0 11 11"><rect x="0.5" y="0.5" width="10" height="10" rx="1" fill="#f4f4f4" stroke="#9a9a9a"/><path d="M2.5 5.5H8.5M5.5 2.5V8.5" stroke="#2b3d8c" stroke-width="1" fill="none"/></svg>
<svg class="r" style="left:461px;top:486.7px;" width="16" height="18" viewBox="0 0 16 18"><rect x="0" y="0" width="16" height="18" fill="#3b3b3b"/><g fill="#ffffff"><rect x="1.3" y="2.6" width="3.6" height="2.7"/><rect x="1.3" y="6.5" width="3.6" height="2.7"/><rect x="1.3" y="10.4" width="3.6" height="2.7"/><rect x="1.3" y="14.3" width="3.6" height="2.7"/><rect x="6.2" y="2.6" width="3.6" height="2.7"/><rect x="6.2" y="6.5" width="3.6" height="2.7"/><rect x="6.2" y="10.4" width="3.6" height="2.7"/><rect x="6.2" y="14.3" width="3.6" height="2.7"/><rect x="11.1" y="2.6" width="3.6" height="2.7"/><rect x="11.1" y="6.5" width="3.6" height="2.7"/><rect x="11.1" y="10.4" width="3.6" height="2.7"/><rect x="11.1" y="14.3" width="3.6" height="2.7"/></g></svg>
<span class="t" style="left:484.30px;top:486.68px;font-size:14.5px;color:#111111;letter-spacing:0.057px;">Order Entry System Table - 0020</span>
<svg class="r" style="left:444px;top:514px;" width="11" height="11" viewBox="0 0 11 11"><rect x="0.5" y="0.5" width="10" height="10" rx="1" fill="#f4f4f4" stroke="#9a9a9a"/><path d="M2.5 5.5H8.5M5.5 2.5V8.5" stroke="#2b3d8c" stroke-width="1" fill="none"/></svg>
<svg class="r" style="left:461px;top:508.7px;" width="16" height="18" viewBox="0 0 16 18"><rect x="0" y="0" width="16" height="18" fill="#3b3b3b"/><g fill="#ffffff"><rect x="1.3" y="2.6" width="3.6" height="2.7"/><rect x="1.3" y="6.5" width="3.6" height="2.7"/><rect x="1.3" y="10.4" width="3.6" height="2.7"/><rect x="1.3" y="14.3" width="3.6" height="2.7"/><rect x="6.2" y="2.6" width="3.6" height="2.7"/><rect x="6.2" y="6.5" width="3.6" height="2.7"/><rect x="6.2" y="10.4" width="3.6" height="2.7"/><rect x="6.2" y="14.3" width="3.6" height="2.7"/><rect x="11.1" y="2.6" width="3.6" height="2.7"/><rect x="11.1" y="6.5" width="3.6" height="2.7"/><rect x="11.1" y="10.4" width="3.6" height="2.7"/><rect x="11.1" y="14.3" width="3.6" height="2.7"/></g></svg>
<span class="t" style="left:484.30px;top:508.68px;font-size:14.5px;color:#111111;letter-spacing:0.139px;">Order Header - 0030</span>
<svg class="r" style="left:444px;top:536px;" width="11" height="11" viewBox="0 0 11 11"><rect x="0.5" y="0.5" width="10" height="10" rx="1" fill="#f4f4f4" stroke="#9a9a9a"/><path d="M2.5 5.5H8.5M5.5 2.5V8.5" stroke="#2b3d8c" stroke-width="1" fill="none"/></svg>
<svg class="r" style="left:461px;top:530.7px;" width="16" height="18" viewBox="0 0 16 18"><rect x="0" y="0" width="16" height="18" fill="#3b3b3b"/><g fill="#ffffff"><rect x="1.3" y="2.6" width="3.6" height="2.7"/><rect x="1.3" y="6.5" width="3.6" height="2.7"/><rect x="1.3" y="10.4" width="3.6" height="2.7"/><rect x="1.3" y="14.3" width="3.6" height="2.7"/><rect x="6.2" y="2.6" width="3.6" height="2.7"/><rect x="6.2" y="6.5" width="3.6" height="2.7"/><rect x="6.2" y="10.4" width="3.6" height="2.7"/><rect x="6.2" y="14.3" width="3.6" height="2.7"/><rect x="11.1" y="2.6" width="3.6" height="2.7"/><rect x="11.1" y="6.5" width="3.6" height="2.7"/><rect x="11.1" y="10.4" width="3.6" height="2.7"/><rect x="11.1" y="14.3" width="3.6" height="2.7"/></g></svg>
<span class="t" style="left:484.30px;top:530.68px;font-size:14.5px;color:#111111;letter-spacing:-0.094px;">Sales People - 0027</span>
<svg class="r" style="left:444px;top:558px;" width="11" height="11" viewBox="0 0 11 11"><rect x="0.5" y="0.5" width="10" height="10" rx="1" fill="#f4f4f4" stroke="#9a9a9a"/><path d="M2.5 5.5H8.5M5.5 2.5V8.5" stroke="#2b3d8c" stroke-width="1" fill="none"/></svg>
<svg class="r" style="left:461px;top:552.7px;" width="16" height="18" viewBox="0 0 16 18"><rect x="0" y="0" width="16" height="18" fill="#3b3b3b"/><g fill="#ffffff"><rect x="1.3" y="2.6" width="3.6" height="2.7"/><rect x="1.3" y="6.5" width="3.6" height="2.7"/><rect x="1.3" y="10.4" width="3.6" height="2.7"/><rect x="1.3" y="14.3" width="3.6" height="2.7"/><rect x="6.2" y="2.6" width="3.6" height="2.7"/><rect x="6.2" y="6.5" width="3.6" height="2.7"/><rect x="6.2" y="10.4" width="3.6" height="2.7"/><rect x="6.2" y="14.3" width="3.6" height="2.7"/><rect x="11.1" y="2.6" width="3.6" height="2.7"/><rect x="11.1" y="6.5" width="3.6" height="2.7"/><rect x="11.1" y="10.4" width="3.6" height="2.7"/><rect x="11.1" y="14.3" width="3.6" height="2.7"/></g></svg>
<div class="r " style="left:482px;top:551px;width:112px;height:22px;background:#0078d7;"></div>
<span class="t" style="left:484.30px;top:552.68px;font-size:14.5px;color:#ffffff;letter-spacing:0.362px;font-weight:bold;">Vendors - 0021</span>
<svg class="r" style="left:444px;top:580px;" width="11" height="11" viewBox="0 0 11 11"><rect x="0.5" y="0.5" width="10" height="10" rx="1" fill="#f4f4f4" stroke="#9a9a9a"/><path d="M2.5 5.5H8.5M5.5 2.5V8.5" stroke="#2b3d8c" stroke-width="1" fill="none"/></svg>
<svg class="r" style="left:461px;top:574.7px;" width="16" height="18" viewBox="0 0 16 18"><rect x="0" y="0" width="16" height="18" fill="#3b3b3b"/><g fill="#ffffff"><rect x="1.3" y="2.6" width="3.6" height="2.7"/><rect x="1.3" y="6.5" width="3.6" height="2.7"/><rect x="1.3" y="10.4" width="3.6" height="2.7"/><rect x="1.3" y="14.3" width="3.6" height="2.7"/><rect x="6.2" y="2.6" width="3.6" height="2.7"/><rect x="6.2" y="6.5" width="3.6" height="2.7"/><rect x="6.2" y="10.4" width="3.6" height="2.7"/><rect x="6.2" y="14.3" width="3.6" height="2.7"/><rect x="11.1" y="2.6" width="3.6" height="2.7"/><rect x="11.1" y="6.5" width="3.6" height="2.7"/><rect x="11.1" y="10.4" width="3.6" height="2.7"/><rect x="11.1" y="14.3" width="3.6" height="2.7"/></g></svg>
<span class="t" style="left:484.30px;top:574.68px;font-size:14.5px;color:#111111;letter-spacing:0.234px;">Web Application Session Table - 0263</span>
<svg class="r" style="left:444px;top:602px;" width="11" height="11" viewBox="0 0 11 11"><rect x="0.5" y="0.5" width="10" height="10" rx="1" fill="#f4f4f4" stroke="#9a9a9a"/><path d="M2.5 5.5H8.5M5.5 2.5V8.5" stroke="#2b3d8c" stroke-width="1" fill="none"/></svg>
<svg class="r" style="left:461px;top:596.7px;" width="16" height="18" viewBox="0 0 16 18"><rect x="0" y="0" width="16" height="18" fill="#3b3b3b"/><g fill="#ffffff"><rect x="1.3" y="2.6" width="3.6" height="2.7"/><rect x="1.3" y="6.5" width="3.6" height="2.7"/><rect x="1.3" y="10.4" width="3.6" height="2.7"/><rect x="1.3" y="14.3" width="3.6" height="2.7"/><rect x="6.2" y="2.6" width="3.6" height="2.7"/><rect x="6.2" y="6.5" width="3.6" height="2.7"/><rect x="6.2" y="10.4" width="3.6" height="2.7"/><rect x="6.2" y="14.3" width="3.6" height="2.7"/><rect x="11.1" y="2.6" width="3.6" height="2.7"/><rect x="11.1" y="6.5" width="3.6" height="2.7"/><rect x="11.1" y="10.4" width="3.6" height="2.7"/><rect x="11.1" y="14.3" width="3.6" height="2.7"/></g></svg>
<span class="t" style="left:484.30px;top:596.68px;font-size:14.5px;color:#111111;letter-spacing:0.297px;">Web Application User Table - 0264</span>
<svg class="r" style="left:444px;top:624px;" width="11" height="11" viewBox="0 0 11 11"><rect x="0.5" y="0.5" width="10" height="10" rx="1" fill="#f4f4f4" stroke="#9a9a9a"/><path d="M2.5 5.5H8.5M5.5 2.5V8.5" stroke="#2b3d8c" stroke-width="1" fill="none"/></svg>
<svg class="r" style="left:461px;top:618.7px;" width="16" height="18" viewBox="0 0 16 18"><rect x="0" y="0" width="16" height="18" fill="#3b3b3b"/><g fill="#ffffff"><rect x="1.3" y="2.6" width="3.6" height="2.7"/><rect x="1.3" y="6.5" width="3.6" height="2.7"/><rect x="1.3" y="10.4" width="3.6" height="2.7"/><rect x="1.3" y="14.3" width="3.6" height="2.7"/><rect x="6.2" y="2.6" width="3.6" height="2.7"/><rect x="6.2" y="6.5" width="3.6" height="2.7"/><rect x="6.2" y="10.4" width="3.6" height="2.7"/><rect x="6.2" y="14.3" width="3.6" height="2.7"/><rect x="11.1" y="2.6" width="3.6" height="2.7"/><rect x="11.1" y="6.5" width="3.6" height="2.7"/><rect x="11.1" y="10.4" width="3.6" height="2.7"/><rect x="11.1" y="14.3" width="3.6" height="2.7"/></g></svg>
<span class="t" style="left:484.30px;top:618.68px;font-size:14.5px;color:#111111;letter-spacing:0.052px;">WebAppServerProps - 0265</span>
<svg class="r" style="left:445px;top:641px;" width="18" height="18" viewBox="0 0 18 18"><rect x="0.5" y="0.5" width="17" height="17" fill="#ffffff" stroke="#333333"/><g fill="#f4f4f4" stroke="#333333" stroke-width="1"><rect x="8" y="3.5" width="6.5" height="6.5"/><rect x="5.5" y="5.5" width="6.5" height="6.5"/><rect x="3.5" y="7.5" width="6.5" height="6.5"/></g></svg>
<span class="t" style="left:469.60px;top:640.68px;font-size:14.5px;color:#111111;letter-spacing:-0.163px;">Tables, Opened As...</span>
<span class="t" style="left:781.30px;top:333.18px;font-size:14.5px;color:#111111;letter-spacing:0.293px;">Table Attributes</span>
<div class="r " style="left:777px;top:350px;width:849px;height:1px;background:#ffffff;"></div>
<div class="r " style="left:777px;top:379px;width:849px;height:428px;background:#ffffff;"></div>
<div class="r " style="left:780.5px;top:381px;width:842.5px;height:423px;background:#f0f0f0;"></div>
<div class="r " style="left:849px;top:354px;width:86px;height:25px;background:#f0f0f0;border:1px solid #dadada;border-bottom:none;box-sizing:border-box;"></div>
<div class="r " style="left:934px;top:354px;width:97px;height:25px;background:#f0f0f0;border:1px solid #dadada;border-bottom:none;box-sizing:border-box;"></div>
<div class="r " style="left:1030px;top:354px;width:134px;height:25px;background:#f0f0f0;border:1px solid #dadada;border-bottom:none;box-sizing:border-box;"></div>
<div class="r " style="left:1163px;top:354px;width:102px;height:25px;background:#f0f0f0;border:1px solid #dadada;border-bottom:none;box-sizing:border-box;"></div>
<div class="r " style="left:777px;top:351.5px;width:72.3px;height:28.5px;background:#ffffff;"></div>
<svg class="r" style="left:785px;top:355px;" width="18" height="18" viewBox="0 0 18 18"><rect x="0.7" y="0.7" width="16.6" height="16.6" fill="#ffffff" stroke="#333333" stroke-width="1.4"/><path d="M1 3.4H17" stroke="#333333" stroke-width="1.2"/><path d="M13 0.5V3.4" stroke="#333333" stroke-width="1"/><path d="M5.2 7.2C5.2 5.2 12.8 5.2 12.8 7.2V12.6C12.8 14.8 5.2 14.8 5.2 12.6Z" fill="#333333"/><ellipse cx="9" cy="7" rx="3" ry="1" fill="#eeeeee"/></svg>
<span class="t" style="left:810.80px;top:354.68px;font-size:14.5px;color:#111111;letter-spacing:-0.500px;">Data</span>
<svg class="r" style="left:855px;top:357px;" width="17" height="17" viewBox="0 0 17 17"><rect x="4" y="6" width="13" height="11" fill="#444444"/><g fill="#ffffff"><rect x="5.3" y="8.2" width="2.6" height="2.4"/><rect x="5.3" y="11.4" width="2.6" height="2.4"/><rect x="5.3" y="14.6" width="2.6" height="2.4"/><rect x="9.2" y="8.2" width="2.6" height="2.4"/><rect x="9.2" y="11.4" width="2.6" height="2.4"/><rect x="9.2" y="14.6" width="2.6" height="2.4"/><rect x="13.1" y="8.2" width="2.6" height="2.4"/><rect x="13.1" y="11.4" width="2.6" height="2.4"/><rect x="13.1" y="14.6" width="2.6" height="2.4"/></g><circle cx="3.5" cy="3.5" r="2.2" fill="none" stroke="#444444" stroke-width="1.3" stroke-dasharray="1.2 0.9"/><circle cx="3.5" cy="3.5" r="0.8" fill="#444444"/></svg>
<span class="t" style="left:880.30px;top:356.68px;font-size:14.5px;color:#111111;letter-spacing:-0.267px;">Indexes</span>
<svg class="r" style="left:943px;top:357px;" width="18" height="18" viewBox="0 0 18 18"><g fill="#ffffff" stroke="#333333" stroke-width="1.3"><path d="M0.7 4.5V0.7H7V4.5"/><rect x="0.7" y="4.5" width="16.6" height="4"/><rect x="0.7" y="8.5" width="16.6" height="4"/><rect x="0.7" y="12.5" width="16.6" height="4.6"/></g><path d="M2.5 6.5H15.5M2.5 10.5H15.5" stroke="#333333" stroke-width="1.6"/></svg>
<span class="t" style="left:968.30px;top:356.68px;font-size:14.5px;color:#111111;letter-spacing:-0.100px;">Columns</span>
<svg class="r" style="left:1038px;top:357px;" width="18" height="18" viewBox="0 0 18 18"><path d="M8 3C8 0.2 17.5 0.2 17.5 3V8.5C17.5 11.3 8 11.3 8 8.5Z" fill="#333333"/><ellipse cx="12.75" cy="3" rx="3.6" ry="1.1" fill="#d8d8d8"/><g fill="#333333"><rect x="3" y="7" width="6.5" height="3.6"/><rect x="0" y="14" width="5" height="3.6"/><rect x="7.5" y="14" width="5" height="3.6"/></g><path d="M6.2 10V12.3M2.5 14V12.3H10V14" fill="none" stroke="#333333" stroke-width="1.2"/><rect x="2.4" y="6.4" width="7.7" height="4.8" fill="none" stroke="#f0f0f0" stroke-width="1"/></svg>
<span class="t" style="left:1063.70px;top:356.68px;font-size:14.5px;color:#111111;letter-spacing:0.021px;">DDO&#x27;s / Filters</span>
<svg class="r" style="left:1170.5px;top:357px;" width="18" height="18" viewBox="0 0 18 18"><rect x="0.7" y="0.7" width="16.6" height="16.6" fill="#fdfdfd" stroke="#333333" stroke-width="1.4"/><rect x="0.7" y="0.7" width="16.6" height="2.6" fill="#333333"/><path d="M12.6 0.5V3.4" stroke="#f0f0f0" stroke-width="1"/></svg>
<span class="t" style="left:1196.70px;top:356.68px;font-size:14.5px;color:#111111;letter-spacing:0.344px;">Attributes</span>
<div class="r " style="left:790px;top:392px;width:829px;height:409px;background:#ffffff;border:1px solid #828282;box-sizing:border-box;"></div>
<div class="r" style="left:791px;top:393px;width:826px;height:407px;overflow:hidden">
<div class="r " style="left:135px;top:0px;width:1px;height:31px;background:#e2e2e2;"></div>
<div class="r " style="left:135px;top:31px;width:1px;height:344px;background:repeating-linear-gradient(to bottom,#f1f1f1 0 1px,transparent 1px 3px);"></div>
<div class="r " style="left:230px;top:0px;width:1px;height:31px;background:#e2e2e2;"></div>
<div class="r " style="left:230px;top:31px;width:1px;height:344px;background:repeating-linear-gradient(to bottom,#f1f1f1 0 1px,transparent 1px 3px);"></div>
<div class="r " style="left:505px;top:0px;width:1px;height:31px;background:#e2e2e2;"></div>
<div class="r " style="left:505px;top:31px;width:1px;height:344px;background:repeating-linear-gradient(to bottom,#f1f1f1 0 1px,transparent 1px 3px);"></div>
<div class="r " style="left:755px;top:0px;width:1px;height:31px;background:#e2e2e2;"></div>
<div class="r " style="left:755px;top:31px;width:1px;height:344px;background:repeating-linear-gradient(to bottom,#f1f1f1 0 1px,transparent 1px 3px);"></div>
<div class="r " style="left:9px;top:56px;width:818px;height:1px;background:repeating-linear-gradient(to right,#e9e9e9 0 1px,transparent 1px 3px);"></div>
<div class="r " style="left:9px;top:82px;width:818px;height:1px;background:repeating-linear-gradient(to right,#e9e9e9 0 1px,transparent 1px 3px);"></div>
<div class="r " style="left:9px;top:108px;width:818px;height:1px;background:repeating-linear-gradient(to right,#e9e9e9 0 1px,transparent 1px 3px);"></div>
<div class="r " style="left:9px;top:134px;width:818px;height:1px;background:repeating-linear-gradient(to right,#e9e9e9 0 1px,transparent 1px 3px);"></div>
<div class="r " style="left:9px;top:160px;width:818px;height:1px;background:repeating-linear-gradient(to right,#e9e9e9 0 1px,transparent 1px 3px);"></div>
<div class="r " style="left:9px;top:186px;width:818px;height:1px;background:repeating-linear-gradient(to right,#e9e9e9 0 1px,transparent 1px 3px);"></div>
<div class="r " style="left:9px;top:212px;width:818px;height:1px;background:repeating-linear-gradient(to right,#e9e9e9 0 1px,transparent 1px 3px);"></div>
<div class="r " style="left:9px;top:238px;width:818px;height:1px;background:repeating-linear-gradient(to right,#e9e9e9 0 1px,transparent 1px 3px);"></div>
<div class="r " style="left:9px;top:264px;width:818px;height:1px;background:repeating-linear-gradient(to right,#e9e9e9 0 1px,transparent 1px 3px);"></div>
<div class="r " style="left:9px;top:290px;width:818px;height:1px;background:repeating-linear-gradient(to right,#e9e9e9 0 1px,transparent 1px 3px);"></div>
<div class="r " style="left:9px;top:316px;width:818px;height:1px;background:repeating-linear-gradient(to right,#e9e9e9 0 1px,transparent 1px 3px);"></div>
<div class="r " style="left:9px;top:342px;width:818px;height:1px;background:repeating-linear-gradient(to right,#e9e9e9 0 1px,transparent 1px 3px);"></div>
<div class="r " style="left:9px;top:368px;width:818px;height:1px;background:repeating-linear-gradient(to right,#e9e9e9 0 1px,transparent 1px 3px);"></div>
<span class="t" style="left:80.30px;top:5.08px;font-size:14.5px;color:#111111;letter-spacing:-0.400px;">Recnum</span>
<span class="t" style="left:213.00px;top:5.08px;font-size:14.5px;color:#111111;letter-spacing:-0.300px;">ID</span>
<span class="t" style="left:237.30px;top:5.08px;font-size:14.5px;color:#111111;letter-spacing:0.067px;">Name</span>
<span class="t" style="left:512.50px;top:5.08px;font-size:14.5px;color:#111111;letter-spacing:-0.150px;">Address</span>
<span class="t" style="left:762.30px;top:5.08px;font-size:14.5px;color:#111111;letter-spacing:-0.433px;">City</span>
<span class="t" style="left:124.20px;top:32.98px;font-size:14.5px;color:#111111;">1</span>
<span class="t" style="left:219.70px;top:32.98px;font-size:14.5px;color:#111111;">2</span>
<span class="t" style="left:234.80px;top:32.98px;font-size:14.5px;color:#111111;letter-spacing:0.189px;">Book World</span>
<span class="t" style="left:509.80px;top:32.98px;font-size:14.5px;color:#111111;letter-spacing:-0.306px;">6501 S.E. 25th Ave.</span>
<span class="t" style="left:759.70px;top:32.98px;font-size:14.5px;color:#111111;letter-spacing:-0.200px">Coral Gab</span>
<span class="t" style="left:124.20px;top:58.98px;font-size:14.5px;color:#111111;">2</span>
<span class="t" style="left:219.70px;top:58.98px;font-size:14.5px;color:#111111;">3</span>
<span class="t" style="left:234.80px;top:58.98px;font-size:14.5px;color:#111111;letter-spacing:0.119px;">The Book Emporium</span>
<span class="t" style="left:509.80px;top:58.98px;font-size:14.5px;color:#111111;letter-spacing:-0.341px;">145 N.E. 56th AVE.</span>
<span class="t" style="left:759.70px;top:58.98px;font-size:14.5px;color:#111111;letter-spacing:-0.189px">Coral Springs</span>
<span class="t" style="left:124.20px;top:84.98px;font-size:14.5px;color:#111111;">3</span>
<span class="t" style="left:219.70px;top:84.98px;font-size:14.5px;color:#111111;">4</span>
<span class="t" style="left:234.80px;top:84.98px;font-size:14.5px;color:#111111;letter-spacing:0.010px;">Technical Book Supply</span>
<span class="t" style="left:509.80px;top:84.98px;font-size:14.5px;color:#111111;letter-spacing:-0.175px;">14 E. Main Street</span>
<span class="t" style="left:759.70px;top:84.98px;font-size:14.5px;color:#111111;letter-spacing:0.000px">San Diego</span>
<span class="t" style="left:124.20px;top:110.98px;font-size:14.5px;color:#111111;">4</span>
<span class="t" style="left:219.70px;top:110.98px;font-size:14.5px;color:#111111;">5</span>
<span class="t" style="left:234.80px;top:110.98px;font-size:14.5px;color:#111111;letter-spacing:-0.055px;">Construction Resource</span>
<span class="t" style="left:509.80px;top:110.98px;font-size:14.5px;color:#111111;letter-spacing:-0.233px;">P.O. Box 1792</span>
<span class="t" style="left:759.70px;top:110.98px;font-size:14.5px;color:#111111;letter-spacing:-0.200px">Denver</span>
<span class="t" style="left:124.20px;top:136.98px;font-size:14.5px;color:#111111;">5</span>
<span class="t" style="left:219.70px;top:136.98px;font-size:14.5px;color:#111111;">6</span>
<span class="t" style="left:234.80px;top:136.98px;font-size:14.5px;color:#111111;letter-spacing:0.080px;">Ace Publications</span>
<span class="t" style="left:509.80px;top:136.98px;font-size:14.5px;color:#111111;letter-spacing:0.073px;">4514 Lombard St - Suite 123</span>
<span class="t" style="left:759.70px;top:136.98px;font-size:14.5px;color:#111111;letter-spacing:-0.633px">San Fransisco</span>
<span class="t" style="left:124.20px;top:162.98px;font-size:14.5px;color:#111111;">6</span>
<span class="t" style="left:219.70px;top:162.98px;font-size:14.5px;color:#111111;">7</span>
<span class="t" style="left:234.80px;top:162.98px;font-size:14.5px;color:#111111;letter-spacing:0.106px;">Software Publishing</span>
<span class="t" style="left:509.80px;top:162.98px;font-size:14.5px;color:#111111;letter-spacing:-0.282px;">P.O. Box 123</span>
<span class="t" style="left:759.70px;top:162.98px;font-size:14.5px;color:#111111;letter-spacing:-0.250px">Bostn</span>
<span class="t" style="left:124.20px;top:188.98px;font-size:14.5px;color:#111111;">7</span>
<span class="t" style="left:219.70px;top:188.98px;font-size:14.5px;color:#111111;">8</span>
<span class="t" style="left:234.80px;top:188.98px;font-size:14.5px;color:#111111;letter-spacing:-0.106px;">Paperback Merchant</span>
<span class="t" style="left:509.80px;top:188.98px;font-size:14.5px;color:#111111;letter-spacing:-0.112px;">2734 Center Blvd.</span>
<span class="t" style="left:759.70px;top:188.98px;font-size:14.5px;color:#111111;letter-spacing:-0.213px">Fort Worth</span>
<span class="t" style="left:124.20px;top:214.98px;font-size:14.5px;color:#111111;">8</span>
<span class="t" style="left:219.70px;top:214.98px;font-size:14.5px;color:#111111;">9</span>
<span class="t" style="left:234.80px;top:214.98px;font-size:14.5px;color:#111111;letter-spacing:-0.250px;">Business Work Books</span>
<span class="t" style="left:509.80px;top:214.98px;font-size:14.5px;color:#111111;letter-spacing:-0.036px;">9182A A. Street</span>
<span class="t" style="left:759.70px;top:214.98px;font-size:14.5px;color:#111111;letter-spacing:0.000px">San Diego</span>
<span class="t" style="left:124.20px;top:240.98px;font-size:14.5px;color:#111111;">9</span>
<span class="t" style="left:211.70px;top:240.98px;font-size:14.5px;color:#111111;">10</span>
<span class="t" style="left:234.80px;top:240.98px;font-size:14.5px;color:#111111;letter-spacing:0.129px;">Olde Book Merchant</span>
<span class="t" style="left:509.80px;top:240.98px;font-size:14.5px;color:#111111;letter-spacing:0.012px;">1371 Market Street</span>
<span class="t" style="left:759.70px;top:240.98px;font-size:14.5px;color:#111111;letter-spacing:-0.633px">San Fransisco</span>
<div class="r " style="left:1px;top:386px;width:824px;height:20px;background:#f0f0f0;"></div>
<div class="r " style="left:21.5px;top:386px;width:409.5px;height:20px;background:#cdcdcd;"></div>
<svg class="r" style="left:6px;top:390.3px;" width="8" height="11" viewBox="0 0 8 11"><path d="M7 0.8L1.8 5.5L7 10.2" fill="none" stroke="#555555" stroke-width="1.8"/></svg>
<svg class="r" style="left:811px;top:390.3px;" width="8" height="11" viewBox="0 0 8 11"><path d="M1 0.8L6.2 5.5L1 10.2" fill="none" stroke="#555555" stroke-width="1.8"/></svg>
</div>
<div class="r " style="left:434px;top:807px;width:1192px;height:1px;background:#bfe0fa;"></div>
<div class="r " style="left:434px;top:808px;width:1192px;height:26px;background:#0078d7;"></div>
<svg class="r" style="left:438px;top:812px;" width="20" height="20" viewBox="0 0 20 20"><circle cx="10" cy="10" r="9.8" fill="#ffffff"/><circle cx="10" cy="10" r="7.3" fill="none" stroke="#8e8e8e" stroke-width="2.3"/><path d="M5 5L15 15" stroke="#8e8e8e" stroke-width="2.5"/></svg>
<span class="t" style="left:700.00px;top:812.58px;font-size:14.5px;color:#ffffff;letter-spacing:-0.243px;">Filters:</span>
<span class="t" style="left:755.70px;top:812.58px;font-size:14.5px;color:#ffffff;letter-spacing:0.325px;">0 / 0</span>
<span class="t" style="left:798.50px;top:812.58px;font-size:14.5px;color:#ffffff;letter-spacing:-0.037px;">Filelist:</span>
<span class="t" style="left:856.20px;top:812.58px;font-size:14.5px;color:#ffffff;letter-spacing:0.254px;">c:\dataflex 19.1 examples\order entry mysql database\Data\Filelist.cfg</span>
<span class="t" style="left:1334.30px;top:812.58px;font-size:14.5px;color:#ffffff;">RowId:</span>
<span class="t" style="left:1392.30px;top:812.58px;font-size:14.5px;color:#ffffff;letter-spacing:-0.186px;">01000000</span>
<span class="t" style="left:1469.30px;top:812.58px;font-size:14.5px;color:#5fb2f2;letter-spacing:-2.000px;">CAPS</span>
<span class="t" style="left:1517.30px;top:812.58px;font-size:14.5px;color:#ffffff;letter-spacing:0.200px;">NUM</span>
<span class="t" style="left:1564.30px;top:812.58px;font-size:14.5px;color:#5fb2f2;letter-spacing:-2.200px;">SCRL</span>
<svg class="r" style="left:1609px;top:818px;" width="11" height="11" viewBox="0 0 11 11"><g fill="#5fb2f2"><rect x="9.3" y="9.3" width="1.2" height="1.2"/><rect x="6.3" y="9.3" width="1.2" height="1.2"/><rect x="3.3" y="9.3" width="1.2" height="1.2"/><rect x="0.3" y="9.3" width="1.2" height="1.2"/><rect x="9.3" y="6.3" width="1.2" height="1.2"/><rect x="6.3" y="6.3" width="1.2" height="1.2"/><rect x="3.3" y="6.3" width="1.2" height="1.2"/><rect x="9.3" y="3.3" width="1.2" height="1.2"/><rect x="6.3" y="3.3" width="1.2" height="1.2"/><rect x="9.3" y="0.3" width="1.2" height="1.2"/></g></svg></div>
<svg class="r" style="left:1011.5px;top:611.6px;" width="13" height="21" viewBox="0 0 13 21"><path d="M0.7 0.8V16.6L4.4 13.2L7 19.2L9.4 18.2L6.8 12.4H11.6Z" fill="#ffffff" stroke="#000000" stroke-width="1" stroke-linejoin="miter"/></svg>
</body></html>
